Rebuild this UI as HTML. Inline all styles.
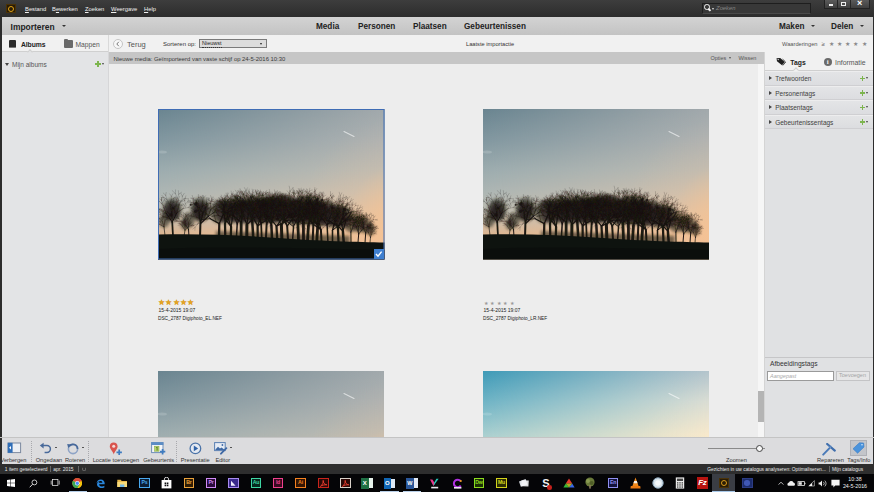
<!DOCTYPE html>
<html><head><meta charset="utf-8"><title>Organizer</title>
<style>
*{box-sizing:border-box;margin:0;padding:0}
html,body{width:874px;height:492px;overflow:hidden;background:#ededed;font-family:"Liberation Sans",sans-serif;}
.a{position:absolute;white-space:nowrap}
#title{left:0;top:0;width:874px;height:17px;background:linear-gradient(#3d3d3d,#2c2c2c)}
#title .m{top:5px;font-size:5.8px;color:#f0f0f0;line-height:8px}
#title .m u{text-decoration-thickness:0.5px;text-underline-offset:0.5px}
#nav{left:0;top:17px;width:874px;height:18px;background:linear-gradient(#d3d3d3,#c3c3c3);border-left:2px solid #2c2c2c;border-right:1px solid #2c2c2c}
.hb{font-family:"Liberation Sans",sans-serif;font-weight:bold;font-size:8.2px;color:#222;line-height:10px;top:21.8px}
#sub{left:0;top:35px;width:874px;height:17px;background:#f1f1f1;border-left:2px solid #2c2c2c;border-right:1px solid #2c2c2c}
.t6{font-size:6px;color:#333;line-height:8px}
.t7{font-size:7.5px;color:#444;line-height:9px}
#left{left:0;top:52px;width:109.4px;height:385px;background:#e3e4e6;border-left:2px solid #2c2c2c;border-right:1px solid #d6d6d8}
#main{left:109px;top:52px;width:656px;height:385px;background:#ededed}
#nm{left:109.4px;top:52px;width:654.6px;height:12px;background:#c6c6c6}
#right{left:764px;top:52px;width:110px;height:385px;background:#e0e1e3;border-right:1px solid #2c2c2c;border-left:1px solid #d4d4d4}
.row{left:765px;width:108px;height:14.5px;background:linear-gradient(#e3e4e6,#dcdde0);border-top:1px solid #ededee;border-bottom:1px solid #cfcfd2}
.row span{position:absolute;left:10.2px;top:3px;font-size:6.5px;color:#404040;line-height:8px}
.tri{position:absolute;left:4px;top:4px;width:0;height:0;border-left:3px solid #444;border-top:2px solid transparent;border-bottom:2px solid transparent}
.plus{position:absolute;width:6px;height:6px}
.plus:before{content:"";position:absolute;left:2.2px;top:0.2px;width:1.6px;height:5.6px;background:#7db54e}
.plus:after{content:"";position:absolute;left:0.2px;top:2.2px;width:5.6px;height:1.6px;background:#7db54e}
.dd{position:absolute;width:0;height:0;border-top:2px solid #444;border-left:1.5px solid transparent;border-right:1.5px solid transparent}
#tool{left:0;top:437px;width:874px;height:27px;background:#dcdcde;border-top:1px solid #c4c4c4}
#tool .l{font-size:5.7px;color:#333;line-height:7px;top:18.5px}
.sep{top:3px;width:0;height:21px;border-left:1px dotted #a9a9ad}
#status{left:0;top:464px;width:874px;height:10px;background:#2e2e2e}
#status .s{font-size:5.1px;color:#e8e8e8;top:2px;line-height:7px}
#task{left:0;top:474px;width:874px;height:18px;background:#050507}
.ti{position:absolute;top:3px;width:11px;height:11px;font-size:5px;line-height:9px;text-align:center;font-weight:bold;font-family:"Liberation Sans",sans-serif}
</style></head><body>

<!-- main area -->
<div class="a" id="main"></div>
<div class="a" id="nm">
  <div class="a t6" style="left:4px;top:2.6px;color:#3a3a3a;font-size:5.9px">Nieuwe media: Geïmporteerd van vaste schijf op 24-5-2016 10:30</div>
  <div class="a t6" style="left:601px;top:2px;color:#555;font-size:5.5px">Opties</div>
  <div class="dd" style="left:620px;top:5px;border-top-color:#555"></div>
  <div class="a t6" style="left:629px;top:2px;color:#555;font-size:5.5px">Wissen</div>
</div>
<!-- scrollbar -->
<div class="a" style="left:758px;top:64px;width:6px;height:373px;background:#f6f6f6"></div>
<div class="a" style="left:758px;top:391px;width:5.5px;height:31px;background:#b4b4b4"></div>

<!-- PHOTOS placeholder -->
<svg class="a" style="left:158px;top:109px" width="226.5" height="150.5" viewBox="0 0 226.5 150.5"><defs><linearGradient id="p1L" x1="0" y1="0" x2="0" y2="1"><stop offset="0" stop-color="#6a8591"/><stop offset="0.2" stop-color="#8197a0"/><stop offset="0.4" stop-color="#9cacaf"/><stop offset="0.55" stop-color="#adb6b4"/><stop offset="0.68" stop-color="#bcbbb1"/><stop offset="0.76" stop-color="#cdbba6"/><stop offset="0.84" stop-color="#dfb690"/></linearGradient><linearGradient id="p1R" x1="0" y1="0" x2="0" y2="1"><stop offset="0" stop-color="#a2a9ac"/><stop offset="0.2" stop-color="#aeb2b2"/><stop offset="0.4" stop-color="#bdbbb3"/><stop offset="0.55" stop-color="#cfc0ae"/><stop offset="0.68" stop-color="#dfc2a6"/><stop offset="0.84" stop-color="#efc19a"/></linearGradient><linearGradient id="p1M" x1="0" y1="0" x2="1" y2="0"><stop offset="0" stop-color="#000"/><stop offset="1" stop-color="#fff"/></linearGradient><mask id="p1K" maskContentUnits="objectBoundingBox"><rect width="1" height="1" fill="url(#p1M)"/></mask><filter id="p1B" x="-5%" y="-5%" width="110%" height="110%"><feGaussianBlur stdDeviation="0.4"/></filter><filter id="p1C" x="-5%" y="-5%" width="110%" height="110%"><feGaussianBlur stdDeviation="1.6"/></filter><radialGradient id="p1G" gradientUnits="userSpaceOnUse" cx="246" cy="112" r="105"><stop offset="0" stop-color="#f8c391" stop-opacity="0.9"/><stop offset="0.28" stop-color="#f8c391" stop-opacity="0.5"/><stop offset="0.55" stop-color="#f8c391" stop-opacity="0.12"/><stop offset="1" stop-color="#f8c391" stop-opacity="0"/></radialGradient></defs><rect width="226.5" height="150.5" fill="url(#p1L)"/><rect width="226.5" height="150.5" fill="url(#p1R)" mask="url(#p1K)"/><rect width="226.5" height="150.5" fill="url(#p1G)"/><path d="M186 22.5 L196 27.5" stroke="#fff" stroke-opacity="0.6" stroke-width="1.1" stroke-linecap="round"/><ellipse cx="4" cy="43" rx="5" ry="1.6" fill="#fff" fill-opacity="0.16"/><g filter="url(#p1C)" fill="#1e1a14" fill-opacity="0.58"><ellipse cx="14.2" cy="101.2" rx="9.5" ry="11.8"/><ellipse cx="14.2" cy="102.2" rx="7.6" ry="9.1"/><ellipse cx="14.2" cy="103.2" rx="5.3" ry="7.6"/><ellipse cx="6.0" cy="111.8" rx="5.5" ry="6.8"/><ellipse cx="42.4" cy="100.8" rx="10.0" ry="12.4"/><ellipse cx="42.4" cy="101.8" rx="8.0" ry="9.6"/><ellipse cx="42.4" cy="102.8" rx="5.6" ry="8.0"/><ellipse cx="30.5" cy="111.3" rx="6.0" ry="7.4"/><ellipse cx="27.0" cy="115.2" rx="4.5" ry="5.6"/><ellipse cx="61.3" cy="102.7" rx="9.5" ry="11.8"/><ellipse cx="67.0" cy="102.2" rx="9.8" ry="12.1"/><ellipse cx="73.1" cy="102.9" rx="9.6" ry="11.9"/><ellipse cx="79.2" cy="100.5" rx="10.6" ry="13.1"/><ellipse cx="83.2" cy="102.7" rx="9.8" ry="12.2"/><ellipse cx="88.9" cy="102.6" rx="9.9" ry="12.3"/><ellipse cx="94.3" cy="100.3" rx="10.9" ry="13.5"/><ellipse cx="99.6" cy="102.4" rx="10.2" ry="12.6"/><ellipse cx="103.1" cy="101.7" rx="10.5" ry="13.0"/><ellipse cx="108.6" cy="100.8" rx="10.9" ry="13.5"/><ellipse cx="113.4" cy="100.6" rx="11.0" ry="13.6"/><ellipse cx="118.5" cy="100.3" rx="11.2" ry="13.9"/><ellipse cx="123.4" cy="99.3" rx="11.6" ry="14.4"/><ellipse cx="129.2" cy="100.5" rx="11.2" ry="13.9"/><ellipse cx="135.5" cy="102.2" rx="10.7" ry="13.2"/><ellipse cx="139.9" cy="102.3" rx="10.7" ry="13.3"/><ellipse cx="145.4" cy="100.8" rx="11.4" ry="14.1"/><ellipse cx="150.5" cy="103.7" rx="10.3" ry="12.8"/><ellipse cx="155.3" cy="101.6" rx="11.2" ry="13.9"/><ellipse cx="159.8" cy="103.2" rx="10.6" ry="13.2"/><ellipse cx="162.9" cy="105.6" rx="9.8" ry="12.2"/><ellipse cx="169.1" cy="104.1" rx="10.5" ry="13.0"/><ellipse cx="174.5" cy="106.9" rx="9.5" ry="11.8"/><ellipse cx="179.9" cy="107.4" rx="9.4" ry="11.6"/><ellipse cx="184.9" cy="108.1" rx="9.2" ry="11.4"/><ellipse cx="192.9" cy="115.0" rx="6.8" ry="8.4"/><ellipse cx="200.7" cy="115.2" rx="6.8" ry="8.4"/><ellipse cx="207.7" cy="116.8" rx="6.2" ry="7.8"/><ellipse cx="212.5" cy="120.4" rx="5.0" ry="6.2"/><rect x="58" y="122" width="134" height="9" transform="rotate(2 58 122)"/></g><g filter="url(#p1B)" stroke="#17130e" fill="none" stroke-linecap="round"><path d="M21.1 95.8L19.6 89.3M19.6 89.3L17.3 84.6M17.3 84.6L14.2 81.6M17.3 84.6L17.6 80.8M19.6 89.3L20.8 85.1M20.8 85.1L20.3 81.6M20.8 85.1L23.5 83.3M20.0 91.1L21.8 87.1M21.1 95.8L24.0 91.4M24.0 91.4L24.4 87.2M24.4 87.2L22.9 84.4M24.4 87.2L26.2 84.4M24.0 91.4L27.0 89.5M27.0 89.5L27.9 86.8M27.0 89.5L29.6 89.7M23.1 92.8L26.3 91.8M25.1 99.6L27.3 95.0M27.3 95.0L26.7 91.7M26.7 91.7L25.6 89.5M26.7 91.7L27.1 89.1M27.3 95.0L30.0 92.4M30.0 92.4L30.5 89.6M30.0 92.4L32.7 91.5M26.4 97.0L24.7 94.1M25.1 99.6L30.1 98.5M30.1 98.5L32.8 95.9M32.8 95.9L33.8 93.2M32.8 95.9L35.5 95.7M30.1 98.5L33.3 99.1M33.3 99.1L35.5 97.5M33.3 99.1L35.5 100.4M27.0 99.2L28.2 96.1M16.3 99.8L12.9 95.7M12.9 95.7L9.0 93.9M12.9 95.7L12.7 92.1M16.3 99.8L18.7 95.7M18.7 95.7L19.7 92.2M18.7 95.7L21.6 94.8M17.1 103.6L19.7 100.2M12.0 95.5L8.9 90.5M8.9 90.5L5.7 88.4M5.7 88.4L3.3 88.5M5.7 88.4L3.9 86.4M8.9 90.5L7.7 86.3M7.7 86.3L5.2 84.0M7.7 86.3L8.2 83.5M10.4 93.0L6.7 91.8M12.0 95.5L13.2 91.0M13.2 91.0L13.4 87.3M13.4 87.3L11.7 84.9M13.4 87.3L14.8 84.8M13.2 91.0L15.8 89.2M15.8 89.2L17.3 87.6M15.8 89.2L18.0 88.9M12.6 93.3L15.4 92.0M12.5 97.5L15.1 93.5M15.1 93.5L15.8 90.1M15.1 93.5L18.8 92.2M17.0 97.5L18.6 93.9M18.6 93.9L18.4 90.8M18.4 90.8L17.3 88.4M18.4 90.8L18.8 88.4M18.6 93.9L20.0 91.9M20.0 91.9L20.3 90.2M20.0 91.9L21.5 91.4M17.0 97.5L20.8 96.0M20.8 96.0L22.0 93.1M22.0 93.1L22.8 91.1M22.0 93.1L23.6 91.6M20.8 96.0L23.4 96.1M23.4 96.1L25.3 95.5M23.4 96.1L24.8 96.8M18.5 96.9L20.8 98.1M9.3 102.8L5.1 101.5M5.1 101.5L1.6 102.3M5.1 101.5L2.5 99.5M9.3 102.8L7.4 97.8M7.4 97.8L4.7 95.9M7.4 97.8L8.6 93.8M1.6 100.6L-3.7 101.5M-3.7 101.5L-6.6 104.5M-6.6 104.5L-6.9 107.9M-6.6 104.5L-9.4 106.6M-3.7 101.5L-7.8 101.4M-7.8 101.4L-10.7 101.6M-7.8 101.4L-10.1 100.0M-2.3 101.3L-4.2 104.2M1.6 100.6L-1.4 95.5M-1.4 95.5L-5.1 92.5M-5.1 92.5L-9.0 92.8M-5.1 92.5L-6.4 89.7M-1.4 95.5L-1.8 91.4M-1.8 91.4L-3.6 88.7M-1.8 91.4L-1.5 88.3M-0.8 96.5L-0.2 92.7M5.1 102.6L0.0 103.1M0.0 103.1L-2.6 104.7M0.0 103.1L-3.3 102.1M5.9 98.7L3.7 94.5M3.7 94.5L1.2 92.4M1.2 92.4L-0.9 92.2M1.2 92.4L-0.1 90.2M3.7 94.5L3.7 91.0M3.7 91.0L3.4 88.6M3.7 91.0L4.2 88.2M5.9 98.7L4.7 94.1M4.7 94.1L3.5 91.3M3.5 91.3L1.8 90.1M3.5 91.3L3.5 89.1M4.7 94.1L6.1 91.0M6.1 91.0L6.0 88.6M6.1 91.0L7.8 89.5M5.2 96.1L2.8 94.2M7.2 101.8L3.3 100.5M3.3 100.5L0.2 101.5M3.3 100.5L0.9 99.1M5.8 107.7L1.6 109.7M1.6 109.7L-0.7 112.2M1.6 109.7L-1.4 109.8M5.8 107.7L2.4 104.0M2.4 104.0L-0.2 101.6M2.4 104.0L1.3 100.9M6.9 111.9L5.3 108.0M5.3 108.0L2.6 105.8M2.6 105.8L0.0 105.0M2.6 105.8L1.6 103.2M5.3 108.0L5.9 105.0M5.9 105.0L4.8 103.4M5.9 105.0L7.7 103.8M5.8 109.2L7.3 106.9M6.9 111.9L9.0 108.5M9.0 108.5L8.8 105.6M8.8 105.6L7.5 103.9M8.8 105.6L9.3 103.4M9.0 108.5L11.7 106.8M11.7 106.8L13.2 105.6M11.7 106.8L14.2 106.6M7.6 110.8L10.1 109.9M4.2 112.2L1.0 108.9M1.0 108.9L-2.1 107.4M-2.1 107.4L-4.2 107.8M-2.1 107.4L-3.9 105.2M1.0 108.9L0.1 106.2M0.1 106.2L-1.4 104.2M0.1 106.2L0.9 104.3M4.2 112.2L4.7 107.8M4.7 107.8L4.2 104.7M4.2 104.7L3.5 102.8M4.2 104.7L4.8 102.8M4.7 107.8L5.8 105.0M5.8 105.0L5.6 102.8M5.8 105.0L7.4 103.4M4.4 110.5L3.1 108.1M0.8 114.9L-3.9 114.4M-3.9 114.4L-7.3 115.4M-7.3 115.4L-8.5 117.4M-7.3 115.4L-9.5 114.8M-3.9 114.4L-7.3 113.2M-7.3 113.2L-9.4 113.6M-7.3 113.2L-8.9 111.5M0.8 114.9L-0.8 110.9M-0.8 110.9L-3.6 109.5M-3.6 109.5L-5.8 109.5M-3.6 109.5L-4.8 107.7M-0.8 110.9L-0.4 107.9M-0.4 107.9L-1.3 105.8M-0.4 107.9L0.8 105.9M3.9 116.6L2.4 113.0M2.4 113.0L-0.2 111.6M2.4 113.0L3.3 110.3M52.5 94.3L50.8 90.9M50.8 90.9L49.3 88.5M50.8 90.9L50.8 88.4M52.5 94.3L53.6 89.9M53.6 89.9L52.6 86.6M53.6 89.9L55.7 88.0M57.1 97.3L58.8 94.1M58.8 94.1L59.2 91.8M58.8 94.1L61.0 93.2M57.1 97.3L60.8 96.0M60.8 96.0L63.0 94.7M60.8 96.0L63.4 96.1M54.8 98.9L55.7 95.8M58.3 100.1L59.0 96.7M59.0 96.7L58.5 94.4M59.0 96.7L60.7 94.7M58.3 100.1L61.3 98.0M61.3 98.0L62.5 95.9M61.3 98.0L63.7 98.0M57.3 101.5L60.2 101.1M60.2 103.0L62.6 100.9M62.6 100.9L63.6 99.1M62.6 100.9L64.7 100.5M60.2 103.0L63.8 103.8M63.8 103.8L66.0 103.3M63.8 103.8L65.5 105.2M58.2 103.3L60.4 105.3M54.3 104.7L56.0 100.8M56.0 100.8L56.6 97.5M56.0 100.8L58.7 99.3M47.4 105.4L47.7 100.6M47.7 100.6L46.8 97.9M47.7 100.6L49.2 97.5M47.4 105.4L49.6 100.1M49.6 100.1L50.0 96.5M49.6 100.1L52.3 97.6M46.0 109.7L50.0 107.5M37.7 96.3L34.4 95.6M34.4 95.6L32.0 96.8M34.4 95.6L32.5 94.1M37.7 96.3L35.3 94.1M35.3 94.1L32.9 93.2M35.3 94.1L35.3 91.9M40.2 97.9L37.3 98.1M40.3 94.7L38.1 92.3M38.1 92.3L35.9 91.2M38.1 92.3L38.0 89.9M40.3 94.7L40.4 92.2M40.4 92.2L39.6 90.6M40.4 92.2L40.9 90.6M40.8 96.4L38.6 95.0M43.8 102.5L39.7 101.6M39.7 101.6L36.8 101.9M39.7 101.6L37.1 99.6M48.5 93.8L48.8 91.1M48.8 91.1L48.5 88.8M48.8 91.1L50.2 89.6M48.5 93.8L51.0 91.6M51.0 91.6L51.5 89.3M51.0 91.6L53.5 91.1M48.2 96.0L46.1 94.0M51.3 94.4L53.6 91.1M53.6 91.1L54.1 88.0M53.6 91.1L56.2 89.9M51.3 94.4L53.7 92.4M53.7 92.4L55.1 90.5M53.7 92.4L55.8 92.4M35.8 94.4L32.4 93.1M32.4 93.1L29.6 93.9M32.4 93.1L31.0 91.5M35.8 94.4L35.2 90.9M35.2 90.9L33.5 88.9M35.2 90.9L36.0 88.4M38.3 96.5L37.5 93.6M38.4 91.8L35.1 89.5M35.1 89.5L32.6 89.2M35.1 89.5L34.2 86.4M38.4 91.8L40.5 88.6M40.5 88.6L40.4 85.5M40.5 88.6L43.0 88.0M40.2 100.8L43.2 97.4M43.2 97.4L43.7 94.5M43.2 97.4L46.0 96.5M44.7 92.2L44.0 88.9M44.0 88.9L42.1 87.2M44.0 88.9L44.5 86.3M44.7 92.2L45.8 88.6M45.8 88.6L45.3 86.4M45.8 88.6L47.6 86.7M49.4 94.8L52.8 92.4M52.8 92.4L55.0 90.5M52.8 92.4L56.3 92.1M49.4 94.8L52.8 94.4M52.8 94.4L54.4 92.5M52.8 94.4L54.8 95.3M42.5 101.3L46.9 98.8M46.9 98.8L48.7 95.4M46.9 98.8L50.5 98.8M46.7 101.9L49.0 97.7M49.0 97.7L49.1 94.1M49.0 97.7L51.6 95.7M46.7 101.9L50.4 99.8M50.4 99.8L52.9 97.9M50.4 99.8L52.9 98.7M30.5 114.0L29.3 109.0M29.3 109.0L27.5 105.5M27.5 105.5L25.2 103.4M27.5 105.5L28.3 103.1M29.3 109.0L30.2 105.5M30.2 105.5L29.9 102.8M30.2 105.5L32.3 103.5M29.7 110.5L31.1 107.5M30.5 114.0L32.5 109.8M32.5 109.8L33.3 106.2M33.3 106.2L32.7 103.5M33.3 106.2L34.9 103.7M32.5 109.8L35.0 107.6M35.0 107.6L35.5 104.9M35.0 107.6L37.0 106.6M31.6 111.7L30.2 109.1M30.5 116.1L27.2 113.5M27.2 113.5L24.4 112.9M27.2 113.5L26.1 111.0M27.4 114.8L23.1 112.3M23.1 112.3L20.1 112.2M20.1 112.2L18.1 112.4M20.1 112.2L17.9 111.8M23.1 112.3L20.9 109.5M20.9 109.5L18.4 108.8M20.9 109.5L19.9 107.2M26.0 114.0L25.5 110.8M27.4 114.8L27.3 110.1M27.3 110.1L25.6 107.0M25.6 107.0L23.2 105.3M25.6 107.0L25.8 104.2M27.3 110.1L28.0 107.3M28.0 107.3L27.7 105.2M28.0 107.3L29.5 106.1M27.3 112.2L29.6 110.2M26.6 115.3L22.3 112.7M22.3 112.7L18.9 112.0M18.9 112.0L16.7 112.6M18.9 112.0L17.1 110.3M22.3 112.7L20.3 109.4M20.3 109.4L18.1 108.7M20.3 109.4L19.4 106.7M25.3 114.5L22.0 114.9M26.6 115.3L26.5 110.6M26.5 110.6L23.9 108.0M23.9 108.0L21.7 107.3M23.9 108.0L23.7 105.6M26.5 110.6L28.0 107.2M28.0 107.2L28.5 104.8M28.0 107.2L29.7 105.6M27.4 116.4L23.2 115.8M23.2 115.8L20.0 116.3M23.2 115.8L20.6 114.1M30.5 117.8L31.8 114.9M31.8 114.9L32.3 112.5M31.8 114.9L33.6 113.2M30.5 117.8L33.6 116.4M33.6 116.4L35.4 114.7M33.6 116.4L36.0 116.9M28.2 119.9L27.7 116.8M27.0 116.2L25.2 113.5M25.2 113.5L23.7 112.4M25.2 113.5L25.0 111.6M27.0 116.2L27.2 112.7M27.2 112.7L26.5 110.6M27.2 112.7L28.5 110.8M27.0 117.4L25.1 114.9M24.3 117.0L22.0 114.8M22.0 114.8L19.6 114.2M22.0 114.8L20.9 112.8M24.3 117.0L24.2 113.5M24.2 113.5L23.3 111.2M24.2 113.5L25.7 111.9M63.9 94.2L61.1 92.3M61.1 92.3L58.9 91.7M61.1 92.3L59.3 90.4M63.9 94.2L64.5 90.8M64.5 90.8L64.5 88.4M64.5 90.8L66.4 89.4M69.5 93.9L70.6 90.7M70.6 90.7L70.7 88.3M70.6 90.7L72.6 88.8M69.5 93.9L72.2 92.2M72.2 92.2L73.6 90.4M72.2 92.2L74.4 92.2M65.7 102.4L63.2 98.5M63.2 98.5L60.4 96.0M63.2 98.5L63.0 95.5M73.2 94.4L73.3 90.1M73.3 90.1L72.5 86.7M73.3 90.1L74.6 87.1M73.2 94.4L76.0 91.7M76.0 91.7L76.4 89.3M76.0 91.7L78.4 90.6M75.4 98.0L78.6 95.8M78.6 95.8L79.7 93.4M78.6 95.8L80.9 94.6M75.4 98.0L78.5 98.6M78.5 98.6L81.0 98.9M78.5 98.6L80.6 99.4M73.2 99.0L76.3 99.7M67.3 103.3L66.9 98.3M66.9 98.3L64.4 95.7M66.9 98.3L68.8 95.8M69.7 103.4L72.0 99.2M72.0 99.2L72.1 95.7M72.0 99.2L74.3 97.4M69.7 103.4L73.9 102.4M73.9 102.4L76.5 101.4M73.9 102.4L76.8 102.9M66.0 106.2L66.7 101.9M63.7 95.1L61.7 92.9M61.7 92.9L59.6 92.0M61.7 92.9L61.4 91.1M63.7 95.1L62.8 92.5M62.8 92.5L61.4 91.5M62.8 92.5L63.1 90.6M67.7 95.1L67.2 92.3M67.2 92.3L66.5 90.4M67.2 92.3L68.0 90.3M67.7 95.1L69.6 93.1M69.6 93.1L70.0 91.1M69.6 93.1L71.7 92.4M65.7 100.4L63.7 96.9M63.7 96.9L61.1 95.6M63.7 96.9L62.9 94.0M75.9 98.5L77.1 95.6M77.1 95.6L77.7 93.2M77.1 95.6L79.1 94.2M75.9 98.5L78.8 96.3M78.8 96.3L80.5 93.9M78.8 96.3L81.1 95.7M78.0 101.0L80.3 98.2M80.3 98.2L81.1 95.6M80.3 98.2L82.1 96.1M78.0 101.0L82.7 100.6M82.7 100.6L86.0 98.7M82.7 100.6L85.4 101.7M76.6 101.2L79.0 98.2M39.7 114.9L37.1 118.3M37.1 118.3L36.9 121.3M37.1 118.3L34.8 120.1M39.7 114.9L35.7 116.3M35.7 116.3L33.4 117.9M35.7 116.3L32.5 116.2M38.4 108.1L33.6 107.1M33.6 107.1L30.4 107.1M33.6 107.1L30.8 106.0M38.4 108.1L36.2 103.4M36.2 103.4L33.2 101.5M36.2 103.4L36.3 99.9M49.1 110.1L44.4 107.9M44.4 107.9L40.4 107.9M44.4 107.9L42.5 105.4M43.7 102.4L40.2 101.6M40.2 101.6L37.8 102.1M40.2 101.6L38.0 99.9M43.7 102.4L41.5 100.3M41.5 100.3L39.7 98.8M41.5 100.3L40.6 98.6M47.6 99.1L45.4 95.5M45.4 95.5L43.5 93.2M45.4 95.5L44.5 93.1M47.6 99.1L48.8 95.5M48.8 95.5L48.5 92.6M48.8 95.5L50.6 93.5M47.7 101.3L49.9 98.8M49.8 106.7L51.2 102.4M51.2 102.4L51.2 98.8M51.2 102.4L53.2 100.0M56.3 106.5L54.3 102.0M54.3 102.0L51.7 100.3M54.3 102.0L54.8 98.5M56.3 106.5L56.6 102.0M56.6 102.0L54.9 99.5M56.6 102.0L58.9 99.4M71.2 93.4L69.1 90.6M69.1 90.6L66.7 89.9M69.1 90.6L67.9 88.0M71.2 93.4L71.1 90.2M71.1 90.2L70.4 88.2M71.1 90.2L72.4 88.1M78.4 93.6L79.3 88.5M79.3 88.5L78.5 85.4M79.3 88.5L81.4 85.4M78.4 93.6L82.2 91.6M82.2 91.6L83.9 89.4M82.2 91.6L85.2 91.6M76.4 95.4L77.0 91.3M72.9 102.2L76.9 99.0M76.9 99.0L79.2 96.4M76.9 99.0L80.3 98.1M79.2 97.6L79.8 94.7M79.8 94.7L79.7 92.4M79.8 94.7L80.8 92.9M79.2 97.6L81.6 95.3M81.6 95.3L82.6 93.4M81.6 95.3L83.6 94.6M82.7 99.5L84.9 97.0M84.9 97.0L85.8 94.5M84.9 97.0L86.8 95.6M82.7 99.5L87.0 98.8M87.0 98.8L89.1 96.8M87.0 98.8L90.5 98.5M80.0 100.6L81.0 97.3M75.5 103.2L79.8 104.3M79.8 104.3L82.5 104.0M79.8 104.3L81.8 106.0M62.8 93.6L59.6 92.1M59.6 92.1L57.1 92.3M59.6 92.1L57.7 90.8M62.8 93.6L62.1 90.3M62.1 90.3L60.6 88.3M62.1 90.3L62.1 88.0M67.2 93.3L67.2 90.5M67.2 90.5L66.2 88.7M67.2 90.5L68.5 88.9M67.2 93.3L69.9 91.0M69.9 91.0L71.5 89.0M69.9 91.0L72.7 90.4M66.1 96.1L64.7 93.6M65.9 91.4L64.0 88.6M64.0 88.6L62.2 87.1M64.0 88.6L63.3 86.0M65.9 91.4L67.3 88.2M67.3 88.2L67.0 85.7M67.3 88.2L69.4 86.3M66.4 93.1L68.0 90.3M69.9 90.9L69.3 86.7M69.3 86.7L67.9 84.2M69.3 86.7L70.6 84.0M69.9 90.9L73.7 87.9M73.7 87.9L74.6 84.6M73.7 87.9L77.0 87.7M67.1 98.6L64.8 94.0M64.8 94.0L61.4 92.1M64.8 94.0L64.8 90.0M72.0 102.5L73.6 98.6M73.6 98.6L72.8 95.6M73.6 98.6L75.4 95.7M72.0 102.5L76.1 101.4M76.1 101.4L77.9 99.4M76.1 101.4L78.5 102.3M67.0 93.2L64.9 90.8M64.9 90.8L62.5 90.5M64.9 90.8L63.6 88.7M67.0 93.2L67.1 89.2M67.1 89.2L65.5 86.9M67.1 89.2L68.6 87.3M68.1 96.1L64.8 95.3M68.6 93.2L67.0 90.1M67.0 90.1L64.9 89.1M67.0 90.1L67.2 87.9M68.6 93.2L69.2 89.3M69.2 89.3L68.4 86.4M69.2 89.3L70.8 86.8M68.7 95.8L70.7 93.3M69.1 99.5L66.3 96.3M66.3 96.3L63.2 95.3M66.3 96.3L65.2 93.5M77.1 94.0L78.2 90.0M78.2 90.0L77.3 87.6M78.2 90.0L80.4 87.7M77.1 94.0L80.5 92.0M80.5 92.0L82.8 89.8M80.5 92.0L83.6 91.9M76.3 95.7L79.7 94.9M79.5 96.6L81.9 94.1M81.9 94.1L82.8 91.8M81.9 94.1L84.4 93.4M79.5 96.6L83.4 95.3M83.4 95.3L85.4 93.9M83.4 95.3L86.6 95.0M77.1 97.8L79.0 95.0M74.7 105.1L76.9 100.1M76.9 100.1L76.5 96.1M76.9 100.1L79.8 96.9M74.7 105.1L79.3 105.5M79.3 105.5L82.3 103.3M79.3 105.5L82.3 107.0M72.1 106.6L76.6 106.5M61.7 98.8L58.0 97.2M58.0 97.2L55.6 97.1M58.0 97.2L56.2 95.5M61.7 98.8L59.8 95.3M59.8 95.3L57.8 93.6M59.8 95.3L60.4 92.5M64.1 100.2L62.7 97.0M66.1 95.8L63.9 92.7M63.9 92.7L61.9 91.4M63.9 92.7L64.1 89.6M66.1 95.8L66.0 92.1M66.0 92.1L65.3 89.5M66.0 92.1L66.6 89.9M66.3 99.5L63.1 97.4M69.4 95.3L66.8 92.8M66.8 92.8L64.0 92.4M66.8 92.8L64.7 90.8M69.4 95.3L69.6 91.6M69.6 91.6L68.3 88.8M69.6 91.6L71.8 89.5M75.2 97.0L77.0 94.0M77.0 94.0L76.5 91.5M77.0 94.0L79.4 92.8M75.2 97.0L79.5 96.6M79.5 96.6L82.4 95.7M79.5 96.6L82.2 97.9M72.6 98.9L72.7 95.3M72.7 104.9L73.1 99.7M73.1 99.7L71.5 95.8M73.1 99.7L74.9 96.8M72.7 104.9L76.4 100.7M76.4 100.7L78.3 96.7M76.4 100.7L80.2 99.3M71.9 107.7L69.8 103.8M54.3 107.3L50.7 109.4M50.7 109.4L48.7 111.9M50.7 109.4L48.1 109.7M54.3 107.3L49.8 105.5M49.8 105.5L46.5 105.2M49.8 105.5L47.9 102.9M57.8 102.5L55.7 99.8M55.7 99.8L53.9 98.7M55.7 99.8L55.4 97.4M57.8 102.5L57.6 99.5M57.6 99.5L56.7 97.7M57.6 99.5L58.9 97.8M61.8 96.9L58.1 95.2M58.1 95.2L55.2 95.4M58.1 95.2L55.9 93.0M61.8 96.9L61.7 92.2M61.7 92.2L60.9 89.1M61.7 92.2L63.8 89.8M62.9 99.0L64.3 95.5M64.8 96.6L63.6 93.5M63.6 93.5L61.9 92.0M63.6 93.5L64.0 91.5M64.8 96.6L66.9 93.1M66.9 93.1L67.0 90.4M66.9 93.1L69.8 91.8M64.7 99.2L67.6 97.2M65.1 103.6L60.5 101.3M60.5 101.3L56.6 101.7M60.5 101.3L57.8 98.3M70.8 96.8L67.4 95.8M67.4 95.8L65.2 96.1M67.4 95.8L65.9 94.1M70.8 96.8L70.4 93.0M70.4 93.0L69.9 90.4M70.4 93.0L71.1 90.3M71.9 98.1L71.4 94.9M75.8 96.4L75.9 92.7M75.9 92.7L75.7 89.8M75.9 92.7L76.8 90.4M75.8 96.4L78.4 93.6M78.4 93.6L79.3 90.7M78.4 93.6L81.1 92.3M75.0 98.5L77.9 97.8M74.3 104.0L77.3 100.7M77.3 100.7L78.8 98.2M77.3 100.7L80.6 100.1M76.7 95.2L75.0 92.0M75.0 92.0L72.6 90.3M75.0 92.0L74.9 89.6M76.7 95.2L78.1 91.9M78.1 91.9L78.2 89.0M78.1 91.9L79.6 89.7M76.9 96.4L74.4 94.3M81.5 96.6L83.3 93.8M83.3 93.8L83.4 91.6M83.3 93.8L85.2 92.8M81.5 96.6L85.6 95.4M85.6 95.4L87.8 92.8M85.6 95.4L88.4 95.6M80.5 97.4L84.0 97.4M76.6 102.3L74.6 97.6M74.6 97.6L72.9 95.0M74.6 97.6L74.9 94.4M70.8 104.8L66.5 102.8M66.5 102.8L63.6 102.3M66.5 102.8L64.5 100.2M70.8 104.8L70.4 100.0M70.4 100.0L68.0 97.7M70.4 100.0L71.3 96.7M72.0 106.9L72.6 102.6M82.6 96.9L79.1 93.0M79.1 93.0L75.1 91.6M75.1 91.6L72.3 92.3M75.1 91.6L72.8 89.8M79.1 93.0L77.8 89.2M77.8 89.2L76.1 87.3M77.8 89.2L78.0 86.1M80.7 94.8L77.4 93.8M82.6 96.9L84.2 91.8M84.2 91.8L82.2 88.0M82.2 88.0L79.8 86.9M82.2 88.0L83.1 84.9M84.2 91.8L86.3 89.0M86.3 89.0L86.8 86.9M86.3 89.0L88.0 87.4M89.0 98.3L89.6 91.9M89.6 91.9L88.4 87.3M88.4 87.3L85.7 84.9M88.4 87.3L89.1 84.5M89.6 91.9L92.3 88.6M92.3 88.6L93.4 85.8M92.3 88.6L94.8 87.2M89.3 95.4L93.0 93.5M89.0 98.3L94.2 95.2M94.2 95.2L96.9 92.3M96.9 92.3L98.7 90.0M96.9 92.3L99.3 91.2M94.2 95.2L98.6 95.1M98.6 95.1L101.0 93.6M98.6 95.1L101.5 96.1M79.7 101.3L77.7 97.2M77.7 97.2L75.6 95.1M77.7 97.2L78.2 94.3M79.7 101.3L79.4 95.9M79.4 95.9L77.8 93.0M79.4 95.9L79.7 91.6M80.3 103.1L82.6 98.9M76.2 96.9L72.2 93.4M72.2 93.4L68.0 92.2M68.0 92.2L64.8 92.5M68.0 92.2L64.7 91.1M72.2 93.4L72.0 89.4M72.0 89.4L70.0 87.5M72.0 89.4L72.2 87.0M76.2 96.9L77.8 92.7M77.8 92.7L77.9 89.0M77.9 89.0L76.4 87.1M77.9 89.0L78.8 86.9M77.8 92.7L79.4 90.3M79.4 90.3L79.4 88.6M79.4 90.3L80.9 89.3M77.5 93.6L80.4 93.0M77.2 99.3L79.5 95.3M79.5 95.3L79.9 91.8M79.5 95.3L82.9 93.7M80.2 94.6L79.6 88.7M79.6 88.7L76.7 86.6M76.7 86.6L74.2 85.2M76.7 86.6L75.5 84.5M79.6 88.7L81.1 85.1M81.1 85.1L81.2 82.3M81.1 85.1L83.0 83.3M79.8 91.3L76.5 89.4M80.2 94.6L82.1 88.8M82.1 88.8L83.0 84.9M83.0 84.9L82.0 82.1M83.0 84.9L84.3 82.1M82.1 88.8L85.6 85.4M85.6 85.4L86.7 82.3M85.6 85.4L88.9 84.1M81.0 92.0L79.4 88.4M79.6 98.9L84.1 95.2M84.1 95.2L85.3 91.1M84.1 95.2L87.8 93.6M68.6 101.0L64.4 99.8M64.4 99.8L61.2 100.9M61.2 100.9L59.5 102.7M61.2 100.9L59.1 101.3M64.4 99.8L62.4 98.0M62.4 98.0L60.9 97.3M62.4 98.0L61.3 96.4M68.6 101.0L65.5 97.0M65.5 97.0L62.4 94.8M62.4 94.8L59.7 94.4M62.4 94.8L61.7 92.6M65.5 97.0L64.5 93.4M64.5 93.4L62.8 91.3M64.5 93.4L65.0 91.2M66.3 98.0L67.0 94.8M72.7 103.2L71.9 98.7M71.9 98.7L70.6 95.9M71.9 98.7L72.7 95.2M74.2 96.6L72.6 90.4M72.6 90.4L69.6 87.3M69.6 87.3L66.8 86.6M69.6 87.3L69.2 83.7M72.6 90.4L73.6 85.7M73.6 85.7L73.1 82.0M73.6 85.7L75.3 82.8M74.2 96.6L76.0 91.9M76.0 91.9L76.3 88.5M76.3 88.5L75.6 86.6M76.3 88.5L77.8 86.9M76.0 91.9L77.6 89.2M77.6 89.2L78.2 87.0M77.6 89.2L80.0 88.6M74.8 94.9L77.9 93.7M69.7 103.9L63.8 103.2M63.8 103.2L59.3 105.1M63.8 103.2L59.9 101.3M69.7 103.9L66.6 100.7M66.6 100.7L63.3 99.3M66.6 100.7L65.3 98.3M79.1 88.9L75.2 86.8M75.2 86.8L71.7 87.1M75.2 86.8L73.5 84.6M79.1 88.9L79.2 84.1M79.2 84.1L77.2 81.1M79.2 84.1L81.1 80.9M80.9 92.4L82.5 88.5M82.3 88.8L81.7 84.1M81.7 84.1L79.1 81.3M81.7 84.1L83.2 81.4M82.3 88.8L84.2 85.5M84.2 85.5L84.7 82.4M84.2 85.5L86.0 83.9M82.2 91.5L79.4 89.0M83.1 99.4L86.5 95.2M86.5 95.2L88.1 91.7M86.5 95.2L90.0 93.8M87.3 92.4L86.5 89.2M86.5 89.2L85.1 87.3M86.5 89.2L87.1 86.9M87.3 92.4L89.5 90.6M89.5 90.6L90.5 88.6M89.5 90.6L91.8 89.8M89.7 94.4L91.0 92.3M91.0 92.3L91.6 90.9M91.0 92.3L92.4 90.9M89.7 94.4L92.5 93.7M92.5 93.7L94.0 92.7M92.5 93.7L94.6 93.9M88.7 95.3L89.2 92.8M85.6 99.4L84.1 95.5M84.1 95.5L81.6 93.7M84.1 95.5L84.4 93.0M78.4 103.1L73.3 101.7M73.3 101.7L69.9 102.5M73.3 101.7L70.8 99.8M78.4 103.1L75.9 98.2M75.9 98.2L71.9 96.4M75.9 98.2L75.7 94.1M80.8 105.2L76.3 104.7M80.2 91.1L77.2 88.9M77.2 88.9L75.0 87.6M77.2 88.9L76.7 86.0M80.2 91.1L79.2 87.0M79.2 87.0L76.4 85.2M79.2 87.0L79.2 83.6M81.0 92.4L81.9 88.8M84.7 90.8L84.9 87.3M84.9 87.3L84.4 85.1M84.9 87.3L85.5 85.0M84.7 90.8L86.2 87.1M86.2 87.1L86.0 84.5M86.2 87.1L88.3 85.1M83.8 93.7L87.1 92.5M87.8 90.6L85.7 86.7M85.7 86.7L83.4 84.9M85.7 86.7L86.0 83.3M87.8 90.6L88.8 86.4M88.8 86.4L87.9 83.2M88.8 86.4L90.4 84.1M92.9 92.6L93.9 88.4M93.9 88.4L94.3 85.0M93.9 88.4L96.0 86.4M92.9 92.6L96.5 92.5M96.5 92.5L98.0 91.0M96.5 92.5L99.3 92.7M91.5 93.7L95.3 93.7M82.1 100.0L79.1 96.9M79.1 96.9L76.8 95.0M79.1 96.9L77.2 93.8M82.1 100.0L81.9 95.5M81.9 95.5L79.9 93.0M81.9 95.5L83.1 92.7M83.4 103.0L79.2 101.3M63.4 102.6L59.2 102.1M59.2 102.1L56.0 102.9M59.2 102.1L56.5 100.1M63.4 102.6L59.6 100.9M59.6 100.9L57.1 100.8M59.6 100.9L57.6 98.8M64.9 100.3L61.6 98.3M61.6 98.3L58.8 98.2M61.6 98.3L60.0 96.5M64.9 100.3L63.5 97.2M63.5 97.2L61.7 95.8M63.5 97.2L63.6 95.1M69.6 97.4L67.0 96.8M67.0 96.8L65.0 97.0M67.0 96.8L65.1 95.6M69.6 97.4L67.7 94.6M67.7 94.6L65.3 94.1M67.7 94.6L67.1 92.7M73.4 95.4L72.8 92.5M72.8 92.5L71.7 90.5M72.8 92.5L73.2 90.2M73.4 95.4L74.1 92.3M74.1 92.3L73.0 90.3M74.1 92.3L75.7 90.6M73.2 98.4L75.7 96.9M102.8 97.5L102.8 93.7M102.8 93.7L101.4 91.0M102.8 93.7L103.8 91.3M102.8 97.5L105.2 94.4M105.2 94.4L105.3 91.6M105.2 94.4L107.3 92.7M101.8 100.8L104.7 99.1M106.2 99.5L108.2 96.3M108.2 96.3L108.2 93.7M108.2 96.3L110.6 94.6M106.2 99.5L110.4 98.4M110.4 98.4L113.1 97.4M110.4 98.4L113.6 99.9M104.3 100.6L107.7 101.8M98.1 106.3L97.1 101.4M97.1 101.4L95.7 98.3M97.1 101.4L97.6 98.5M108.5 101.9L108.8 97.0M108.8 97.0L107.5 94.2M108.8 97.0L110.1 94.1M108.5 101.9L111.2 99.3M111.2 99.3L111.9 96.8M111.2 99.3L114.2 99.0M107.2 103.4L107.1 99.4M110.4 107.5L114.0 107.1M114.0 107.1L115.8 105.5M114.0 107.1L115.8 108.2M110.4 107.5L113.5 109.5M113.5 109.5L116.0 109.6M113.5 109.5L114.8 111.3M107.3 106.9L109.4 110.2M102.5 106.9L107.5 108.7M107.5 108.7L111.0 108.1M107.5 108.7L111.3 110.5M86.3 91.7L83.0 89.7M83.0 89.7L80.5 89.4M83.0 89.7L81.8 87.6M86.3 91.7L86.7 88.2M86.7 88.2L85.8 85.8M86.7 88.2L88.7 86.5M86.7 92.8L87.7 89.3M89.8 91.8L90.0 87.8M90.0 87.8L88.8 85.7M90.0 87.8L90.4 85.3M89.8 91.8L91.9 88.7M91.9 88.7L92.8 86.6M91.9 88.7L94.2 87.4M89.5 101.9L91.2 96.6M91.2 96.6L90.4 92.2M91.2 96.6L93.8 94.3M98.7 94.3L98.4 90.8M98.4 90.8L97.3 88.3M98.4 90.8L99.5 89.0M98.7 94.3L101.2 91.7M101.2 91.7L102.0 89.6M101.2 91.7L103.5 91.2M102.7 98.5L106.5 97.5M106.5 97.5L108.7 95.2M106.5 97.5L108.7 98.7M102.7 98.5L106.9 100.0M106.9 100.0L109.9 99.7M106.9 100.0L108.7 102.0M101.0 98.7L103.9 101.5M84.4 105.6L79.9 103.8M79.9 103.8L76.7 103.7M79.9 103.8L77.4 101.5M84.4 105.6L82.0 101.6M82.0 101.6L78.6 99.9M82.0 101.6L80.6 98.8M86.1 107.1L81.6 107.3M77.1 94.9L73.2 94.4M73.2 94.4L70.8 95.5M73.2 94.4L70.9 92.8M77.1 94.9L75.0 90.9M75.0 90.9L72.5 89.5M75.0 90.9L74.5 87.5M79.9 97.1L76.0 96.8M83.1 93.6L82.2 89.6M82.2 89.6L80.7 87.2M82.2 89.6L82.4 86.4M83.1 93.6L85.3 90.9M85.3 90.9L86.0 88.4M85.3 90.9L87.9 90.0M82.8 94.8L86.0 93.5M83.8 102.9L85.2 98.0M85.2 98.0L84.4 94.3M85.2 98.0L87.8 95.3M78.4 95.2L74.3 94.6M74.3 94.6L71.2 95.1M74.3 94.6L72.2 92.6M78.4 95.2L76.2 92.6M76.2 92.6L74.3 91.3M76.2 92.6L75.2 90.8M83.7 93.3L83.1 89.9M83.1 89.9L81.5 87.8M83.1 89.9L83.8 87.3M83.7 93.3L85.9 89.9M85.9 89.9L85.6 87.2M85.9 89.9L88.1 88.1M83.2 96.6L86.2 95.1M83.6 100.8L85.1 96.0M85.1 96.0L84.6 92.7M85.1 96.0L87.8 93.1M81.7 108.1L76.7 108.7M76.7 108.7L73.8 110.7M76.7 108.7L73.7 106.8M81.7 108.1L78.2 105.0M78.2 105.0L75.0 104.1M78.2 105.0L76.9 101.6M79.8 91.0L75.4 90.4M75.4 90.4L72.7 91.4M75.4 90.4L72.7 88.8M79.8 91.0L77.3 87.5M77.3 87.5L74.2 85.9M77.3 87.5L77.9 84.5M84.3 88.9L80.3 87.0M80.3 87.0L76.7 87.4M80.3 87.0L78.5 85.0M84.3 88.9L84.1 84.5M84.1 84.5L82.1 81.7M84.1 84.5L85.3 81.9M85.5 92.7L82.1 91.1M89.4 98.7L90.7 92.9M90.7 92.9L90.6 88.2M90.7 92.9L92.7 88.7M88.1 86.5L83.8 83.2M83.8 83.2L80.2 83.0M83.8 83.2L82.0 79.6M88.1 86.5L87.9 81.5M87.9 81.5L86.4 78.6M87.9 81.5L89.5 78.8M89.3 88.6L89.7 83.9M95.0 87.3L94.9 83.3M94.9 83.3L94.1 80.1M94.9 83.3L95.3 80.7M95.0 87.3L99.2 85.0M99.2 85.0L102.2 83.1M99.2 85.0L102.3 84.4M93.3 90.1L93.3 85.9M86.9 101.6L81.1 100.9M81.1 100.9L77.1 101.8M81.1 100.9L77.3 98.5M86.9 101.6L84.2 96.2M84.2 96.2L81.1 92.8M84.2 96.2L84.7 92.1M92.3 87.3L89.3 84.2M89.3 84.2L86.4 82.2M89.3 84.2L88.3 81.6M92.3 87.3L91.0 83.0M91.0 83.0L89.5 80.7M91.0 83.0L91.2 80.0M93.2 89.3L94.2 85.7M98.4 88.1L98.5 84.3M98.5 84.3L97.5 81.9M98.5 84.3L99.8 82.2M98.4 88.1L101.9 85.8M101.9 85.8L103.9 83.9M101.9 85.8L104.9 85.3M96.2 90.8L95.6 87.2M99.2 87.7L98.3 83.8M98.3 83.8L97.3 80.7M98.3 83.8L99.2 80.7M99.2 87.7L101.3 84.4M101.3 84.4L101.9 82.1M101.3 84.4L103.4 82.3M99.4 89.7L96.9 86.8M104.9 91.9L108.1 89.2M108.1 89.2L109.3 86.6M108.1 89.2L110.9 89.4M104.9 91.9L108.1 93.2M108.1 93.2L110.5 93.4M108.1 93.2L109.7 94.6M102.6 92.6L104.8 89.9M97.1 98.3L95.0 93.0M95.0 93.0L91.9 90.6M95.0 93.0L95.4 89.2M81.4 92.3L77.2 91.7M77.2 91.7L74.6 91.8M77.2 91.7L74.6 90.2M81.4 92.3L78.8 89.6M78.8 89.6L76.8 88.1M78.8 89.6L77.9 87.4M82.9 93.1L79.1 93.2M84.8 89.7L81.0 87.4M81.0 87.4L77.8 86.7M81.0 87.4L78.6 85.3M84.8 89.7L85.5 85.5M85.5 85.5L83.9 82.5M85.5 85.5L87.3 82.6M85.9 92.7L86.8 89.2M93.5 88.6L92.2 84.8M92.2 84.8L90.1 83.0M92.2 84.8L91.3 82.1M93.5 88.6L94.6 85.2M94.6 85.2L94.2 82.7M94.6 85.2L95.8 83.3M94.1 92.1L96.3 89.3M99.1 91.1L101.0 87.5M101.0 87.5L101.5 84.4M101.0 87.5L103.7 86.4M99.1 91.1L103.2 89.2M103.2 89.2L105.4 86.7M103.2 89.2L106.1 88.5M98.1 91.7L101.7 91.6M94.3 99.5L92.3 95.3M92.3 95.3L89.5 92.7M92.3 95.3L92.3 91.7M94.3 99.5L95.9 95.0M95.9 95.0L95.2 91.5M95.9 95.0L98.2 92.6M93.9 101.3L92.1 96.6M112.0 98.6L110.0 95.2M110.0 95.2L107.2 94.4M110.0 95.2L110.3 92.8M112.0 98.6L114.1 94.9M114.1 94.9L113.2 91.8M114.1 94.9L116.6 93.8M112.2 100.1L109.1 98.5M117.8 101.3L119.8 98.1M119.8 98.1L120.3 95.4M119.8 98.1L122.3 96.4M117.8 101.3L121.7 100.7M121.7 100.7L124.3 99.7M121.7 100.7L124.7 101.5M116.7 101.8L120.5 102.2M111.2 106.2L116.1 104.6M116.1 104.6L118.9 102.1M116.1 104.6L119.3 103.7M119.7 105.3L121.3 102.1M121.3 102.1L121.4 99.6M121.3 102.1L123.4 100.8M119.7 105.3L123.1 105.1M123.1 105.1L125.0 103.9M123.1 105.1L125.7 105.7M119.7 107.4L122.0 105.5M122.0 105.5L122.9 103.3M122.0 105.5L123.9 105.5M119.7 107.4L123.0 108.9M123.0 108.9L125.9 108.9M123.0 108.9L124.6 110.7M118.7 107.6L120.8 105.5M113.2 109.1L116.9 111.7M116.9 111.7L120.0 111.8M116.9 111.7L118.6 114.8M104.5 106.3L102.2 101.1M102.2 101.1L99.8 98.4M102.2 101.1L101.7 97.3M104.5 106.3L105.8 101.6M105.8 101.6L105.1 98.3M105.8 101.6L108.5 98.6M104.5 109.6L100.8 106.9M86.3 98.2L83.1 97.4M83.1 97.4L80.8 98.2M83.1 97.4L81.1 95.7M86.3 98.2L85.3 94.4M85.3 94.4L83.7 91.7M85.3 94.4L86.1 92.1M87.5 99.1L86.4 96.1M89.8 96.7L88.2 93.4M88.2 93.4L86.5 91.3M88.2 93.4L88.7 91.0M89.8 96.7L90.8 94.0M90.8 94.0L91.3 91.9M90.8 94.0L92.1 92.8M90.7 95.2L88.3 92.3M88.3 92.3L85.4 92.1M88.3 92.3L88.0 89.6M90.7 95.2L91.1 91.7M91.1 91.7L90.5 89.6M91.1 91.7L92.3 89.5M91.3 96.1L88.2 95.7M93.2 94.1L91.1 90.5M91.1 90.5L88.6 88.7M91.1 90.5L91.2 87.7M93.2 94.1L93.7 90.4M93.7 90.4L92.4 87.6M93.7 90.4L95.0 88.1M91.1 109.5L85.8 109.7M85.8 109.7L82.2 112.1M85.8 109.7L82.6 107.8M91.1 109.5L86.7 106.0M86.7 106.0L83.0 106.0M86.7 106.0L84.6 102.1M93.4 110.7L90.8 106.8M102.5 93.8L100.1 91.1M100.1 91.1L97.8 90.3M100.1 91.1L99.4 88.4M102.5 93.8L102.2 89.5M102.2 89.5L100.9 86.8M102.2 89.5L103.3 86.5M103.3 95.9L100.5 93.7M108.4 94.5L109.2 90.5M109.2 90.5L108.2 87.6M109.2 90.5L111.0 88.7M108.4 94.5L112.3 92.6M112.3 92.6L114.7 90.8M112.3 92.6L115.7 93.0M107.5 95.4L107.4 91.6M107.1 94.1L105.7 91.2M105.7 91.2L103.8 89.9M105.7 91.2L105.2 89.2M107.1 94.1L107.6 90.7M107.6 90.7L106.5 88.6M107.6 90.7L108.2 88.4M106.9 96.4L104.9 93.6M109.3 95.2L110.0 91.4M110.0 91.4L110.2 89.0M110.0 91.4L111.8 88.8M109.3 95.2L112.0 93.9M112.0 93.9L113.4 92.1M112.0 93.9L114.0 94.0M108.2 97.0L111.3 96.3M105.5 102.3L104.7 97.1M104.7 97.1L104.0 94.0M104.7 97.1L104.9 93.5M98.8 105.9L95.8 101.6M95.8 101.6L92.4 99.5M95.8 101.6L95.3 98.1M98.8 105.9L97.7 101.6M97.7 101.6L96.2 99.4M97.7 101.6L98.8 98.5M99.5 108.0L95.5 105.7M87.6 95.4L82.7 96.2M82.7 96.2L79.9 98.0M82.7 96.2L79.9 94.4M87.6 95.4L84.2 91.4M84.2 91.4L80.6 90.2M84.2 91.4L82.8 87.6M89.0 95.9L85.2 97.8M91.0 91.7L87.4 88.9M87.4 88.9L84.1 87.7M87.4 88.9L85.9 85.6M91.0 91.7L90.1 87.7M90.1 87.7L87.9 86.3M90.1 87.7L90.5 85.2M91.6 93.1L93.0 89.1M104.9 90.6L104.6 86.3M104.6 86.3L102.5 83.9M104.6 86.3L106.1 83.3M104.9 90.6L108.5 88.3M108.5 88.3L109.6 85.9M108.5 88.3L111.6 89.0M104.5 91.7L102.9 88.6M105.7 90.7L105.3 86.5M105.3 86.5L104.2 83.7M105.3 86.5L105.1 83.1M105.7 90.7L109.5 88.2M109.5 88.2L110.9 85.3M109.5 88.2L112.2 88.6M104.9 92.0L105.0 88.4M101.2 99.4L106.0 97.4M106.0 97.4L108.4 94.8M106.0 97.4L109.9 97.5M102.5 98.5L102.6 93.2M102.6 93.2L101.0 89.8M102.6 93.2L104.6 89.7M102.5 98.5L105.5 93.9M105.5 93.9L106.7 90.8M105.5 93.9L107.8 91.5M86.1 100.5L83.1 102.0M83.1 102.0L81.8 104.2M83.1 102.0L81.1 102.0M86.1 100.5L83.1 98.0M83.1 98.0L80.3 97.9M83.1 98.0L82.3 95.3M89.9 96.0L87.2 94.2M87.2 94.2L85.0 93.7M87.2 94.2L85.6 92.3M89.9 96.0L90.6 92.6M90.6 92.6L90.2 90.2M90.6 92.6L92.3 91.2M90.2 97.0L92.0 94.7M90.4 94.3L87.2 93.4M87.2 93.4L85.1 93.7M87.2 93.4L85.4 92.6M90.4 94.3L87.9 91.6M87.9 91.6L85.3 91.1M87.9 91.6L87.1 89.0M91.7 95.6L91.8 92.6M93.9 92.5L92.7 89.7M92.7 89.7L90.7 88.4M92.7 89.7L92.6 87.3M93.9 92.5L95.6 89.4M95.6 89.4L95.8 87.0M95.6 89.4L97.4 87.1M93.8 95.8L91.4 93.7M95.3 100.6L90.7 99.1M90.7 99.1L87.6 99.5M90.7 99.1L87.3 97.2M97.2 91.5L93.9 91.0M93.9 91.0L91.9 92.1M93.9 91.0L91.6 89.7M97.2 91.5L96.0 88.9M96.0 88.9L94.7 87.5M96.0 88.9L96.4 86.9M101.6 89.7L100.8 85.7M100.8 85.7L98.2 83.8M100.8 85.7L100.9 83.1M101.6 89.7L104.1 86.9M104.1 86.9L105.4 84.6M104.1 86.9L106.6 85.8M100.9 92.4L98.7 89.5M100.8 97.3L103.5 93.0M103.5 93.0L102.8 89.7M103.5 93.0L107.0 91.9M106.2 89.6L104.2 86.9M104.2 86.9L102.4 85.8M104.2 86.9L104.2 84.7M106.2 89.6L108.6 86.2M108.6 86.2L108.1 83.5M108.6 86.2L110.8 84.5M106.1 91.9L109.0 89.9M110.7 91.8L113.8 88.5M113.8 88.5L114.4 85.7M113.8 88.5L116.5 87.1M110.7 91.8L115.3 91.9M115.3 91.9L118.3 90.8M115.3 91.9L118.5 92.8M107.4 94.0L108.0 90.3M98.3 99.7L94.4 97.5M94.4 97.5L91.3 97.6M94.4 97.5L92.1 94.9M98.3 99.7L97.5 94.4M97.5 94.4L95.1 91.1M97.5 94.4L97.7 91.0M99.4 101.3L100.3 96.6M114.1 91.9L112.2 88.2M112.2 88.2L110.3 86.1M112.2 88.2L111.9 85.2M114.1 91.9L115.1 87.7M115.1 87.7L115.2 84.8M115.1 87.7L117.2 84.9M114.4 95.0L111.7 92.5M117.3 93.8L117.4 90.3M117.4 90.3L116.0 88.5M117.4 90.3L118.6 88.0M117.3 93.8L120.1 91.7M120.1 91.7L120.9 89.6M120.1 91.7L122.7 91.5M113.6 102.6L117.7 100.0M117.7 100.0L119.8 97.2M117.7 100.0L121.2 98.7M121.2 93.9L123.0 89.8M123.0 89.8L122.4 86.6M123.0 89.8L125.8 87.7M121.2 93.9L123.8 89.9M123.8 89.9L123.9 86.1M123.8 89.9L126.9 88.3M122.7 96.6L124.6 93.5M124.6 93.5L124.9 91.0M124.6 93.5L127.0 91.9M122.7 96.6L126.5 97.2M126.5 97.2L129.1 96.3M126.5 97.2L128.3 99.1M116.0 101.5L121.1 101.5M121.1 101.5L124.8 99.9M121.1 101.5L124.4 102.5M108.1 103.9L105.7 99.3M105.7 99.3L103.0 97.7M105.7 99.3L105.9 95.7M108.1 103.9L109.6 98.3M109.6 98.3L109.3 94.2M109.6 98.3L111.9 94.4M99.2 90.1L94.6 87.0M94.6 87.0L90.4 86.3M94.6 87.0L93.0 84.0M99.2 90.1L98.9 84.6M98.9 84.6L97.3 81.0M98.9 84.6L100.1 81.4M100.4 91.5L95.7 90.4M103.9 88.7L102.1 84.2M102.1 84.2L100.0 81.1M102.1 84.2L102.5 81.0M103.9 88.7L107.5 84.4M107.5 84.4L108.8 81.3M107.5 84.4L111.7 82.8M103.9 92.3L106.7 88.7M105.9 99.4L100.4 96.8M100.4 96.8L96.3 96.1M100.4 96.8L97.3 93.5M115.9 91.6L115.9 87.5M115.9 87.5L114.9 85.0M115.9 87.5L117.6 85.0M115.9 91.6L118.7 89.3M118.7 89.3L120.5 87.5M118.7 89.3L121.3 89.6M115.1 93.8L114.0 90.2M118.3 93.2L120.4 89.0M120.4 89.0L120.0 85.8M120.4 89.0L123.0 86.7M118.3 93.2L122.5 93.4M122.5 93.4L125.7 92.5M122.5 93.4L124.9 94.9M116.2 95.0L119.9 96.0M112.1 99.2L117.9 98.5M117.9 98.5L121.2 96.2M117.9 98.5L121.8 98.8M98.4 91.7L94.7 88.1M94.7 88.1L90.9 88.2M94.7 88.1L92.8 84.9M98.4 91.7L96.7 86.7M96.7 86.7L93.6 84.6M96.7 86.7L97.1 82.4M100.9 95.0L101.2 90.7M100.6 92.0L97.7 89.5M97.7 89.5L94.7 88.7M97.7 89.5L96.9 87.1M100.6 92.0L100.6 87.9M100.6 87.9L100.0 85.1M100.6 87.9L101.7 85.7M101.2 93.6L98.3 91.8M104.0 99.5L105.8 94.3M105.8 94.3L106.3 90.5M105.8 94.3L108.4 91.9M105.1 90.0L102.1 86.7M102.1 86.7L98.6 86.0M102.1 86.7L101.1 84.0M105.1 90.0L107.1 85.8M107.1 85.8L107.7 82.3M107.1 85.8L109.5 83.6M106.6 93.8L108.4 90.2M110.0 90.6L110.2 86.6M110.2 86.6L108.3 84.4M110.2 86.6L111.4 84.0M110.0 90.6L113.2 88.2M113.2 88.2L115.2 86.5M113.2 88.2L116.0 87.6M108.5 93.4L106.8 90.1M107.2 98.0L104.2 93.4M104.2 93.4L101.2 90.5M104.2 93.4L103.8 89.9M113.4 89.6L111.4 86.3M111.4 86.3L109.0 84.3M111.4 86.3L111.6 83.7M113.4 89.6L114.9 86.0M114.9 86.0L114.0 83.0M114.9 86.0L117.7 84.4M118.5 89.7L119.4 85.4M119.4 85.4L117.8 82.2M119.4 85.4L120.8 83.1M118.5 89.7L121.8 86.4M121.8 86.4L122.3 82.7M121.8 86.4L124.7 84.3M120.6 91.5L119.6 87.6M119.6 87.6L117.1 85.7M119.6 87.6L120.3 84.5M120.6 91.5L123.4 88.0M123.4 88.0L124.4 85.1M123.4 88.0L126.4 86.8M123.0 93.7L124.0 89.7M124.0 89.7L122.9 86.8M124.0 89.7L125.7 87.6M123.0 93.7L126.6 91.6M126.6 91.6L128.1 89.1M126.6 91.6L129.0 90.8M117.0 101.7L122.2 100.7M122.2 100.7L124.9 97.7M122.2 100.7L124.9 102.4M121.5 108.6L126.3 105.7M126.3 105.7L128.9 102.2M126.3 105.7L129.6 104.2M121.5 108.6L127.4 107.2M127.4 107.2L130.4 104.2M127.4 107.2L132.2 108.3M97.6 96.6L93.5 95.9M93.5 95.9L90.5 96.7M93.5 95.9L90.5 94.6M97.6 96.6L95.2 93.3M95.2 93.3L92.2 92.8M95.2 93.3L94.2 90.3M100.2 98.2L98.4 94.9M99.9 93.1L96.1 89.4M96.1 89.4L92.4 87.3M96.1 89.4L94.4 85.9M99.9 93.1L101.0 87.9M101.0 87.9L101.1 84.0M101.0 87.9L104.2 85.3M101.1 96.1L97.1 93.9M104.4 101.4L98.9 102.3M98.9 102.3L95.8 104.3M98.9 102.3L95.1 102.0M107.9 89.9L105.0 86.7M105.0 86.7L101.8 86.2M105.0 86.7L104.0 83.6M107.9 89.9L108.1 85.6M108.1 85.6L106.2 83.1M108.1 85.6L109.8 83.1M109.0 93.9L110.7 89.8M112.0 91.4L112.0 86.9M112.0 86.9L110.4 84.2M112.0 86.9L113.8 83.8M112.0 91.4L114.1 87.8M114.1 87.8L114.0 84.6M114.1 87.8L117.0 86.2M111.0 93.6L114.3 92.2M104.3 92.9L100.9 90.2M100.9 90.2L97.8 89.5M100.9 90.2L100.2 87.4M104.3 92.9L103.1 88.7M103.1 88.7L102.2 85.7M103.1 88.7L104.1 86.2M105.5 94.0L101.9 93.8M105.5 90.7L101.7 88.7M101.7 88.7L98.9 88.8M101.7 88.7L99.9 85.8M105.5 90.7L104.7 85.8M104.7 85.8L102.7 82.4M104.7 85.8L105.4 82.5M107.0 93.9L107.5 89.6M110.1 100.1L110.2 94.3M110.2 94.3L109.8 90.0M110.2 94.3L111.6 89.9M115.0 88.3L112.2 84.1M112.2 84.1L109.1 83.4M112.2 84.1L111.3 80.3M115.0 88.3L116.8 84.3M116.8 84.3L116.4 80.8M116.8 84.3L118.5 82.0M117.6 90.1L119.2 85.4M119.2 85.4L119.5 81.7M119.2 85.4L121.2 82.6M117.6 90.1L121.7 87.4M121.7 87.4L123.2 84.1M121.7 87.4L125.2 86.7M113.9 99.0L112.0 93.4M112.0 93.4L108.3 90.6M112.0 93.4L112.4 89.0M139.6 102.7L141.1 98.1M141.1 98.1L141.2 94.9M141.1 98.1L143.6 95.3M139.6 102.7L143.0 100.8M143.0 100.8L144.8 98.8M143.0 100.8L145.5 100.7M138.7 103.7L142.4 102.4M141.4 106.1L143.8 102.8M143.8 102.8L145.2 100.4M143.8 102.8L146.2 101.8M141.4 106.1L145.8 107.7M145.8 107.7L148.8 107.0M145.8 107.7L148.0 110.6M145.1 108.0L148.7 104.2M148.7 104.2L149.1 100.2M148.7 104.2L152.4 103.7M145.1 108.0L150.3 109.5M150.3 109.5L154.1 109.0M150.3 109.5L152.1 112.4M144.7 115.2L149.6 114.6M149.6 114.6L152.5 111.8M149.6 114.6L153.6 115.7M144.7 115.2L147.3 119.2M147.3 119.2L150.0 120.8M147.3 119.2L148.2 122.6M142.8 113.9L143.7 118.4M127.0 106.2L126.6 100.8M126.6 100.8L125.6 97.6M126.6 100.8L129.0 97.6M127.0 106.2L130.4 101.8M130.4 101.8L132.2 98.4M130.4 101.8L133.6 100.2M125.8 110.3L130.3 107.8M126.2 92.2L124.0 88.1M124.0 88.1L121.1 85.9M124.0 88.1L124.4 84.6M126.2 92.2L126.5 87.6M126.5 87.6L125.9 84.9M126.5 87.6L127.8 84.8M127.4 95.5L128.8 91.6M133.9 92.7L136.1 86.9M136.1 86.9L135.5 82.9M136.1 86.9L139.2 82.9M133.9 92.7L139.2 92.3M139.2 92.3L142.9 90.7M139.2 92.3L142.5 92.9M127.8 100.1L132.4 95.8M132.4 95.8L133.2 91.9M132.4 95.8L136.9 96.1M137.9 102.2L140.2 98.6M140.2 98.6L141.3 96.1M140.2 98.6L142.6 96.9M137.9 102.2L141.7 102.3M141.7 102.3L144.2 101.3M141.7 102.3L144.5 102.9M138.6 104.4L141.6 101.8M141.6 101.8L142.6 99.3M141.6 101.8L144.1 100.8M138.6 104.4L142.4 106.3M142.4 106.3L145.4 106.0M142.4 106.3L144.3 108.3M99.1 103.1L96.2 104.6M96.2 104.6L94.1 106.0M96.2 104.6L93.9 104.6M99.1 103.1L96.3 101.0M96.3 101.0L93.5 101.0M96.3 101.0L94.7 99.0M100.1 103.2L98.1 100.4M101.6 98.3L97.9 95.2M97.9 95.2L94.6 95.5M97.9 95.2L95.7 93.1M101.6 98.3L100.3 93.6M100.3 93.6L97.7 91.1M100.3 93.6L101.2 90.5M102.8 100.6L103.8 96.8M107.9 105.8L103.0 106.3M103.0 106.3L99.7 107.7M103.0 106.3L100.2 105.3M104.9 96.1L101.0 95.8M101.0 95.8L98.4 95.9M101.0 95.8L99.0 94.3M104.9 96.1L102.9 92.2M102.9 92.2L100.7 90.4M102.9 92.2L102.2 89.5M106.0 97.1L102.1 96.7M110.9 95.3L110.7 92.2M110.7 92.2L109.7 90.3M110.7 92.2L111.6 90.3M110.9 95.3L113.3 93.1M113.3 93.1L114.6 91.3M113.3 93.1L115.6 92.4M110.1 103.7L112.4 99.2M112.4 99.2L112.2 95.1M112.4 99.2L115.5 97.6M105.8 110.9L101.2 112.7M101.2 112.7L99.1 115.4M101.2 112.7L97.3 112.0M105.8 110.9L101.2 108.6M101.2 108.6L97.2 109.4M101.2 108.6L98.9 105.5M107.8 110.9L104.8 115.1M121.8 93.3L118.5 91.1M118.5 91.1L115.4 91.7M118.5 91.1L116.6 88.7M121.8 93.3L120.6 90.5M120.6 90.5L119.1 89.1M120.6 90.5L120.8 88.2M123.7 95.2L120.5 94.8M125.4 91.7L124.1 88.7M124.1 88.7L122.4 87.1M124.1 88.7L124.0 86.2M125.4 91.7L127.5 89.0M127.5 89.0L128.7 86.8M127.5 89.0L129.7 87.8M125.4 94.9L128.2 93.0M126.6 101.8L129.2 97.3M129.2 97.3L129.3 93.7M129.2 97.3L132.1 95.4M139.4 93.6L140.4 89.2M140.4 89.2L140.4 86.5M140.4 89.2L142.1 86.9M139.4 93.6L143.5 90.7M143.5 90.7L145.2 87.9M143.5 90.7L147.2 90.4M142.9 101.2L148.6 99.2M148.6 99.2L152.2 96.2M148.6 99.2L152.4 99.4M142.9 101.2L146.7 104.1M146.7 104.1L150.0 105.0M146.7 104.1L148.3 106.8M132.2 106.5L135.8 101.2M135.8 101.2L136.1 97.3M135.8 101.2L139.1 99.0M132.2 106.5L137.9 104.1M137.9 104.1L140.3 100.1M137.9 104.1L142.5 104.5M123.4 92.5L118.4 92.2M118.4 92.2L115.4 93.4M118.4 92.2L115.0 90.7M123.4 92.5L120.8 89.2M120.8 89.2L118.3 87.4M120.8 89.2L119.7 86.7M131.0 88.6L132.3 82.3M132.3 82.3L131.2 77.1M132.3 82.3L135.2 78.3M131.0 88.6L134.5 83.9M134.5 83.9L135.1 79.1M134.5 83.9L138.0 82.8M130.0 91.3L135.0 89.6M129.5 101.6L123.5 98.6M123.5 98.6L119.2 98.1M123.5 98.6L121.1 93.9M143.3 93.7L142.3 87.4M142.3 87.4L139.9 83.6M142.3 87.4L142.2 82.9M143.3 93.7L149.4 91.2M149.4 91.2L152.3 87.4M149.4 91.2L154.1 91.2M147.4 100.1L153.3 98.3M153.3 98.3L157.4 95.5M153.3 98.3L156.9 99.7M147.4 100.1L152.4 101.2M152.4 101.2L156.3 101.3M152.4 101.2L155.3 103.0M143.5 100.4L146.8 96.2M135.5 103.1L137.4 96.7M137.4 96.7L137.4 92.3M137.4 96.7L140.0 92.2M136.7 107.7L143.1 106.0M143.1 106.0L147.6 104.6M143.1 106.0L147.4 108.5M136.7 107.7L142.6 108.2M142.6 108.2L146.2 107.5M142.6 108.2L146.0 111.0M133.8 108.2L137.3 104.1M108.7 95.6L104.3 95.9M104.3 95.9L101.7 97.1M104.3 95.9L100.8 95.1M108.7 95.6L107.1 92.2M107.1 92.2L104.8 90.5M107.1 92.2L107.4 89.4M113.0 93.6L111.2 90.5M111.2 90.5L109.2 88.8M111.2 90.5L110.7 87.7M113.0 93.6L114.2 89.8M114.2 89.8L114.6 86.5M114.2 89.8L116.4 88.3M113.2 96.7L114.9 93.4M116.1 102.7L117.5 98.0M117.5 98.0L116.0 94.9M117.5 98.0L120.3 95.4M115.9 91.3L113.1 88.5M113.1 88.5L110.0 88.2M113.1 88.5L112.5 85.4M115.9 91.3L117.0 87.3M117.0 87.3L117.4 84.0M117.0 87.3L117.8 84.8M118.7 90.5L117.8 86.5M117.8 86.5L116.9 84.1M117.8 86.5L118.0 83.6M118.7 90.5L121.2 86.8M121.2 86.8L121.9 83.5M121.2 86.8L123.9 85.0M118.1 93.2L115.4 90.1M117.8 101.9L114.2 97.5M114.2 97.5L110.4 95.6M114.2 97.5L113.9 94.0M113.1 107.7L106.5 107.9M106.5 107.9L101.8 109.4M106.5 107.9L102.7 105.2M113.1 107.7L108.7 105.3M108.7 105.3L105.3 105.1M108.7 105.3L106.9 101.6M111.2 96.4L105.4 97.5M105.4 97.5L102.5 99.8M105.4 97.5L101.5 95.8M111.2 96.4L108.6 92.4M108.6 92.4L105.9 91.1M108.6 92.4L108.6 88.8M116.0 98.4L113.1 94.6M114.8 93.0L110.3 89.4M110.3 89.4L106.5 88.5M110.3 89.4L107.0 86.3M114.8 93.0L114.9 88.4M114.9 88.4L112.9 85.9M114.9 88.4L115.8 85.0M119.7 100.8L113.6 99.5M113.6 99.5L109.6 99.2M113.6 99.5L110.0 97.0M123.2 94.1L121.2 91.9M121.2 91.9L119.6 90.7M121.2 91.9L120.6 89.8M123.2 94.1L122.6 90.4M122.6 90.4L121.1 88.0M122.6 90.4L123.5 88.1M123.7 95.0L125.0 92.2M127.4 93.6L127.0 89.6M127.0 89.6L125.9 87.5M127.0 89.6L127.5 86.4M127.4 93.6L129.9 90.6M129.9 90.6L130.8 87.8M129.9 90.6L132.8 89.6M127.0 94.7L125.2 92.0M125.5 100.2L122.5 96.5M122.5 96.5L118.9 95.7M122.5 96.5L122.8 93.1M120.5 104.9L115.7 104.0M115.7 104.0L112.4 104.8M115.7 104.0L113.3 102.4M120.5 104.9L118.7 99.3M118.7 99.3L115.5 96.7M118.7 99.3L120.9 95.2M122.9 106.7L121.8 101.7M135.5 90.5L131.4 86.8M131.4 86.8L127.8 86.2M131.4 86.8L131.1 83.4M135.5 90.5L135.7 84.8M135.7 84.8L135.7 81.1M135.7 84.8L136.7 81.2M136.5 94.6L132.0 92.6M140.7 92.5L141.7 87.6M141.7 87.6L140.2 84.8M141.7 87.6L143.4 84.7M140.7 92.5L144.3 89.8M144.3 89.8L145.3 87.1M144.3 89.8L147.5 88.6M139.6 94.3L143.3 92.4M151.5 102.3L154.1 99.2M154.1 99.2L155.4 97.0M154.1 99.2L156.3 97.4M151.5 102.3L155.5 102.8M155.5 102.8L158.2 101.7M155.5 102.8L157.7 104.4M149.8 102.9L154.0 103.7M151.8 104.5L155.9 102.4M155.9 102.4L158.1 99.5M155.9 102.4L159.5 102.8M151.8 104.5L156.3 106.3M156.3 106.3L159.1 107.1M156.3 106.3L158.1 108.8M148.7 104.6L151.8 107.4M139.5 109.8L142.0 105.7M142.0 105.7L142.1 102.5M142.0 105.7L144.9 104.0M139.5 109.8L145.5 110.7M145.5 110.7L150.1 109.4M145.5 110.7L148.9 112.4M135.2 111.6L140.0 113.3M112.4 97.8L108.2 97.1M108.2 97.1L105.3 98.3M108.2 97.1L106.4 95.1M112.4 97.8L110.1 95.0M110.1 95.0L107.6 93.8M110.1 95.0L109.2 92.2M115.7 99.4L112.0 100.6M116.0 94.5L113.4 90.9M113.4 90.9L110.5 89.3M113.4 90.9L112.3 87.7M116.0 94.5L117.0 90.6M117.0 90.6L116.2 87.7M117.0 90.6L119.0 88.2M116.6 96.7L112.9 95.0M117.0 91.9L113.0 89.8M113.0 89.8L109.9 90.3M113.0 89.8L111.2 87.2M117.0 91.9L115.6 87.6M115.6 87.6L113.4 85.1M115.6 87.6L116.5 85.0M124.3 91.3L124.3 87.2M124.3 87.2L122.8 84.5M124.3 87.2L125.5 84.6M124.3 91.3L127.3 87.3M127.3 87.3L127.9 84.3M127.3 87.3L130.4 85.9M123.4 93.6L127.2 92.1M129.4 100.4L124.7 97.3M124.7 97.3L121.1 96.0M121.1 96.0L118.3 95.8M121.1 96.0L119.8 93.5M124.7 97.3L122.1 93.8M122.1 93.8L119.4 92.3M122.1 93.8L121.1 90.7M127.5 99.1L125.8 95.8M129.4 100.4L126.9 95.3M126.9 95.3L123.2 92.9M123.2 92.9L120.2 92.5M123.2 92.9L120.7 90.8M126.9 95.3L128.1 91.1M128.1 91.1L127.5 87.8M128.1 91.1L129.7 88.4M127.6 96.6L124.0 95.6M130.7 102.0L126.0 100.9M126.0 100.9L123.0 102.1M126.0 100.9L123.7 98.8M136.7 98.4L134.7 93.7M134.7 93.7L132.1 91.3M132.1 91.3L129.5 90.9M132.1 91.3L130.9 89.4M134.7 93.7L135.2 89.7M135.2 89.7L134.2 87.3M135.2 89.7L136.7 87.8M135.8 96.3L137.6 93.4M136.7 98.4L141.1 94.3M141.1 94.3L142.9 90.5M142.9 90.5L142.3 87.9M142.9 90.5L145.1 89.0M141.1 94.3L145.0 91.6M145.0 91.6L147.4 89.1M145.0 91.6L147.4 90.2M139.1 96.2L140.1 92.4M141.1 99.4L139.8 94.7M139.8 94.7L137.7 92.1M137.7 92.1L135.8 91.1M137.7 92.1L137.8 90.1M139.8 94.7L139.9 91.2M139.9 91.2L138.6 89.2M139.9 91.2L141.3 89.3M140.5 97.2L137.9 95.3M141.1 99.4L143.7 94.4M143.7 94.4L143.6 90.7M143.6 90.7L142.9 88.2M143.6 90.7L144.5 88.4M143.7 94.4L147.5 92.5M147.5 92.5L148.7 89.7M147.5 92.5L150.3 92.4M142.5 96.7L142.4 93.0M140.6 104.1L144.9 101.3M144.9 101.3L146.9 98.9M144.9 101.3L148.4 101.0M145.6 100.4L147.5 93.9M147.5 93.9L145.6 90.3M145.6 90.3L143.3 88.0M145.6 90.3L145.5 87.1M147.5 93.9L150.2 90.3M150.2 90.3L150.5 87.7M150.2 90.3L152.8 88.5M146.4 97.5L149.9 94.8M145.6 100.4L150.4 97.9M150.4 97.9L152.6 94.6M152.6 94.6L152.7 91.5M152.6 94.6L154.7 93.3M150.4 97.9L154.8 98.1M154.8 98.1L157.9 97.5M154.8 98.1L158.0 99.2M142.4 104.5L148.0 104.5M148.0 104.5L152.2 103.4M148.0 104.5L151.4 105.7M118.8 109.7L114.5 112.4M114.5 112.4L112.3 115.8M112.3 115.8L112.1 119.2M112.3 115.8L110.8 117.9M114.5 112.4L111.5 113.4M111.5 113.4L109.5 115.0M111.5 113.4L109.0 113.2M116.3 111.3L115.7 114.6M118.8 109.7L114.4 108.2M114.4 108.2L111.5 108.3M111.5 108.3L109.1 108.9M111.5 108.3L109.6 108.1M114.4 108.2L111.9 105.3M111.9 105.3L109.0 104.6M111.9 105.3L110.7 102.6M115.4 108.5L113.4 106.2M123.3 103.9L119.7 100.1M119.7 100.1L116.3 98.3M116.3 98.3L113.4 98.9M116.3 98.3L114.4 96.4M119.7 100.1L118.8 96.9M118.8 96.9L117.4 95.0M118.8 96.9L118.9 94.8M121.6 102.1L121.1 98.7M123.3 103.9L122.9 99.1M122.9 99.1L120.9 96.1M120.9 96.1L118.9 94.5M120.9 96.1L121.1 93.2M122.9 99.1L124.9 96.4M124.9 96.4L126.0 94.6M124.9 96.4L126.6 94.8M150.3 91.4L148.2 88.0M148.2 88.0L146.3 86.5M148.2 88.0L148.7 85.2M150.3 91.4L152.4 87.0M152.4 87.0L153.3 84.0M152.4 87.0L154.5 84.7M155.1 93.1L155.2 88.3M155.2 88.3L154.0 85.3M155.2 88.3L157.7 85.5M155.1 93.1L158.8 90.7M158.8 90.7L160.4 87.6M158.8 90.7L161.7 90.0M152.6 96.3L156.1 94.8M158.3 98.8L159.7 95.2M159.7 95.2L160.2 92.5M159.7 95.2L162.6 93.8M158.3 98.8L161.6 97.4M161.6 97.4L163.7 95.9M161.6 97.4L164.3 97.1M159.9 103.9L163.7 103.0M163.7 103.0L165.7 101.6M163.7 103.0L166.4 103.7M159.9 103.9L163.1 105.7M163.1 105.7L165.5 105.4M163.1 105.7L163.9 108.1M157.8 103.5L159.8 106.2M141.5 87.4L140.5 83.8M140.5 83.8L138.9 81.3M140.5 83.8L141.5 81.2M141.5 87.4L143.8 84.0M143.8 84.0L144.7 80.9M143.8 84.0L146.4 82.8M145.2 88.1L144.7 83.5M144.7 83.5L143.6 81.0M144.7 83.5L145.7 80.0M145.2 88.1L148.5 86.4M148.5 86.4L150.2 83.8M148.5 86.4L151.5 85.6M143.7 90.7L143.4 86.9M141.8 99.0L146.7 95.2M146.7 95.2L149.2 91.4M146.7 95.2L150.7 94.7M143.2 88.4L141.2 84.4M141.2 84.4L138.7 81.8M141.2 84.4L140.0 81.4M143.2 88.4L143.3 84.0M143.3 84.0L141.8 81.6M143.3 84.0L143.9 81.0M149.0 90.5L150.8 87.2M150.8 87.2L150.4 84.6M150.8 87.2L153.2 85.8M149.0 90.5L153.2 88.0M153.2 88.0L154.9 85.6M153.2 88.0L156.5 87.9M115.5 100.6L110.7 100.5M110.7 100.5L107.2 100.7M110.7 100.5L107.3 99.1M115.5 100.6L111.1 96.9M111.1 96.9L107.4 96.7M111.1 96.9L108.5 94.1M120.6 102.0L118.4 97.5M118.6 97.2L113.7 96.1M113.7 96.1L110.0 96.2M113.7 96.1L111.1 93.3M118.6 97.2L117.3 91.9M117.3 91.9L115.4 89.2M117.3 91.9L118.2 88.0M120.0 99.1L121.3 94.8M126.0 104.0L124.3 98.2M124.3 98.2L121.3 94.3M124.3 98.2L126.0 93.9M124.6 94.0L121.6 92.4M121.6 92.4L119.4 92.9M121.6 92.4L120.4 90.8M124.6 94.0L123.4 90.3M123.4 90.3L121.8 87.8M123.4 90.3L123.6 87.4M126.2 95.6L122.7 94.9M127.4 92.3L125.9 88.2M125.9 88.2L123.8 85.7M125.9 88.2L125.9 84.8M127.4 92.3L127.4 88.5M127.4 88.5L126.3 86.2M127.4 88.5L128.7 86.5M128.0 95.4L130.5 92.7M133.0 100.7L129.5 95.8M129.5 95.8L126.1 93.9M129.5 95.8L128.5 91.5M133.0 100.7L136.2 96.7M136.2 96.7L136.0 92.8M136.2 96.7L139.6 94.9M143.8 87.7L140.1 84.4M140.1 84.4L136.6 84.5M140.1 84.4L138.8 81.5M143.8 87.7L142.5 82.6M142.5 82.6L140.3 79.6M142.5 82.6L143.2 79.1M144.8 88.9L144.9 84.6M149.4 86.6L148.3 82.6M148.3 82.6L145.9 80.3M148.3 82.6L148.5 79.9M149.4 86.6L151.4 82.2M151.4 82.2L151.8 79.2M151.4 82.2L154.1 80.9M148.9 88.8L152.2 86.3M148.1 97.1L151.8 93.2M151.8 93.2L152.6 89.5M151.8 93.2L155.1 91.3M150.5 88.6L149.4 84.7M149.4 84.7L147.7 82.0M149.4 84.7L149.6 82.1M150.5 88.6L152.3 85.1M152.3 85.1L151.6 82.5M152.3 85.1L155.2 84.1M150.6 90.5L147.9 88.1M153.2 89.6L152.8 86.3M152.8 86.3L151.5 84.0M152.8 86.3L153.2 83.8M153.2 89.6L156.2 87.4M156.2 87.4L157.4 84.8M156.2 87.4L159.1 87.2M152.4 91.1L151.3 87.9M150.0 95.9L148.2 91.4M148.2 91.4L145.7 89.0M148.2 91.4L148.9 87.7M143.9 98.4L140.1 94.0M140.1 94.0L136.9 91.5M140.1 94.0L138.9 89.5M143.9 98.4L142.2 93.9M142.2 93.9L139.2 91.7M142.2 93.9L142.6 90.4M126.7 96.0L123.3 95.7M123.3 95.7L120.9 96.9M123.3 95.7L121.3 94.5M126.7 96.0L123.0 94.3M123.0 94.3L120.0 94.3M123.0 94.3L121.9 91.8M128.1 96.5L127.3 93.2M131.1 92.0L130.2 87.8M130.2 87.8L129.0 85.2M130.2 87.8L131.1 84.4M131.1 92.0L132.6 88.5M132.6 88.5L133.1 86.0M132.6 88.5L134.3 86.6M131.4 95.6L128.1 93.6M135.1 101.0L130.0 102.5M130.0 102.5L127.5 104.9M130.0 102.5L126.3 100.8M126.6 93.9L122.1 95.3M122.1 95.3L120.3 97.5M122.1 95.3L118.7 95.8M126.6 93.9L122.5 91.5M122.5 91.5L119.5 90.7M122.5 91.5L120.1 88.9M128.5 94.6L124.8 96.9M132.7 89.5L131.4 84.7M131.4 84.7L129.1 81.8M131.4 84.7L131.6 81.5M132.7 89.5L135.4 85.8M135.4 85.8L135.2 83.0M135.4 85.8L138.1 83.7M132.8 91.9L130.1 88.5M131.6 104.7L126.3 106.5M126.3 106.5L123.4 109.8M126.3 106.5L122.0 105.8M131.6 104.7L126.7 100.8M126.7 100.8L122.0 99.7M126.7 100.8L124.8 97.1M133.5 104.9L129.5 108.1M132.5 93.4L129.1 94.3M129.1 94.3L127.2 95.9M129.1 94.3L127.0 93.8M132.5 93.4L130.5 91.0M130.5 91.0L128.8 89.2M130.5 91.0L129.4 89.1M136.2 90.7L134.1 88.2M134.1 88.2L132.2 87.3M134.1 88.2L133.7 85.8M136.2 90.7L136.4 87.3M136.4 87.3L135.6 84.7M136.4 87.3L137.3 85.3M137.6 96.7L133.2 94.6M133.2 94.6L129.7 93.9M133.2 94.6L131.6 91.3M139.5 87.7L136.6 84.2M136.6 84.2L133.2 83.4M136.6 84.2L135.7 80.9M139.5 87.7L141.1 83.3M141.1 83.3L141.2 79.6M141.1 83.3L143.5 81.3M144.4 88.2L144.6 84.5M144.6 84.5L142.9 82.5M144.6 84.5L145.0 82.0M144.4 88.2L146.8 84.7M146.8 84.7L147.2 81.9M146.8 84.7L149.1 82.7M141.7 97.4L145.4 93.7M145.4 93.7L147.2 90.8M145.4 93.7L148.7 92.5M135.8 100.0L130.7 98.6M130.7 98.6L127.1 98.3M130.7 98.6L128.0 96.8M135.8 100.0L133.5 95.5M133.5 95.5L131.6 92.5M133.5 95.5L134.3 92.1M152.6 91.5L149.2 89.0M149.2 89.0L146.4 87.7M149.2 89.0L148.0 86.4M152.6 91.5L151.8 88.4M151.8 88.4L150.0 86.7M151.8 88.4L152.7 86.5M153.9 94.5L150.8 92.8M158.2 90.3L156.9 84.8M156.9 84.8L154.8 82.0M156.9 84.8L156.7 80.3M158.2 90.3L161.0 86.5M161.0 86.5L161.4 83.5M161.0 86.5L163.8 84.1M156.4 93.6L160.8 92.2M159.4 93.1L158.9 89.7M158.9 89.7L157.0 88.0M158.9 89.7L159.2 87.6M159.4 93.1L160.5 89.8M160.5 89.8L159.6 87.3M160.5 89.8L162.4 87.9M164.3 96.3L167.5 93.4M167.5 93.4L168.6 90.9M167.5 93.4L170.9 92.7M164.3 96.3L168.7 94.9M168.7 94.9L170.4 92.0M168.7 94.9L171.7 94.8M157.7 99.9L163.6 100.2M163.6 100.2L167.7 97.8M163.6 100.2L167.1 101.4M152.6 92.8L149.1 90.5M149.1 90.5L146.0 89.5M149.1 90.5L147.3 88.3M152.6 92.8L151.5 88.9M151.5 88.9L150.2 86.7M151.5 88.9L151.8 85.6M158.9 94.0L158.8 90.6M158.8 90.6L157.3 88.5M158.8 90.6L159.8 88.2M158.9 94.0L162.0 93.1M162.0 93.1L164.2 91.9M162.0 93.1L164.3 94.1M156.3 96.6L156.3 93.1M159.6 96.0L158.8 93.0M158.8 93.0L157.7 91.0M158.8 93.0L158.7 90.9M159.6 96.0L161.0 92.4M161.0 92.4L160.7 89.4M161.0 92.4L163.2 91.5M159.5 98.5L157.9 95.9M163.9 97.5L165.8 94.6M165.8 94.6L166.2 91.8M165.8 94.6L167.2 92.8M163.9 97.5L167.4 95.7M167.4 95.7L170.1 93.9M167.4 95.7L170.5 94.9M148.4 91.9L145.0 88.6M145.0 88.6L141.4 88.2M145.0 88.6L143.7 85.7M148.4 91.9L148.8 87.9M148.8 87.9L148.0 85.1M148.8 87.9L150.6 86.0M151.8 92.0L150.3 89.0M150.3 89.0L149.1 87.4M150.3 89.0L150.2 86.7M151.8 92.0L153.8 89.3M153.8 89.3L154.3 86.8M153.8 89.3L155.6 88.1M151.3 95.1L148.8 92.6M151.6 102.2L148.0 98.7M148.0 98.7L145.0 97.9M148.0 98.7L146.4 95.4M158.0 93.1L157.0 88.9M157.0 88.9L155.6 86.3M157.0 88.9L156.9 86.1M158.0 93.1L160.3 89.9M160.3 89.9L161.3 86.9M160.3 89.9L163.2 88.6M157.4 95.0L156.3 91.4M161.2 94.8L162.4 90.6M162.4 90.6L161.9 87.5M162.4 90.6L164.5 88.5M161.2 94.8L165.1 93.2M165.1 93.2L166.8 90.9M165.1 93.2L168.4 93.1M148.9 101.2L144.3 98.0M144.3 98.0L141.0 96.3M144.3 98.0L142.2 95.3M148.9 101.2L148.9 96.6M148.9 96.6L147.1 93.9M148.9 96.6L149.7 93.7M152.1 90.9L149.3 88.8M149.3 88.8L146.9 88.5M149.3 88.8L147.6 87.3M152.1 90.9L152.0 86.4M152.0 86.4L150.4 83.7M152.0 86.4L153.5 83.6M153.1 93.6L154.9 90.5M156.6 91.5L157.5 88.5M157.5 88.5L157.2 86.4M157.5 88.5L159.1 86.6M156.6 91.5L159.7 89.5M159.7 89.5L161.2 87.8M159.7 89.5L162.6 88.9M155.1 88.3L150.4 84.5M150.4 84.5L146.7 82.4M150.4 84.5L149.5 80.3M155.1 88.3L156.7 82.6M156.7 82.6L156.8 78.6M156.7 82.6L158.8 79.6M163.7 90.7L164.3 86.4M164.3 86.4L163.2 83.1M164.3 86.4L165.3 83.2M163.7 90.7L168.4 90.3M168.4 90.3L171.7 88.5M168.4 90.3L171.2 92.1M151.0 94.4L146.3 93.4M146.3 93.4L143.1 94.2M146.3 93.4L143.2 91.9M151.0 94.4L148.3 91.9M148.3 91.9L145.4 91.5M148.3 91.9L147.1 89.7M157.9 92.3L157.3 88.1M157.3 88.1L156.2 85.5M157.3 88.1L158.7 85.3M157.9 92.3L160.0 89.4M160.0 89.4L160.5 86.5M160.0 89.4L162.2 88.8M156.8 95.4L154.7 92.3M157.1 101.1L152.6 99.7M152.6 99.7L149.7 100.5M152.6 99.7L150.2 98.1M163.4 91.7L161.8 87.3M161.8 87.3L159.8 85.3M161.8 87.3L162.0 83.8M163.4 91.7L165.3 87.4M165.3 87.4L166.1 84.2M165.3 87.4L167.9 86.2M167.3 96.0L169.8 93.7M169.8 93.7L170.8 91.3M169.8 93.7L171.9 93.0M167.3 96.0L171.3 95.8M171.3 95.8L173.7 93.7M171.3 95.8L173.8 96.1M137.0 98.0L133.5 99.7M133.5 99.7L132.6 102.2M133.5 99.7L130.8 99.6M137.0 98.0L132.5 97.1M132.5 97.1L129.7 97.4M132.5 97.1L130.2 95.0M139.4 92.4L136.2 87.7M136.2 87.7L133.1 85.5M136.2 87.7L136.0 83.5M139.4 92.4L139.9 86.5M139.9 86.5L138.8 82.8M139.9 86.5L141.8 82.2M141.7 96.5L137.6 94.1M148.9 92.0L146.9 88.3M146.9 88.3L144.6 87.2M146.9 88.3L146.3 85.4M148.9 92.0L149.9 88.4M149.9 88.4L149.0 85.6M149.9 88.4L151.8 86.8M152.4 91.6L152.1 87.4M152.1 87.4L151.2 84.2M152.1 87.4L154.0 84.7M152.4 91.6L155.8 88.7M155.8 88.7L157.6 86.1M155.8 88.7L159.1 88.1M151.9 92.8L150.3 89.2M154.5 100.5L153.7 95.2M153.7 95.2L151.3 91.7M153.7 95.2L155.9 91.4M154.5 100.5L159.1 96.6M159.1 96.6L161.6 92.6M159.1 96.6L162.9 95.0M153.8 102.3L158.4 100.1M164.6 90.4L161.6 86.7M161.6 86.7L158.5 85.7M161.6 86.7L160.0 84.0M164.6 90.4L164.1 85.7M164.1 85.7L162.2 82.8M164.1 85.7L165.0 83.0M166.0 94.4L161.9 93.3M170.3 91.2L172.5 86.6M172.5 86.6L172.5 82.6M172.5 86.6L174.7 84.1M170.3 91.2L173.7 88.6M173.7 88.6L174.8 85.8M173.7 88.6L176.6 87.4M169.4 92.4L168.7 88.3M166.2 100.7L171.3 97.7M171.3 97.7L174.5 95.2M171.3 97.7L174.8 96.5M174.1 94.5L174.3 89.7M174.3 89.7L173.1 86.7M174.3 89.7L175.7 86.2M174.1 94.5L177.6 93.0M177.6 93.0L179.4 91.3M177.6 93.0L180.0 92.3M172.8 97.0L176.7 96.1M176.3 99.1L179.2 96.9M179.2 96.9L180.7 94.8M179.2 96.9L181.4 96.6M176.3 99.1L179.5 99.5M179.5 99.5L181.8 99.3M179.5 99.5L181.3 100.4M169.5 108.5L171.8 104.3M171.8 104.3L171.9 101.3M171.8 104.3L174.9 102.4M169.5 108.5L174.3 109.2M174.3 109.2L177.8 108.3M174.3 109.2L177.4 111.1M166.5 109.5L170.4 112.4M153.4 90.4L149.2 88.4M149.2 88.4L146.5 89.0M149.2 88.4L146.9 85.6M153.4 90.4L153.3 86.3M153.3 86.3L152.7 83.7M153.3 86.3L154.7 83.5M155.4 92.9L151.3 91.7M159.4 89.8L158.0 85.2M158.0 85.2L156.5 82.5M158.0 85.2L157.5 81.4M159.4 89.8L162.4 87.4M162.4 87.4L163.8 85.5M162.4 87.4L165.0 86.5M159.4 92.1L157.2 89.1M157.2 89.1L155.3 87.1M157.2 89.1L156.1 86.7M159.4 92.1L159.6 88.0M159.6 88.0L159.1 85.2M159.6 88.0L161.4 85.4M160.2 94.9L161.9 92.1M163.3 92.7L164.5 89.4M164.5 89.4L163.9 86.5M164.5 89.4L165.9 87.6M163.3 92.7L166.5 91.0M166.5 91.0L168.1 89.5M166.5 91.0L169.3 90.7M162.5 94.1L165.3 92.7M139.5 97.3L134.2 98.9M134.2 98.9L131.2 100.7M134.2 98.9L130.4 97.8M139.5 97.3L134.6 94.7M134.6 94.7L130.2 93.9M134.6 94.7L132.1 91.8M143.1 94.2L139.2 92.1M139.2 92.1L136.2 91.9M139.2 92.1L136.7 90.0M143.1 94.2L140.5 89.8M140.5 89.8L136.9 88.0M140.5 89.8L140.6 86.7M146.7 95.0L143.3 94.5M143.3 94.5L141.5 95.4M143.3 94.5L141.5 92.5M146.7 95.0L144.9 92.1M144.9 92.1L143.0 91.0M144.9 92.1L145.2 89.3M152.1 92.8L151.4 89.0M151.4 89.0L149.3 87.2M151.4 89.0L151.6 85.9M152.1 92.8L153.6 88.8M153.6 88.8L153.2 86.2M153.6 88.8L156.0 86.7M151.8 94.1L155.1 92.4M151.5 100.7L147.4 97.6M147.4 97.6L144.3 96.8M147.4 97.6L145.5 94.4M157.5 103.3L156.3 97.4M156.3 97.4L152.7 94.3M156.3 97.4L158.6 94.0M157.5 103.3L161.1 99.9M161.1 99.9L161.4 96.7M161.1 99.9L164.3 98.7M153.4 102.5L149.9 103.0M149.9 103.0L147.8 103.8M149.9 103.0L147.2 103.0M153.4 102.5L151.0 100.1M151.0 100.1L148.9 98.9M151.0 100.1L150.8 97.6M155.6 100.4L153.3 98.4M153.3 98.4L151.5 97.8M153.3 98.4L152.1 96.6M155.6 100.4L156.4 97.3M156.4 97.3L155.8 95.0M156.4 97.3L157.5 95.1M159.2 108.4L160.8 104.4M160.8 104.4L161.0 100.9M160.8 104.4L163.5 102.2M161.2 99.3L160.2 96.2M160.2 96.2L158.2 94.8M160.2 96.2L160.3 93.9M161.2 99.3L162.4 96.8M162.4 96.8L162.1 94.8M162.4 96.8L163.4 95.4M164.6 100.4L165.4 97.1M165.4 97.1L165.4 94.8M165.4 97.1L166.8 95.4M164.6 100.4L167.1 99.0M167.1 99.0L168.5 97.7M167.1 99.0L168.9 98.9M163.2 106.7L162.7 101.5M162.7 101.5L161.2 98.1M162.7 101.5L164.0 97.9M163.2 106.7L166.8 104.1M166.8 104.1L168.6 101.7M166.8 104.1L170.3 103.0M145.9 105.7L142.1 104.7M142.1 104.7L139.4 105.1M142.1 104.7L139.9 102.4M145.9 105.7L143.0 102.8M143.0 102.8L140.0 101.8M143.0 102.8L142.6 99.7M148.3 103.3L146.4 100.1M146.4 100.1L144.4 98.2M146.4 100.1L145.8 97.7M148.3 103.3L148.5 100.0M148.5 100.0L147.8 97.6M148.5 100.0L149.5 98.1M149.1 105.0L150.0 101.7M153.6 110.2L148.8 110.4M148.8 110.4L145.8 112.0M148.8 110.4L146.3 108.4M150.4 102.7L147.1 101.3M147.1 101.3L144.6 100.7M147.1 101.3L145.6 99.1M150.4 102.7L148.4 100.3M148.4 100.3L146.4 99.9M148.4 100.3L147.3 98.0M152.8 104.1L149.7 104.4M154.7 100.1L153.6 97.1M153.6 97.1L152.3 95.2M153.6 97.1L153.7 95.1M154.7 100.1L156.0 97.0M156.0 97.0L155.9 94.6M156.0 97.0L158.3 95.6M155.7 109.4L158.4 105.5M158.4 105.5L160.0 102.0M158.4 105.5L161.2 104.3M152.0 112.8L148.0 114.3M148.0 114.3L146.0 116.1M148.0 114.3L145.2 113.4M152.0 112.8L148.0 109.0M148.0 109.0L143.9 107.9M148.0 109.0L146.7 105.5M154.3 113.6L151.6 110.0M140.5 115.4L138.6 118.6M138.6 118.6L138.9 121.5M138.6 118.6L136.2 119.2M140.5 115.4L136.0 113.9M136.0 113.9L132.8 114.5M136.0 113.9L134.5 111.1M143.7 114.6L140.1 112.8M141.4 112.2L137.2 112.1M137.2 112.1L134.4 113.0M137.2 112.1L134.6 111.2M141.4 112.2L138.2 109.5M138.2 109.5L135.0 108.6M138.2 109.5L136.2 107.1M144.6 113.3L143.8 109.8M146.6 106.9L143.0 106.7M143.0 106.7L140.4 107.8M143.0 106.7L140.3 106.0M146.6 106.9L145.3 104.1M145.3 104.1L143.6 102.4M145.3 104.1L144.8 101.7M148.9 104.5L147.3 101.0M147.3 101.0L145.4 99.6M147.3 101.0L147.7 98.3M148.9 104.5L150.7 101.4M150.7 101.4L151.1 98.5M150.7 101.4L152.9 100.0M149.8 107.2L151.5 104.5M151.8 111.2L151.6 106.9M151.6 106.9L150.5 104.1M151.6 106.9L153.1 103.8M181.8 102.2L180.7 96.9M180.7 96.9L178.3 94.4M178.3 94.4L176.5 93.3M178.3 94.4L177.2 92.3M180.7 96.9L181.5 93.5M181.5 93.5L181.2 91.2M181.5 93.5L182.8 91.2M180.9 98.1L178.7 95.5M181.8 102.2L185.1 98.2M185.1 98.2L185.7 94.3M185.7 94.3L185.3 91.5M185.7 94.3L187.2 92.3M185.1 98.2L188.6 96.1M188.6 96.1L189.8 93.4M188.6 96.1L191.9 95.5M179.5 105.8L184.2 105.1M184.2 105.1L187.1 103.0M184.2 105.1L187.6 106.4M185.2 107.7L189.2 104.4M189.2 104.4L191.2 101.7M191.2 101.7L191.6 99.1M191.2 101.7L192.9 100.4M189.2 104.4L193.2 103.4M193.2 103.4L195.0 101.2M193.2 103.4L196.2 105.0M187.8 105.5L191.1 105.0M185.2 107.7L189.5 110.1M189.5 110.1L192.5 111.1M192.5 111.1L194.6 111.1M192.5 111.1L194.8 112.2M189.5 110.1L191.6 112.9M191.6 112.9L193.9 113.7M191.6 112.9L192.0 115.1M187.8 109.2L191.0 109.0M181.5 108.1L185.5 110.8M185.5 110.8L189.1 111.3M185.5 110.8L187.6 113.2M174.7 97.2L172.9 92.3M172.9 92.3L170.7 90.0M170.7 90.0L168.6 89.4M170.7 90.0L169.9 87.7M172.9 92.3L173.6 88.8M173.6 88.8L172.6 86.2M173.6 88.8L175.4 86.7M173.6 94.3L170.7 92.6M174.7 97.2L179.3 93.7M179.3 93.7L180.8 90.0M180.8 90.0L180.6 86.9M180.8 90.0L182.5 88.3M179.3 93.7L183.3 92.4M183.3 92.4L185.6 91.0M183.3 92.4L185.9 92.7M176.6 95.8L180.3 96.2M179.8 98.7L181.9 92.4M181.9 92.4L182.2 87.1M182.2 87.1L181.2 83.2M182.2 87.1L183.7 83.9M181.9 92.4L184.9 89.1M184.9 89.1L185.6 85.7M184.9 89.1L188.0 87.9M180.9 95.4L180.1 91.2M179.8 98.7L184.6 94.8M184.6 94.8L187.2 90.6M187.2 90.6L188.2 87.6M187.2 90.6L189.8 88.3M184.6 94.8L189.2 94.3M189.2 94.3L192.3 93.1M189.2 94.3L191.9 95.3M182.2 96.7L182.8 92.7M175.5 102.9L177.0 97.0M177.0 97.0L175.9 93.5M177.0 97.0L179.7 93.6M178.6 106.5L182.3 103.3M182.3 103.3L183.2 100.4M182.3 103.3L185.2 102.0M178.6 106.5L183.9 105.8M183.9 105.8L187.3 104.2M183.9 105.8L188.1 106.5M155.8 103.3L150.6 103.3M150.6 103.3L146.8 104.7M146.8 104.7L144.7 107.2M146.8 104.7L144.1 104.4M150.6 103.3L147.4 102.5M147.4 102.5L144.9 103.0M147.4 102.5L145.3 101.3M154.1 103.3L151.5 101.2M155.8 103.3L153.5 98.0M153.5 98.0L150.4 95.3M150.4 95.3L147.5 95.6M150.4 95.3L149.0 92.9M153.5 98.0L154.0 94.3M154.0 94.3L154.1 91.8M154.0 94.3L155.6 92.5M154.9 101.2L151.4 99.7M159.8 105.7L157.7 101.5M157.7 101.5L155.2 99.5M157.7 101.5L157.4 97.7M158.9 99.6L155.2 94.8M155.2 94.8L150.8 93.7M150.8 93.7L147.9 94.9M150.8 93.7L147.9 91.7M155.2 94.8L154.2 90.6M154.2 90.6L152.0 88.1M154.2 90.6L154.6 88.0M157.2 97.4L153.3 97.0M158.9 99.6L158.8 94.0M158.8 94.0L158.3 90.4M158.3 90.4L156.2 88.4M158.3 90.4L159.4 88.4M158.8 94.0L159.9 90.3M159.9 90.3L158.6 87.4M159.9 90.3L161.7 87.9M159.6 101.3L161.5 96.5M161.5 96.5L161.2 93.3M161.5 96.5L163.7 94.1M165.4 101.7L163.5 96.3M163.5 96.3L160.7 92.9M163.5 96.3L164.0 92.6M165.4 101.7L169.1 97.8M169.1 97.8L169.8 94.5M169.1 97.8L172.1 95.9M164.4 105.4L168.2 102.6M187.2 109.4L189.5 105.3M189.5 105.3L190.9 101.9M190.9 101.9L191.4 98.9M190.9 101.9L193.0 99.8M189.5 105.3L192.5 103.2M192.5 103.2L193.1 100.5M192.5 103.2L195.3 102.6M187.2 109.4L192.9 108.1M192.9 108.1L195.9 105.9M195.9 105.9L197.1 103.2M195.9 105.9L198.8 105.2M192.9 108.1L197.1 108.6M197.1 108.6L200.0 108.2M197.1 108.6L199.5 109.5M190.6 108.6L192.1 105.1M185.6 111.3L186.1 106.6M186.1 106.6L185.7 103.6M186.1 106.6L187.6 103.4M191.0 115.1L196.6 113.5M196.6 113.5L200.2 112.2M200.2 112.2L202.0 110.3M200.2 112.2L202.8 112.9M196.6 113.5L201.4 114.2M201.4 114.2L204.6 113.3M201.4 114.2L204.0 116.2M194.4 114.1L196.1 110.7M191.0 115.1L196.0 117.3M196.0 117.3L200.3 117.3M200.3 117.3L203.3 115.9M200.3 117.3L203.1 118.1M196.0 117.3L198.8 119.5M198.8 119.5L201.4 120.6M198.8 119.5L199.1 122.0M187.2 115.0L191.1 111.2M191.1 111.2L193.5 107.8M191.1 111.2L195.5 110.6M180.0 111.7L180.3 106.7M180.3 106.7L178.5 103.2M180.3 106.7L181.1 102.8M180.0 111.7L183.5 108.9M183.5 108.9L185.7 106.3M183.5 108.9L186.1 107.7M174.0 105.4L170.6 101.8M170.6 101.8L167.3 100.2M167.3 100.2L165.1 100.7M167.3 100.2L165.4 98.4M170.6 101.8L168.8 98.1M168.8 98.1L167.3 95.8M168.8 98.1L169.2 95.5M172.3 103.6L169.1 103.6M174.0 105.4L173.6 101.2M173.6 101.2L173.3 98.5M173.3 98.5L172.0 96.9M173.3 98.5L174.0 96.9M173.6 101.2L173.8 98.0M173.8 98.0L173.2 96.0M173.8 98.0L175.2 96.0M175.4 108.6L176.5 104.6M176.5 104.6L176.4 102.0M176.5 104.6L179.1 102.4M180.7 104.4L181.1 99.4M181.1 99.4L180.9 96.1M180.9 96.1L179.2 94.2M180.9 96.1L182.0 94.1M181.1 99.4L183.7 96.3M183.7 96.3L184.1 93.8M183.7 96.3L185.8 94.9M180.7 104.4L185.9 101.9M185.9 101.9L187.8 97.5M187.8 97.5L187.6 94.3M187.8 97.5L190.5 95.3M185.9 101.9L190.2 102.5M190.2 102.5L193.7 102.0M190.2 102.5L192.6 103.7M179.0 107.1L178.3 102.0M178.3 102.0L176.3 99.2M178.3 102.0L179.9 98.9M179.9 103.7L179.7 97.1M179.7 97.1L178.0 92.4M178.0 92.4L175.5 90.4M178.0 92.4L179.2 89.0M179.7 97.1L181.2 92.5M181.2 92.5L180.7 89.5M181.2 92.5L182.7 89.6M179.9 103.7L182.7 98.8M182.7 98.8L183.5 95.6M183.5 95.6L182.7 93.3M183.5 95.6L184.4 93.2M182.7 98.8L186.8 97.5M186.8 97.5L189.5 95.4M186.8 97.5L189.9 98.5M181.2 101.5L180.7 97.9M178.8 108.2L175.8 103.8M175.8 103.8L172.3 102.0M175.8 103.8L175.3 99.8M182.4 107.2L184.6 102.7M184.6 102.7L185.6 99.7M185.6 99.7L184.9 97.4M185.6 99.7L186.8 97.8M184.6 102.7L187.5 100.2M187.5 100.2L188.5 98.1M187.5 100.2L190.3 99.5M183.9 104.1L186.9 102.9M182.4 107.2L186.4 104.6M186.4 104.6L187.2 101.2M187.2 101.2L186.9 98.9M187.2 101.2L188.1 99.3M186.4 104.6L190.3 104.2M190.3 104.2L192.7 103.1M190.3 104.2L193.1 105.2M185.0 105.5L187.9 106.3M179.3 110.2L183.4 109.5M183.4 109.5L186.2 108.6M183.4 109.5L186.2 110.8M194.6 99.8L194.0 95.8M194.0 95.8L192.7 93.0M194.0 95.8L194.8 92.8M194.6 99.8L197.5 96.6M197.5 96.6L197.9 93.9M197.5 96.6L200.7 96.3M198.2 102.3L201.8 98.9M201.8 98.9L202.9 96.1M201.8 98.9L204.8 97.9M198.2 102.3L202.2 101.5M202.2 101.5L204.6 99.6M202.2 101.5L205.2 101.4M194.9 103.7L198.8 104.3M189.8 108.2L195.1 108.2M195.1 108.2L198.6 106.2M195.1 108.2L198.1 109.5M197.9 105.6L199.0 102.2M199.0 102.2L198.9 99.9M199.0 102.2L201.0 100.3M197.9 105.6L201.5 103.9M201.5 103.9L203.0 101.7M201.5 103.9L204.1 103.7M195.5 108.1L199.0 108.4M198.3 110.6L201.1 109.5M201.1 109.5L202.2 107.8M201.1 109.5L203.5 109.4M198.3 110.6L200.2 112.9M200.2 112.9L202.4 113.4M200.2 112.9L200.6 115.3M197.4 110.4L199.3 112.4M191.9 110.0L194.0 106.0M194.0 106.0L193.4 103.4M194.0 106.0L196.4 104.4M184.3 109.3L184.6 104.3M184.6 104.3L183.1 100.7M184.6 104.3L186.1 100.5M184.3 109.3L187.8 106.2M187.8 106.2L188.6 103.2M187.8 106.2L191.2 105.5M184.1 95.6L182.7 92.2M182.7 92.2L180.7 90.7M182.7 92.2L182.5 89.9M184.1 95.6L184.7 91.4M184.7 91.4L184.0 88.6M184.7 91.4L186.5 88.6M184.6 97.1L181.3 96.0M189.0 95.2L189.5 90.4M189.5 90.4L188.1 87.0M189.5 90.4L191.8 87.5M189.0 95.2L192.5 92.3M192.5 92.3L193.5 89.6M192.5 92.3L195.4 90.5M185.3 105.5L183.3 100.6M183.3 100.6L181.9 97.5M183.3 100.6L182.5 96.7M191.7 99.4L191.2 96.5M191.2 96.5L189.5 94.9M191.2 96.5L191.7 94.6M191.7 99.4L194.1 96.5M194.1 96.5L195.1 93.9M194.1 96.5L196.7 95.1M196.0 102.3L199.1 99.8M199.1 99.8L199.8 97.3M199.1 99.8L201.4 99.4M196.0 102.3L200.6 102.9M200.6 102.9L203.8 102.2M200.6 102.9L204.0 104.6M194.1 102.9L196.3 99.8M189.5 111.8L193.5 110.4M193.5 110.4L195.8 108.9M193.5 110.4L196.1 111.0M189.5 111.8L194.3 113.8M194.3 113.8L198.1 114.4M194.3 113.8L196.9 115.5M160.9 110.0L157.7 110.2M157.7 110.2L155.9 111.3M157.7 110.2L155.4 109.7M160.9 110.0L158.6 108.5M158.6 108.5L156.6 108.8M158.6 108.5L157.6 107.2M161.0 107.7L157.9 107.7M157.9 107.7L156.3 108.7M157.9 107.7L155.8 106.4M161.0 107.7L159.7 104.7M159.7 104.7L158.4 102.8M159.7 104.7L160.3 102.1M161.9 108.3L158.8 108.7M168.9 111.4L167.4 107.3M167.4 107.3L164.7 105.4M167.4 107.3L168.4 104.8M162.4 104.7L159.3 104.0M159.3 104.0L157.1 104.6M159.3 104.0L157.2 102.7M162.4 104.7L159.9 102.1M159.9 102.1L157.8 101.5M159.9 102.1L159.2 99.5M167.0 101.0L165.9 97.5M165.9 97.5L163.5 96.0M165.9 97.5L165.9 95.2M167.0 101.0L167.4 97.8M167.4 97.8L167.1 95.3M167.4 97.8L168.8 95.7M167.1 104.2L169.4 101.9M168.4 108.0L168.6 103.2M168.6 103.2L166.8 99.8M168.6 103.2L170.6 100.4M175.0 102.2L171.3 101.9M171.3 101.9L168.7 103.4M171.3 101.9L169.5 100.4M175.0 102.2L174.1 98.9M174.1 98.9L172.4 97.4M174.1 98.9L174.8 96.5M176.6 103.5L175.5 100.0M178.4 101.0L175.4 98.8M175.4 98.8L172.5 98.1M175.4 98.8L174.4 96.7M178.4 101.0L179.2 97.7M179.2 97.7L179.3 95.1M179.2 97.7L181.2 96.0M178.7 102.3L180.7 99.9M181.0 108.5L176.0 107.6M176.0 107.6L172.1 109.0M176.0 107.6L173.3 105.1M184.1 99.4L181.9 96.7M181.9 96.7L179.9 95.9M181.9 96.7L181.0 94.6M184.1 99.4L184.6 95.0M184.6 95.0L183.4 91.8M184.6 95.0L186.2 92.5M184.6 101.5L187.1 98.9M188.5 100.8L189.4 96.7M189.4 96.7L189.1 93.8M189.4 96.7L190.7 94.5M188.5 100.8L191.5 98.4M191.5 98.4L192.7 95.8M191.5 98.4L194.2 98.7M187.1 102.5L190.5 102.0M184.8 106.6L181.4 102.8M181.4 102.8L178.5 101.5M181.4 102.8L180.8 99.1M187.6 111.3L187.8 106.2M187.8 106.2L186.4 102.6M187.8 106.2L190.9 103.4M187.6 111.3L191.3 109.0M191.3 109.0L193.3 107.3M191.3 109.0L194.0 108.8M182.1 103.0L178.4 102.0M178.4 102.0L175.5 101.9M178.4 102.0L175.9 100.0M182.1 103.0L180.7 100.0M180.7 100.0L178.6 98.7M180.7 100.0L180.5 97.9M185.7 100.8L184.1 97.8M184.1 97.8L181.8 96.7M184.1 97.8L183.6 95.6M185.7 100.8L188.0 97.6M188.0 97.6L188.5 94.9M188.0 97.6L190.2 96.4M185.9 104.3L183.7 101.7M186.6 108.8L182.9 106.1M182.9 106.1L180.3 104.7M182.9 106.1L181.7 102.9M192.8 103.6L192.8 100.3M192.8 100.3L192.2 98.5M192.8 100.3L193.4 98.4M192.8 103.6L195.0 102.4M195.0 102.4L195.9 101.2M195.0 102.4L196.8 102.1M192.2 105.0L190.8 102.8M196.1 106.0L199.0 103.2M199.0 103.2L200.9 100.9M199.0 103.2L201.7 103.1M196.1 106.0L199.5 107.3M199.5 107.3L202.0 107.9M199.5 107.3L201.5 108.9M194.6 106.4L196.3 103.6M182.1 113.3L178.4 111.8M178.4 111.8L175.6 112.0M178.4 111.8L177.2 108.7M182.1 113.3L181.1 108.3M181.1 108.3L180.2 104.4M181.1 108.3L180.9 104.2M167.9 116.1L165.4 118.4M165.4 118.4L164.3 120.3M165.4 118.4L163.2 119.6M167.9 116.1L164.5 115.8M164.5 115.8L162.1 117.2M164.5 115.8L162.4 115.1M168.7 111.5L165.4 110.9M165.4 110.9L163.2 111.6M165.4 110.9L163.2 109.8M168.7 111.5L167.0 108.9M167.0 108.9L165.4 107.6M167.0 108.9L167.5 106.7M170.5 113.0L167.8 112.6M174.9 114.6L171.8 117.3M171.8 117.3L170.1 119.7M171.8 117.3L169.3 117.2M174.5 104.1L171.9 101.6M171.9 101.6L169.7 101.2M171.9 101.6L170.5 99.6M174.5 104.1L173.6 101.0M173.6 101.0L172.2 99.2M173.6 101.0L173.7 98.8M175.6 105.6L175.4 102.3M179.2 103.9L179.6 100.8M179.6 100.8L179.2 98.3M179.6 100.8L180.6 99.0M179.2 103.9L181.5 102.0M181.5 102.0L182.3 100.0M181.5 102.0L183.4 101.7M178.4 105.8L181.2 104.6M177.9 111.8L180.5 108.3M180.5 108.3L181.5 105.2M180.5 108.3L183.4 107.0M195.3 116.1L196.0 110.9M196.0 110.9L194.2 108.1M194.2 108.1L192.1 107.1M192.1 107.1L190.7 106.9M192.1 107.1L190.8 106.0M194.2 108.1L194.0 105.6M194.0 105.6L193.1 103.8M194.0 105.6L195.0 103.8M194.9 109.3L195.3 107.2M196.0 110.9L198.2 107.5M198.2 107.5L198.8 104.9M198.8 104.9L198.4 103.0M198.8 104.9L199.6 103.5M198.2 107.5L200.5 105.9M200.5 105.9L201.6 104.4M200.5 105.9L202.3 106.2M195.3 116.1L199.4 112.0M199.4 112.0L201.7 108.1M201.7 108.1L201.3 105.3M201.3 105.3L200.2 103.8M201.3 105.3L202.0 103.2M201.7 108.1L203.9 105.3M203.9 105.3L204.3 103.2M203.9 105.3L205.7 103.4M199.4 112.0L202.7 110.6M202.7 110.6L204.9 108.6M204.9 108.6L206.3 106.8M204.9 108.6L206.5 107.8M202.7 110.6L205.7 110.0M205.7 110.0L207.5 109.3M205.7 110.0L207.7 110.3M201.5 111.1L203.8 111.7M197.0 114.4L197.9 110.8M197.9 110.8L197.5 108.2M197.9 110.8L199.3 108.6M192.1 115.8L189.2 111.9M189.2 111.9L186.6 110.7M186.6 110.7L184.5 111.1M184.5 111.1L183.4 112.3M184.5 111.1L182.9 110.9M186.6 110.7L185.0 109.3M185.0 109.3L183.6 109.4M185.0 109.3L184.6 108.0M187.8 111.2L185.9 111.4M189.2 111.9L189.1 108.9M189.1 108.9L187.6 107.1M187.6 107.1L186.1 106.7M187.6 107.1L187.1 105.5M189.1 108.9L190.2 107.3M190.2 107.3L190.7 106.2M190.2 107.3L191.3 106.6M192.1 115.8L192.2 111.3M192.2 111.3L190.9 108.8M190.9 108.8L189.6 107.4M189.6 107.4L188.2 106.8M189.6 107.4L189.2 106.3M190.9 108.8L191.5 106.6M191.5 106.6L191.7 105.1M191.5 106.6L192.4 105.2M191.8 110.4L192.7 108.9M192.2 111.3L193.1 107.7M193.1 107.7L192.3 105.2M192.3 105.2L191.0 103.9M192.3 105.2L192.7 103.5M193.1 107.7L194.5 105.6M194.5 105.6L195.3 103.8M194.5 105.6L196.3 104.8M192.2 112.4L190.2 110.3M190.2 110.3L188.1 109.6M190.2 110.3L190.1 108.2M192.6 120.0L189.2 116.7M189.2 116.7L185.4 116.0M185.4 116.0L182.8 117.0M185.4 116.0L183.1 114.0M189.2 116.7L187.4 114.1M187.4 114.1L185.4 113.7M187.4 114.1L187.4 112.0M195.7 116.3L197.2 111.1M197.2 111.1L196.9 107.8M196.9 107.8L195.6 105.8M195.6 105.8L193.9 105.3M195.6 105.8L195.2 104.1M196.9 107.8L197.4 105.5M197.4 105.5L197.4 103.8M197.4 105.5L198.1 103.8M197.2 111.1L199.4 107.7M199.4 107.7L199.2 105.3M199.2 105.3L197.8 103.8M199.2 105.3L200.1 103.7M199.4 107.7L202.0 106.2M202.0 106.2L203.1 104.5M202.0 106.2L204.2 105.5M198.5 109.1L198.5 106.5M196.4 113.7L199.4 111.8M199.4 111.8L201.0 110.2M199.4 111.8L202.2 111.6M195.7 116.3L198.7 111.7M198.7 111.7L199.8 108.2M199.8 108.2L199.7 105.7M199.7 105.7L198.7 103.9M199.7 105.7L200.3 104.0M199.8 108.2L201.1 106.1M201.1 106.1L201.9 104.5M201.1 106.1L202.4 105.1M198.7 111.7L201.5 109.8M201.5 109.8L202.9 107.8M202.9 107.8L203.2 106.1M202.9 107.8L204.4 107.0M201.5 109.8L204.0 110.2M204.0 110.2L206.0 109.7M204.0 110.2L205.3 111.1M199.8 111.0L200.0 108.8M197.7 113.2L201.2 112.3M201.2 112.3L203.7 111.0M201.2 112.3L203.3 111.9M194.3 119.6L199.0 118.6M199.0 118.6L201.2 116.3M201.2 116.3L201.6 113.8M201.2 116.3L203.1 115.7M199.0 118.6L202.6 119.4M202.6 119.4L205.3 118.5M202.6 119.4L204.0 121.4M205.5 113.5L203.8 110.3M203.8 110.3L201.4 108.7M201.4 108.7L199.4 108.2M201.4 108.7L200.4 106.8M203.8 110.3L203.9 107.4M203.9 107.4L203.8 105.5M203.9 107.4L205.3 105.7M205.5 113.5L206.1 109.7M206.1 109.7L205.3 107.4M205.3 107.4L204.3 106.2M205.3 107.4L205.2 105.9M206.1 109.7L207.1 106.7M207.1 106.7L207.2 104.5M207.1 106.7L208.5 105.0M206.0 110.5L208.1 109.1M205.4 117.3L202.9 114.4M202.9 114.4L200.3 114.0M202.9 114.4L201.6 111.9M209.8 118.0L211.9 115.7M211.9 115.7L212.9 113.4M212.9 113.4L213.2 111.6M212.9 113.4L214.1 112.6M211.9 115.7L213.9 114.9M213.9 114.9L215.2 113.8M213.9 114.9L215.2 115.2M209.8 118.0L212.5 118.8M212.5 118.8L214.5 119.1M214.5 119.1L216.0 118.7M214.5 119.1L215.8 119.8M212.5 118.8L214.3 120.3M214.3 120.3L215.8 121.2M214.3 120.3L214.8 121.7M211.7 118.6L212.8 120.1M208.5 118.4L211.5 119.1M211.5 119.1L213.6 118.1M211.5 119.1L213.1 120.4M203.1 122.0L202.8 117.3M202.8 117.3L200.3 114.3M200.3 114.3L197.8 113.7M200.3 114.3L199.2 111.4M202.8 117.3L204.2 114.2M204.2 114.2L204.7 111.5M204.2 114.2L206.2 113.3M198.0 113.7L195.7 111.5M195.7 111.5L193.3 110.9M193.3 110.9L191.9 111.5M193.3 110.9L192.0 110.1M195.7 111.5L194.6 109.4M194.6 109.4L193.4 108.2M194.6 109.4L194.5 107.8M196.9 112.6L197.2 110.6M198.0 113.7L198.8 110.8M198.8 110.8L198.8 108.8M198.8 108.8L198.1 107.2M198.8 108.8L199.6 107.5M198.8 110.8L200.3 109.0M200.3 109.0L200.9 107.4M200.3 109.0L201.8 108.0M198.4 112.1L197.7 110.3M199.6 116.2L200.7 113.5M200.7 113.5L200.4 111.4M200.7 113.5L202.3 111.9M202.6 113.1L203.2 110.1M203.2 110.1L203.5 107.7M203.5 107.7L203.7 105.7M203.5 107.7L204.2 106.0M203.2 110.1L204.7 108.2M204.7 108.2L205.6 106.5M204.7 108.2L205.9 106.9M202.6 113.1L205.1 110.5M205.1 110.5L206.4 108.3M206.4 108.3L206.3 106.5M206.4 108.3L208.1 107.6M205.1 110.5L207.3 109.8M207.3 109.8L208.0 108.6M207.3 109.8L208.7 109.6M201.6 115.2L204.7 114.4M204.7 114.4L206.4 112.9M204.7 114.4L206.6 115.1M200.5 119.6L203.7 116.2M203.7 116.2L204.6 112.8M204.6 112.8L204.8 110.5M204.6 112.8L206.6 111.2M203.7 116.2L207.0 115.2M207.0 115.2L208.6 113.7M207.0 115.2L209.6 115.7M195.2 113.2L192.1 111.6M192.1 111.6L189.5 111.5M189.5 111.5L187.7 112.4M189.5 111.5L187.8 111.2M192.1 111.6L191.0 109.7M191.0 109.7L190.0 108.5M191.0 109.7L191.3 108.1M192.8 112.0L192.0 109.9M195.2 113.2L194.7 109.4M194.7 109.4L193.4 107.2M193.4 107.2L192.2 106.1M193.4 107.2L192.9 105.2M194.7 109.4L196.4 107.2M196.4 107.2L196.5 105.2M196.4 107.2L198.0 106.2M194.9 111.4L196.1 109.2M197.2 116.2L193.5 115.6M193.5 115.6L191.2 117.0M193.5 115.6L190.8 114.5M200.0 113.8L200.3 110.5M200.3 110.5L199.6 108.7M199.6 108.7L199.0 107.3M199.6 108.7L200.1 107.5M200.3 110.5L201.6 108.5M201.6 108.5L201.9 106.6M201.6 108.5L203.0 107.8M200.1 112.4L198.7 110.9M200.0 113.8L202.4 111.2M202.4 111.2L203.0 109.2M203.0 109.2L202.5 107.7M203.0 109.2L203.4 107.9M202.4 111.2L204.4 109.5M204.4 109.5L205.0 107.9M204.4 109.5L206.4 109.2M209.4 117.3L209.0 111.9M209.0 111.9L208.1 108.7M208.1 108.7L206.4 107.4M206.4 107.4L204.8 106.6M206.4 107.4L205.9 105.8M208.1 108.7L208.4 106.4M208.4 106.4L207.6 105.0M208.4 106.4L209.3 105.2M208.6 110.7L209.7 108.9M209.0 111.9L209.5 108.0M209.5 108.0L208.6 105.2M208.6 105.2L207.7 103.6M208.6 105.2L208.4 103.4M209.5 108.0L211.6 105.8M211.6 105.8L212.5 103.8M211.6 105.8L213.7 104.6M209.4 117.3L212.1 112.7M212.1 112.7L212.1 109.1M212.1 109.1L211.3 107.0M211.3 107.0L210.1 106.0M211.3 107.0L211.3 105.3M212.1 109.1L213.8 106.8M213.8 106.8L213.7 105.1M213.8 106.8L215.6 106.0M212.1 110.1L213.5 108.2M212.1 112.7L215.3 110.7M215.3 110.7L215.9 108.1M215.9 108.1L215.2 106.2M215.9 108.1L217.4 107.0M215.3 110.7L217.8 110.8M217.8 110.8L219.5 110.3M217.8 110.8L219.3 111.3M213.9 111.6L214.2 109.1M211.4 113.9L214.6 112.5M214.6 112.5L215.5 110.5M214.6 112.5L216.7 113.1M208.3 121.6L211.7 118.8M211.7 118.8L213.4 116.4M213.4 116.4L213.4 114.5M213.4 116.4L215.4 115.7M211.7 118.8L214.8 118.4M214.8 118.4L216.7 117.2M214.8 118.4L217.1 118.9M210.3 120.0L210.2 117.1M205.3 117.5L201.7 113.9M201.7 113.9L198.8 112.9M198.8 112.9L197.0 113.6M197.0 113.6L196.0 114.2M197.0 113.6L195.6 113.4M198.8 112.9L196.8 111.6M196.8 111.6L195.2 110.7M196.8 111.6L196.5 110.0M200.7 113.6L199.1 114.8M201.7 113.9L200.6 110.5M200.6 110.5L199.2 108.6M199.2 108.6L197.8 108.0M199.2 108.6L199.3 106.9M200.6 110.5L201.2 108.2M201.2 108.2L201.0 106.7M201.2 108.2L202.8 106.9M202.8 115.1L202.1 111.9M202.1 111.9L200.7 109.9M202.1 111.9L202.1 109.9M205.3 117.5L206.1 113.4M206.1 113.4L205.6 110.1M205.6 110.1L204.1 108.8M204.1 108.8L202.8 108.4M204.1 108.8L203.2 107.6M205.6 110.1L205.7 107.6M205.7 107.6L205.2 106.2M205.7 107.6L206.2 105.7M205.8 111.0L203.9 109.9M206.1 113.4L207.8 111.4M207.8 111.4L208.3 109.5M208.3 109.5L207.6 108.0M208.3 109.5L209.3 108.4M207.8 111.4L209.5 110.4M209.5 110.4L210.3 109.5M209.5 110.4L211.1 110.5M206.9 112.5L208.5 112.3M205.9 114.5L204.1 112.5M204.1 112.5L202.4 111.5M204.1 112.5L203.5 110.3M205.9 119.1L202.1 116.9M202.1 116.9L199.1 117.2M199.1 117.2L197.0 118.2M199.1 117.2L197.2 116.3M202.1 116.9L200.6 114.5M200.6 114.5L199.1 112.9M200.6 114.5L200.3 112.2M203.1 117.5L200.4 118.4M204.2 118.0L199.7 115.8M199.7 115.8L195.8 115.5M195.8 115.5L192.8 116.2M192.8 116.2L191.0 117.3M192.8 116.2L190.7 115.8M195.8 115.5L193.3 113.6M193.3 113.6L191.5 112.7M193.3 113.6L192.5 111.6M199.7 115.8L197.9 112.3M197.9 112.3L195.8 111.2M195.8 111.2L194.0 111.1M195.8 111.2L194.9 109.7M197.9 112.3L198.3 109.6M198.3 109.6L197.7 108.0M198.3 109.6L198.9 108.0M198.5 113.3L196.0 112.7M201.5 116.7L198.3 117.2M198.3 117.2L196.8 118.6M198.3 117.2L196.3 116.4M204.2 118.0L204.2 113.0M204.2 113.0L203.1 109.7M203.1 109.7L201.6 108.1M201.6 108.1L199.9 107.8M201.6 108.1L201.5 106.3M203.1 109.7L203.7 107.3M203.7 107.3L203.1 105.5M203.7 107.3L204.6 106.0M203.8 111.6L204.7 109.6M204.2 113.0L205.8 109.3M205.8 109.3L205.3 106.7M205.3 106.7L204.3 104.9M205.3 106.7L206.0 105.1M205.8 109.3L208.0 107.3M208.0 107.3L208.9 105.2M208.0 107.3L210.2 106.5M204.7 111.8L203.9 109.3M204.2 114.1L201.9 111.8M201.9 111.8L199.9 110.3M201.9 111.8L201.1 109.4M205.6 120.3L205.7 115.9M205.7 115.9L204.1 113.7M204.1 113.7L202.4 112.9M204.1 113.7L204.0 112.0M205.7 115.9L207.2 113.6M207.2 113.6L207.4 111.5M207.2 113.6L208.9 112.2M205.6 117.8L203.9 115.5M214.2 123.1L212.9 119.1M212.9 119.1L211.1 117.3M211.1 117.3L209.6 117.1M211.1 117.3L210.5 115.7M212.9 119.1L212.5 116.1M212.5 116.1L210.7 114.3M212.5 116.1L212.8 114.1M213.5 121.1L214.8 118.7M214.2 123.1L216.5 120.8M216.5 120.8L217.7 118.6M217.7 118.6L218.6 116.8M217.7 118.6L219.0 117.1M216.5 120.8L218.7 119.4M218.7 119.4L220.0 118.3M218.7 119.4L220.6 119.5M214.9 122.4L217.0 122.7M213.4 125.5L216.7 124.5M216.7 124.5L218.8 122.6M216.7 124.5L218.8 125.0M210.3 123.3L207.4 120.3M207.4 120.3L205.0 118.6M205.0 118.6L203.0 118.1M205.0 118.6L204.2 117.1M207.4 120.3L206.2 117.1M206.2 117.1L204.5 115.4M206.2 117.1L206.3 114.9M210.3 123.3L210.1 119.0M210.1 119.0L209.2 116.4M209.2 116.4L207.8 115.3M209.2 116.4L209.1 114.1M210.1 119.0L211.7 116.9M211.7 116.9L212.1 115.0M211.7 116.9L213.1 116.2M212.9 122.9L211.7 119.7M211.7 119.7L210.1 117.5M210.1 117.5L208.0 116.6M210.1 117.5L210.1 115.8M211.7 119.7L212.2 116.9M212.2 116.9L211.7 115.2M212.2 116.9L212.8 115.3M212.9 122.9L214.9 119.5M214.9 119.5L215.0 117.1M215.0 117.1L214.4 115.5M215.0 117.1L215.5 115.6M214.9 119.5L217.2 118.2M217.2 118.2L218.4 117.0M217.2 118.2L219.2 117.7" stroke-opacity="0.65" stroke-width="0.25"/><path d="M18.9 103.8L21.1 95.8M18.9 103.8L25.1 99.6M17.6 106.4L16.3 99.8M13.7 102.7L12.0 95.5M13.7 102.7L17.0 97.5M14.0 107.6L9.3 102.8M8.4 104.5L1.6 100.6M8.4 104.5L5.9 98.7M12.1 109.9L5.8 107.7M6.0 117.8L6.9 111.9M6.0 117.8L4.2 112.2M6.0 117.8L0.8 114.9M53.0 100.1L52.5 94.3M53.0 100.1L57.1 97.3M55.7 103.7L58.3 100.1M55.7 103.7L60.2 103.0M45.3 112.1L47.4 105.4M41.5 98.7L37.7 96.3M41.5 98.7L40.3 94.7M47.8 98.2L48.5 93.8M47.8 98.2L51.3 94.4M39.3 97.4L35.8 94.4M39.3 97.4L38.4 91.8M44.6 97.1L44.7 92.2M44.6 97.1L49.4 94.8M41.4 106.6L46.7 101.9M30.5 120.4L30.5 114.0M30.5 120.4L27.4 114.8M30.5 120.4L26.6 115.3M27.0 121.1L30.5 117.8M27.0 121.1L27.0 116.2M27.0 121.1L24.3 117.0M66.4 98.0L63.9 94.2M66.4 98.0L69.5 93.9M70.9 100.0L73.2 94.4M70.9 100.0L75.4 98.0M64.3 107.5L69.7 103.4M65.7 98.9L63.7 95.1M65.7 98.9L67.7 95.1M72.2 102.0L75.9 98.5M72.2 102.0L78.0 101.0M44.3 110.6L39.7 114.9M44.3 110.6L38.4 108.1M47.9 104.2L43.7 102.4M47.9 104.2L47.6 99.1M58.1 112.9L56.3 106.5M73.7 97.9L71.2 93.4M73.7 97.9L78.4 93.6M77.7 101.7L79.2 97.6M77.7 101.7L82.7 99.5M65.6 97.4L62.8 93.6M65.6 97.4L67.2 93.3M67.3 96.3L65.9 91.4M67.3 96.3L69.9 90.9M66.7 106.8L72.0 102.5M68.8 98.1L67.0 93.2M68.8 98.1L68.6 93.2M74.8 98.9L77.1 94.0M74.8 98.9L79.5 96.6M68.8 108.6L74.7 105.1M66.4 101.5L61.7 98.8M66.4 101.5L66.1 95.8M70.7 100.3L69.4 95.3M70.7 100.3L75.2 97.0M70.8 111.3L72.7 104.9M60.3 106.3L54.3 107.3M60.3 106.3L57.8 102.5M64.6 102.0L61.8 96.9M64.6 102.0L64.8 96.6M74.0 100.7L70.8 96.8M74.0 100.7L75.8 96.4M77.4 100.1L76.7 95.2M77.4 100.1L81.5 96.6M74.1 110.7L70.8 104.8M83.9 104.5L82.6 96.9M83.9 104.5L89.0 98.3M82.1 108.4L79.7 101.3M78.9 103.5L76.2 96.9M78.9 103.5L80.2 94.6M74.8 104.4L68.6 101.0M74.8 104.4L74.2 96.6M76.2 107.7L69.7 103.9M82.0 94.5L79.1 88.9M82.0 94.5L82.3 88.8M86.9 97.0L87.3 92.4M86.9 97.0L89.7 94.4M83.6 107.6L78.4 103.1M83.2 96.0L80.2 91.1M83.2 96.0L84.7 90.8M88.3 96.3L87.8 90.6M88.3 96.3L92.9 92.6M84.7 106.4L82.1 100.0M68.5 103.6L63.4 102.6M68.5 103.6L64.9 100.3M73.2 99.9L69.6 97.4M73.2 99.9L73.4 95.4M101.4 102.3L102.8 97.5M101.4 102.3L106.2 99.5M104.5 106.4L108.5 101.9M104.5 106.4L110.4 107.5M88.3 96.9L86.3 91.7M88.3 96.9L89.8 91.8M96.5 99.4L98.7 94.3M96.5 99.4L102.7 98.5M89.7 110.2L84.4 105.6M81.9 98.6L77.1 94.9M81.9 98.6L83.1 93.6M82.9 98.4L78.4 95.2M82.9 98.4L83.7 93.3M87.5 112.1L81.7 108.1M86.1 94.4L79.8 91.0M86.1 94.4L84.3 88.9M91.7 92.7L88.1 86.5M91.7 92.7L95.0 87.3M92.8 106.4L86.9 101.6M94.8 92.5L92.3 87.3M94.8 92.5L98.4 88.1M99.7 93.6L99.2 87.7M99.7 93.6L104.9 91.9M86.7 94.9L81.4 92.3M86.7 94.9L84.8 89.7M94.4 94.1L93.5 88.6M94.4 94.1L99.1 91.1M92.6 107.0L94.3 99.5M112.6 103.8L112.0 98.6M112.6 103.8L117.8 101.3M115.2 108.4L119.7 105.3M115.2 108.4L119.7 107.4M104.6 113.5L104.5 106.3M90.3 101.1L86.3 98.2M90.3 101.1L89.8 96.7M93.2 99.3L90.7 95.2M93.2 99.3L93.2 94.1M97.5 112.7L91.1 109.5M104.3 98.9L102.5 93.8M104.3 98.9L108.4 94.5M106.7 99.4L107.1 94.1M106.7 99.4L109.3 95.2M101.2 112.6L98.8 105.9M93.7 97.6L87.6 95.4M93.7 97.6L91.0 91.7M102.9 95.6L104.9 90.6M102.9 95.6L105.7 90.7M100.5 105.5L102.5 98.5M91.2 100.4L86.1 100.5M91.2 100.4L89.9 96.0M93.7 97.4L90.4 94.3M93.7 97.4L93.9 92.5M100.2 95.1L97.2 91.5M100.2 95.1L101.6 89.7M105.9 95.0L106.2 89.6M105.9 95.0L110.7 91.8M102.5 105.7L98.3 99.7M114.6 97.6L114.1 91.9M114.6 97.6L117.3 93.8M118.2 99.0L121.2 93.9M118.2 99.0L122.7 96.6M110.5 111.1L108.1 103.9M103.9 95.8L99.2 90.1M103.9 95.8L103.9 88.7M113.9 96.9L115.9 91.6M113.9 96.9L118.3 93.2M102.5 97.0L98.4 91.7M102.5 97.0L100.6 92.0M107.3 95.7L105.1 90.0M107.3 95.7L110.0 90.6M114.8 95.7L113.4 89.6M114.8 95.7L118.5 89.7M118.8 97.3L120.6 91.5M118.8 97.3L123.0 93.7M114.4 111.6L121.5 108.6M102.5 99.6L97.6 96.6M102.5 99.6L99.9 93.1M109.6 96.5L107.9 89.9M109.6 96.5L112.0 91.4M108.3 96.7L104.3 92.9M108.3 96.7L105.5 90.7M114.7 95.6L115.0 88.3M114.7 95.6L117.6 90.1M135.7 107.2L139.6 102.7M135.7 107.2L141.4 106.1M138.9 111.1L145.1 108.0M138.9 111.1L144.7 115.2M124.8 113.8L127.0 106.2M128.4 98.2L126.2 92.2M128.4 98.2L133.9 92.7M133.3 105.0L137.9 102.2M133.3 105.0L138.6 104.4M104.4 103.8L99.1 103.1M104.4 103.8L101.6 98.3M109.3 100.0L104.9 96.1M109.3 100.0L110.9 95.3M113.7 111.0L105.8 110.9M125.4 96.9L121.8 93.3M125.4 96.9L125.4 91.7M135.5 99.7L139.4 93.6M135.5 99.7L142.9 101.2M125.3 110.8L132.2 106.5M128.3 96.3L123.4 92.5M128.3 96.3L131.0 88.6M139.2 100.8L143.3 93.7M139.2 100.8L147.4 100.1M128.6 109.1L136.7 107.7M113.3 99.3L108.7 95.6M113.3 99.3L113.0 93.6M117.2 96.6L115.9 91.3M117.2 96.6L118.7 90.5M120.7 110.7L113.1 107.7M118.0 99.3L111.2 96.4M118.0 99.3L114.8 93.0M125.6 98.2L123.2 94.1M125.6 98.2L127.4 93.6M126.7 109.7L120.5 104.9M137.4 97.9L135.5 90.5M137.4 97.9L140.7 92.5M145.4 104.7L151.5 102.3M145.4 104.7L151.8 104.5M132.2 112.9L139.5 109.8M117.7 100.5L112.4 97.8M117.7 100.5L116.0 94.5M122.1 97.1L117.0 91.9M122.1 97.1L124.3 91.3M133.9 106.2L129.4 100.4M133.9 106.2L136.7 98.4M140.3 107.2L141.1 99.4M140.3 107.2L145.6 100.4M126.5 110.4L118.8 109.7M126.5 110.4L123.3 103.9M151.4 97.7L150.3 91.4M151.4 97.7L155.1 93.1M154.7 103.0L158.3 98.8M154.7 103.0L159.9 103.9M142.3 93.2L141.5 87.4M142.3 93.2L145.2 88.1M144.7 94.9L143.2 88.4M144.7 94.9L149.0 90.5M122.8 102.5L115.5 100.6M122.8 102.5L118.6 97.2M128.5 97.9L124.6 94.0M128.5 97.9L127.4 92.3M133.3 108.2L133.0 100.7M148.0 92.7L143.8 87.7M148.0 92.7L149.4 86.6M150.6 94.1L150.5 88.6M150.6 94.1L153.2 89.6M147.1 105.7L143.9 98.4M131.7 97.9L126.7 96.0M131.7 97.9L131.1 92.0M133.0 96.3L126.6 93.9M133.0 96.3L132.7 89.5M139.5 105.5L131.6 104.7M136.6 95.4L132.5 93.4M136.6 95.4L136.2 90.7M142.4 93.6L139.5 87.7M142.4 93.6L144.4 88.2M142.2 104.7L135.8 100.0M154.8 96.5L152.6 91.5M154.8 96.5L158.2 90.3M159.0 98.5L159.4 93.1M159.0 98.5L164.3 96.3M155.2 97.7L152.6 92.8M155.2 97.7L158.9 94.0M159.4 100.7L159.6 96.0M159.4 100.7L163.9 97.5M150.9 97.4L148.4 91.9M150.9 97.4L151.8 92.0M156.4 98.6L158.0 93.1M156.4 98.6L161.2 94.8M151.6 108.0L148.9 101.2M154.1 96.0L152.1 90.9M154.1 96.0L156.6 91.5M158.2 95.2L155.1 88.3M158.2 95.2L163.7 90.7M155.9 97.6L151.0 94.4M155.9 97.6L157.9 92.3M162.1 97.7L163.4 91.7M162.1 97.7L167.3 96.0M143.1 98.9L137.0 98.0M143.1 98.9L139.4 92.4M150.3 97.2L148.9 92.0M150.3 97.2L152.4 91.6M151.5 107.7L154.5 100.5M166.7 96.5L164.6 90.4M166.7 96.5L170.3 91.2M171.3 100.0L174.1 94.5M171.3 100.0L176.3 99.1M162.4 110.9L169.5 108.5M157.4 95.4L153.4 90.4M157.4 95.4L159.4 89.8M160.8 96.9L159.4 92.1M160.8 96.9L163.3 92.7M146.7 99.2L139.5 97.3M146.7 99.2L143.1 94.2M150.9 98.4L146.7 95.0M150.9 98.4L152.1 92.8M156.3 110.6L157.5 103.3M157.2 104.7L153.4 102.5M157.2 104.7L155.6 100.4M161.5 103.7L161.2 99.3M161.5 103.7L164.6 100.4M161.1 113.3L163.2 106.7M150.6 108.0L145.9 105.7M150.6 108.0L148.3 103.3M154.5 105.2L150.4 102.7M154.5 105.2L154.7 100.1M158.5 115.0L152.0 112.8M146.6 113.9L140.5 115.4M146.6 113.9L141.4 112.2M150.4 109.3L146.6 106.9M150.4 109.3L148.9 104.5M177.8 108.4L181.8 102.2M177.8 108.4L185.2 107.7M173.2 105.1L174.7 97.2M173.2 105.1L179.8 98.7M171.7 109.1L178.6 106.5M162.0 107.0L155.8 103.3M162.0 107.0L158.9 99.6M163.5 108.8L165.4 101.7M182.6 115.0L187.2 109.4M182.6 115.0L191.0 115.1M178.5 118.2L180.0 111.7M176.6 111.3L174.0 105.4M176.6 111.3L180.7 104.4M177.9 111.6L179.9 103.7M177.9 111.6L182.4 107.2M192.6 104.7L194.6 99.8M192.6 104.7L198.2 102.3M194.2 109.5L197.9 105.6M194.2 109.5L198.3 110.6M182.3 115.6L184.3 109.3M185.8 100.8L184.1 95.6M185.8 100.8L189.0 95.2M190.4 103.8L191.7 99.4M190.4 103.8L196.0 102.3M183.0 112.3L189.5 111.8M164.9 110.3L160.9 110.0M164.9 110.3L161.0 107.7M167.1 106.2L162.4 104.7M167.1 106.2L167.0 101.0M179.4 105.7L175.0 102.2M179.4 105.7L178.4 101.0M185.2 104.9L184.1 99.4M185.2 104.9L188.5 100.8M184.0 116.6L187.6 111.3M185.9 106.0L182.1 103.0M185.9 106.0L185.7 100.8M191.2 107.3L192.8 103.6M191.2 107.3L196.1 106.0M186.0 118.5L182.1 113.3M172.0 114.3L167.9 116.1M172.0 114.3L168.7 111.5M177.5 108.2L174.5 104.1M177.5 108.2L179.2 103.9M192.9 123.0L195.3 116.1M192.9 123.0L192.1 115.8M192.9 123.0L195.7 116.3M205.3 119.3L205.5 113.5M205.3 119.3L209.8 118.0M200.4 117.6L198.0 113.7M200.4 117.6L202.6 113.1M198.5 117.9L195.2 113.2M198.5 117.9L200.0 113.8M207.7 123.8L209.4 117.3M207.7 123.8L205.3 117.5M207.7 123.8L204.2 118.0M212.5 128.3L214.2 123.1M212.5 128.3L210.3 123.3M212.5 128.3L212.9 122.9" stroke-opacity="0.88" stroke-width="0.50"/><path d="M7.0 126.7L6.0 117.8M50.3 107.4L53.0 100.1M50.3 107.4L55.7 103.7M44.9 104.2L41.5 98.7M44.9 104.2L47.8 98.2M41.1 104.0L39.3 97.4M41.1 104.0L44.6 97.1M26.0 127.4L27.0 121.1M65.3 105.1L66.4 98.0M65.3 105.1L70.9 100.0M65.4 105.2L65.7 98.9M65.4 105.2L72.2 102.0M52.2 109.7L44.3 110.6M52.2 109.7L47.9 104.2M72.3 105.6L73.7 97.9M72.3 105.6L77.7 101.7M66.6 104.2L65.6 97.4M66.6 104.2L67.3 96.3M70.0 104.6L68.8 98.1M70.0 104.6L74.8 98.9M69.7 108.0L66.4 101.5M69.7 108.0L70.7 100.3M67.0 109.4L60.3 106.3M67.0 109.4L64.6 102.0M74.6 107.6L74.0 100.7M74.6 107.6L77.4 100.1M83.9 102.7L82.0 94.5M83.9 102.7L86.9 97.0M85.5 102.9L83.2 96.0M85.5 102.9L88.3 96.3M75.0 106.5L68.5 103.6M75.0 106.5L73.2 99.9M96.5 108.2L101.4 102.3M96.5 108.2L104.5 106.4M90.3 105.2L88.3 96.9M90.3 105.2L96.5 99.4M85.1 105.8L81.9 98.6M85.1 105.8L82.9 98.4M91.7 101.6L86.1 94.4M91.7 101.6L91.7 92.7M95.5 101.3L94.8 92.5M95.5 101.3L99.7 93.6M91.1 101.7L86.7 94.9M91.1 101.7L94.4 94.1M108.6 110.7L112.6 103.8M108.6 110.7L115.2 108.4M94.6 107.1L90.3 101.1M94.6 107.1L93.2 99.3M103.5 106.7L104.3 98.9M103.5 106.7L106.7 99.4M99.7 102.9L93.7 97.6M99.7 102.9L102.9 95.6M97.1 104.1L91.2 100.4M97.1 104.1L93.7 97.4M102.3 102.5L100.2 95.1M102.3 102.5L105.9 95.0M113.1 104.9L114.6 97.6M113.1 104.9L118.2 99.0M108.4 104.0L103.9 95.8M108.4 104.0L113.9 96.9M106.9 104.1L102.5 97.0M106.9 104.1L107.3 95.7M115.8 104.7L114.8 95.7M115.8 104.7L118.8 97.3M108.5 105.6L102.5 99.6M108.5 105.6L109.6 96.5M112.5 104.5L108.3 96.7M112.5 104.5L114.7 95.6M129.2 111.6L135.7 107.2M129.2 111.6L138.9 111.1M125.7 107.4L128.4 98.2M125.7 107.4L133.3 105.0M111.0 107.6L104.4 103.8M111.0 107.6L109.3 100.0M127.3 104.7L125.4 96.9M127.3 104.7L135.5 99.7M130.6 106.3L128.3 96.3M130.6 106.3L139.2 100.8M118.2 105.2L113.3 99.3M118.2 105.2L117.2 96.6M125.4 105.6L118.0 99.3M125.4 105.6L125.6 98.2M136.3 107.3L137.4 97.9M136.3 107.3L145.4 104.7M123.1 106.6L117.7 100.5M123.1 106.6L122.1 97.1M147.2 105.1L151.4 97.7M147.2 105.1L154.7 103.0M141.5 102.6L142.3 93.2M141.5 102.6L144.7 94.9M131.3 106.4L122.8 102.5M131.3 106.4L128.5 97.9M148.2 101.1L148.0 92.7M148.2 101.1L150.6 94.1M137.8 103.3L131.7 97.9M137.8 103.3L133.0 96.3M141.0 101.5L136.6 95.4M141.0 101.5L142.4 93.6M153.1 105.3L154.8 96.5M153.1 105.3L159.0 98.5M155.1 106.0L155.2 97.7M155.1 106.0L159.4 100.7M152.0 105.1L150.9 97.4M152.0 105.1L156.4 98.6M155.7 104.2L154.1 96.0M155.7 104.2L158.2 95.2M158.2 104.5L155.9 97.6M158.2 104.5L162.1 97.7M150.4 105.2L143.1 98.9M150.4 105.2L150.3 97.2M165.7 105.5L166.7 96.5M165.7 105.5L171.3 100.0M159.3 103.8L157.4 95.4M159.3 103.8L160.8 96.9M153.0 106.1L146.7 99.2M153.0 106.1L150.9 98.4M160.4 110.5L157.2 104.7M160.4 110.5L161.5 103.7M156.5 112.4L150.6 108.0M156.5 112.4L154.5 105.2M154.3 114.6L146.6 113.9M154.3 114.6L150.4 109.3M187.5 111.0L192.6 104.7M187.5 111.0L194.2 109.5M185.0 108.9L185.8 100.8M185.0 108.9L190.4 103.8M171.4 112.1L164.9 110.3M171.4 112.1L167.1 106.2M183.3 112.5L179.4 105.7M183.3 112.5L185.2 104.9M187.6 112.7L185.9 106.0M187.6 112.7L191.2 107.3M178.3 114.9L172.0 114.3M178.3 114.9L177.5 108.2M200.7 124.9L205.3 119.3M200.7 124.9L200.4 117.6M200.7 124.9L198.5 117.9M212.0 134.0L212.5 128.3" stroke-opacity="0.88" stroke-width="0.75"/><path d="M14.2 113.0L18.9 103.8M14.2 113.0L13.7 102.7M14.2 113.0L8.4 104.5M31.0 127.6L30.5 120.4M79.2 114.9L83.9 104.5M79.2 114.9L78.9 103.5M79.2 114.9L74.8 104.4M103.1 113.7L99.7 102.9M103.1 113.7L97.1 104.1M103.1 113.7L102.3 102.5M135.5 117.7L133.9 106.2M135.5 117.7L140.3 107.2M135.5 117.7L126.5 110.4M169.1 115.7L177.8 108.4M169.1 115.7L173.2 105.1M169.1 115.7L162.0 107.0M174.5 121.3L182.6 115.0M174.5 121.3L176.6 111.3M174.5 121.3L177.9 111.6M193.0 133.3L192.9 123.0M200.0 133.6L200.7 124.9M207.0 133.8L207.7 123.8" stroke-opacity="0.97" stroke-width="1.00"/><path d="M42.4 114.7L50.3 107.4M42.4 114.7L44.9 104.2M42.4 114.7L41.1 104.0M61.3 114.6L65.3 105.1M61.3 114.6L65.4 105.2M61.3 114.6L52.2 109.7M67.0 114.7L72.3 105.6M67.0 114.7L66.6 104.2M67.0 114.7L70.0 104.6M73.1 117.8L69.7 108.0M73.1 117.8L67.0 109.4M73.1 117.8L74.6 107.6M83.2 113.3L83.9 102.7M83.2 113.3L85.5 102.9M83.2 113.3L75.0 106.5M88.9 115.8L96.5 108.2M88.9 115.8L90.3 105.2M88.9 115.8L85.1 105.8M94.3 113.0L91.7 101.6M94.3 113.0L95.5 101.3M94.3 113.0L91.1 101.7M99.6 116.9L108.6 110.7M99.6 116.9L94.6 107.1M99.6 116.9L103.5 106.7M108.6 115.7L113.1 104.9M108.6 115.7L108.4 104.0M108.6 115.7L106.9 104.1M113.4 116.4L115.8 104.7M113.4 116.4L108.5 105.6M113.4 116.4L112.5 104.5M118.5 117.1L129.2 111.6M118.5 117.1L125.7 107.4M118.5 117.1L111.0 107.6M123.4 116.6L127.3 104.7M123.4 116.6L130.6 106.3M123.4 116.6L118.2 105.2M129.2 117.1L125.4 105.6M129.2 117.1L136.3 107.3M129.2 117.1L123.1 106.6M139.9 114.1L147.2 105.1M139.9 114.1L141.5 102.6M139.9 114.1L131.3 106.4M145.4 113.0L148.2 101.1M145.4 113.0L137.8 103.3M145.4 113.0L141.0 101.5M150.5 116.1L153.1 105.3M150.5 116.1L155.1 106.0M150.5 116.1L152.0 105.1M155.3 116.3L155.7 104.2M155.3 116.3L158.2 104.5M155.3 116.3L150.4 105.2M159.8 115.3L165.7 105.5M159.8 115.3L159.3 103.8M159.8 115.3L153.0 106.1M162.9 120.8L160.4 110.5M162.9 120.8L156.5 112.4M162.9 120.8L154.3 114.6M179.9 117.6L187.5 111.0M179.9 117.6L185.0 108.9M179.9 117.6L171.4 112.1M184.9 122.3L183.3 112.5M184.9 122.3L187.6 112.7M184.9 122.3L178.3 114.9" stroke-opacity="0.97" stroke-width="1.25"/><path d="M78.4 129.3L79.2 114.9M134.6 131.3L135.5 117.7M169.9 132.5L169.1 115.7M174.5 132.7L174.5 121.3" stroke-opacity="0.97" stroke-width="1.50"/><path d="M15.0 127.0L14.2 113.0M103.8 130.2L103.1 113.7" stroke-opacity="0.97" stroke-width="1.75"/><path d="M42.0 128.0L42.4 114.7M107.9 130.3L108.6 115.7M130.0 131.1L129.2 117.1M154.7 132.0L155.3 116.3M163.5 132.3L162.9 120.8" stroke-opacity="0.97" stroke-width="2.00"/><path d="M61.0 128.7L61.3 114.6M67.3 128.9L67.0 114.7M72.8 129.1L73.1 117.8M99.7 130.0L99.6 116.9M119.2 130.7L118.5 117.1M180.5 132.9L179.9 117.6" stroke-opacity="0.97" stroke-width="2.25"/><path d="M95.3 129.9L94.3 113.0M114.0 130.5L113.4 116.4M185.7 133.1L184.9 122.3" stroke-opacity="0.97" stroke-width="2.50"/><path d="M83.1 129.4L83.2 113.3M140.5 131.5L139.9 114.1M145.5 131.6L145.4 113.0M149.5 131.8L150.5 116.1M158.8 132.1L159.8 115.3" stroke-opacity="0.97" stroke-width="2.75"/><path d="M88.8 129.6L88.9 115.8M123.9 130.9L123.4 116.6" stroke-opacity="0.97" stroke-width="3.00"/><g fill="#17130e" fill-opacity="0.8" stroke="none"><circle cx="32.7" cy="95.7" r="1.0"/><circle cx="37.6" cy="102.3" r="1.6"/><circle cx="14.9" cy="99.3" r="1.2"/><circle cx="37.8" cy="94.9" r="1.7"/><circle cx="38.6" cy="94.2" r="1.1"/><circle cx="13.1" cy="105.8" r="1.9"/><circle cx="114.6" cy="99.3" r="1.1"/><circle cx="131.6" cy="103.7" r="1.2"/><circle cx="164.2" cy="91.1" r="1.2"/><circle cx="174.3" cy="98.8" r="1.4"/><circle cx="155.7" cy="100.5" r="1.4"/><circle cx="107.6" cy="106.0" r="2.0"/><circle cx="188.0" cy="104.6" r="1.4"/><circle cx="135.9" cy="105.2" r="1.7"/><circle cx="114.7" cy="95.2" r="1.4"/><circle cx="148.5" cy="107.8" r="1.5"/><circle cx="107.4" cy="108.1" r="1.4"/><circle cx="149.1" cy="94.9" r="1.4"/><circle cx="138.0" cy="107.0" r="1.1"/><circle cx="151.7" cy="93.9" r="1.7"/><circle cx="108.1" cy="96.1" r="1.3"/><circle cx="159.1" cy="91.1" r="1.5"/><circle cx="122.7" cy="96.2" r="1.5"/><circle cx="186.5" cy="100.6" r="2.0"/><circle cx="119.2" cy="110.3" r="1.4"/><circle cx="121.1" cy="106.5" r="1.9"/><circle cx="105.6" cy="95.9" r="1.8"/><circle cx="134.1" cy="95.3" r="1.0"/><circle cx="108.4" cy="103.6" r="2.0"/><circle cx="189.9" cy="101.1" r="1.0"/><circle cx="132.4" cy="107.3" r="1.8"/><circle cx="159.3" cy="95.0" r="1.5"/><circle cx="145.6" cy="103.8" r="1.3"/><circle cx="185.5" cy="109.7" r="1.2"/></g></g><path d="M0 125.5 C40 124.5 80 126 120 129 C160 132 200 133 226.5 133.5 L226.5 150.5 L0 150.5 Z" fill="#0e130f"/><path d="M0 140 C60 137 140 139 226.5 141 L226.5 150.5 L0 150.5 Z" fill="#0a0d0c" fill-opacity="0.7"/><rect x="0.5" y="0.5" width="225.5" height="149.5" fill="none" stroke="#3f6cb4" stroke-width="1"/><rect x="216" y="140" width="10" height="10" fill="#3f7fd0"/><path d="M218 145 l2 2.2 l3.6 -4.6" stroke="#fff" stroke-width="1.4" fill="none"/></svg><svg class="a" style="left:483px;top:109px" width="226" height="150.5" viewBox="0 0 226 150.5"><defs><linearGradient id="p2L" x1="0" y1="0" x2="0" y2="1"><stop offset="0" stop-color="#6a8591"/><stop offset="0.2" stop-color="#8197a0"/><stop offset="0.4" stop-color="#9cacaf"/><stop offset="0.55" stop-color="#adb6b4"/><stop offset="0.68" stop-color="#bcbbb1"/><stop offset="0.76" stop-color="#cdbba6"/><stop offset="0.84" stop-color="#dfb690"/></linearGradient><linearGradient id="p2R" x1="0" y1="0" x2="0" y2="1"><stop offset="0" stop-color="#a2a9ac"/><stop offset="0.2" stop-color="#aeb2b2"/><stop offset="0.4" stop-color="#bdbbb3"/><stop offset="0.55" stop-color="#cfc0ae"/><stop offset="0.68" stop-color="#dfc2a6"/><stop offset="0.84" stop-color="#efc19a"/></linearGradient><linearGradient id="p2M" x1="0" y1="0" x2="1" y2="0"><stop offset="0" stop-color="#000"/><stop offset="1" stop-color="#fff"/></linearGradient><mask id="p2K" maskContentUnits="objectBoundingBox"><rect width="1" height="1" fill="url(#p2M)"/></mask><filter id="p2B" x="-5%" y="-5%" width="110%" height="110%"><feGaussianBlur stdDeviation="0.4"/></filter><filter id="p2C" x="-5%" y="-5%" width="110%" height="110%"><feGaussianBlur stdDeviation="1.6"/></filter><radialGradient id="p2G" gradientUnits="userSpaceOnUse" cx="246" cy="112" r="105"><stop offset="0" stop-color="#f8c391" stop-opacity="0.9"/><stop offset="0.28" stop-color="#f8c391" stop-opacity="0.5"/><stop offset="0.55" stop-color="#f8c391" stop-opacity="0.12"/><stop offset="1" stop-color="#f8c391" stop-opacity="0"/></radialGradient></defs><rect width="226" height="150.5" fill="url(#p2L)"/><rect width="226" height="150.5" fill="url(#p2R)" mask="url(#p2K)"/><rect width="226" height="150.5" fill="url(#p2G)"/><path d="M186 22.5 L196 27.5" stroke="#fff" stroke-opacity="0.6" stroke-width="1.1" stroke-linecap="round"/><ellipse cx="4" cy="43" rx="5" ry="1.6" fill="#fff" fill-opacity="0.16"/><g filter="url(#p2C)" fill="#1e1a14" fill-opacity="0.58"><ellipse cx="14.2" cy="101.2" rx="9.5" ry="11.8"/><ellipse cx="14.2" cy="102.2" rx="7.6" ry="9.1"/><ellipse cx="14.2" cy="103.2" rx="5.3" ry="7.6"/><ellipse cx="6.0" cy="111.8" rx="5.5" ry="6.8"/><ellipse cx="42.4" cy="100.8" rx="10.0" ry="12.4"/><ellipse cx="42.4" cy="101.8" rx="8.0" ry="9.6"/><ellipse cx="42.4" cy="102.8" rx="5.6" ry="8.0"/><ellipse cx="30.5" cy="111.3" rx="6.0" ry="7.4"/><ellipse cx="27.0" cy="115.2" rx="4.5" ry="5.6"/><ellipse cx="61.3" cy="102.7" rx="9.5" ry="11.8"/><ellipse cx="67.0" cy="102.2" rx="9.8" ry="12.1"/><ellipse cx="73.1" cy="102.9" rx="9.6" ry="11.9"/><ellipse cx="79.2" cy="100.5" rx="10.6" ry="13.1"/><ellipse cx="83.2" cy="102.7" rx="9.8" ry="12.2"/><ellipse cx="88.9" cy="102.6" rx="9.9" ry="12.3"/><ellipse cx="94.3" cy="100.3" rx="10.9" ry="13.5"/><ellipse cx="99.6" cy="102.4" rx="10.2" ry="12.6"/><ellipse cx="103.1" cy="101.7" rx="10.5" ry="13.0"/><ellipse cx="108.6" cy="100.8" rx="10.9" ry="13.5"/><ellipse cx="113.4" cy="100.6" rx="11.0" ry="13.6"/><ellipse cx="118.5" cy="100.3" rx="11.2" ry="13.9"/><ellipse cx="123.4" cy="99.3" rx="11.6" ry="14.4"/><ellipse cx="129.2" cy="100.5" rx="11.2" ry="13.9"/><ellipse cx="135.5" cy="102.2" rx="10.7" ry="13.2"/><ellipse cx="139.9" cy="102.3" rx="10.7" ry="13.3"/><ellipse cx="145.4" cy="100.8" rx="11.4" ry="14.1"/><ellipse cx="150.5" cy="103.7" rx="10.3" ry="12.8"/><ellipse cx="155.3" cy="101.6" rx="11.2" ry="13.9"/><ellipse cx="159.8" cy="103.2" rx="10.6" ry="13.2"/><ellipse cx="162.9" cy="105.6" rx="9.8" ry="12.2"/><ellipse cx="169.1" cy="104.1" rx="10.5" ry="13.0"/><ellipse cx="174.5" cy="106.9" rx="9.5" ry="11.8"/><ellipse cx="179.9" cy="107.4" rx="9.4" ry="11.6"/><ellipse cx="184.9" cy="108.1" rx="9.2" ry="11.4"/><ellipse cx="192.9" cy="115.0" rx="6.8" ry="8.4"/><ellipse cx="200.7" cy="115.2" rx="6.8" ry="8.4"/><ellipse cx="207.7" cy="116.8" rx="6.2" ry="7.8"/><ellipse cx="212.5" cy="120.4" rx="5.0" ry="6.2"/><rect x="58" y="122" width="134" height="9" transform="rotate(2 58 122)"/></g><g filter="url(#p2B)" stroke="#17130e" fill="none" stroke-linecap="round"><path d="M21.1 95.8L19.6 89.3M19.6 89.3L17.3 84.6M17.3 84.6L14.2 81.6M17.3 84.6L17.6 80.8M19.6 89.3L20.8 85.1M20.8 85.1L20.3 81.6M20.8 85.1L23.5 83.3M20.0 91.1L21.8 87.1M21.1 95.8L24.0 91.4M24.0 91.4L24.4 87.2M24.4 87.2L22.9 84.4M24.4 87.2L26.2 84.4M24.0 91.4L27.0 89.5M27.0 89.5L27.9 86.8M27.0 89.5L29.6 89.7M23.1 92.8L26.3 91.8M25.1 99.6L27.3 95.0M27.3 95.0L26.7 91.7M26.7 91.7L25.6 89.5M26.7 91.7L27.1 89.1M27.3 95.0L30.0 92.4M30.0 92.4L30.5 89.6M30.0 92.4L32.7 91.5M26.4 97.0L24.7 94.1M25.1 99.6L30.1 98.5M30.1 98.5L32.8 95.9M32.8 95.9L33.8 93.2M32.8 95.9L35.5 95.7M30.1 98.5L33.3 99.1M33.3 99.1L35.5 97.5M33.3 99.1L35.5 100.4M27.0 99.2L28.2 96.1M16.3 99.8L12.9 95.7M12.9 95.7L9.0 93.9M12.9 95.7L12.7 92.1M16.3 99.8L18.7 95.7M18.7 95.7L19.7 92.2M18.7 95.7L21.6 94.8M17.1 103.6L19.7 100.2M12.0 95.5L8.9 90.5M8.9 90.5L5.7 88.4M5.7 88.4L3.3 88.5M5.7 88.4L3.9 86.4M8.9 90.5L7.7 86.3M7.7 86.3L5.2 84.0M7.7 86.3L8.2 83.5M10.4 93.0L6.7 91.8M12.0 95.5L13.2 91.0M13.2 91.0L13.4 87.3M13.4 87.3L11.7 84.9M13.4 87.3L14.8 84.8M13.2 91.0L15.8 89.2M15.8 89.2L17.3 87.6M15.8 89.2L18.0 88.9M12.6 93.3L15.4 92.0M12.5 97.5L15.1 93.5M15.1 93.5L15.8 90.1M15.1 93.5L18.8 92.2M17.0 97.5L18.6 93.9M18.6 93.9L18.4 90.8M18.4 90.8L17.3 88.4M18.4 90.8L18.8 88.4M18.6 93.9L20.0 91.9M20.0 91.9L20.3 90.2M20.0 91.9L21.5 91.4M17.0 97.5L20.8 96.0M20.8 96.0L22.0 93.1M22.0 93.1L22.8 91.1M22.0 93.1L23.6 91.6M20.8 96.0L23.4 96.1M23.4 96.1L25.3 95.5M23.4 96.1L24.8 96.8M18.5 96.9L20.8 98.1M9.3 102.8L5.1 101.5M5.1 101.5L1.6 102.3M5.1 101.5L2.5 99.5M9.3 102.8L7.4 97.8M7.4 97.8L4.7 95.9M7.4 97.8L8.6 93.8M1.6 100.6L-3.7 101.5M-3.7 101.5L-6.6 104.5M-6.6 104.5L-6.9 107.9M-6.6 104.5L-9.4 106.6M-3.7 101.5L-7.8 101.4M-7.8 101.4L-10.7 101.6M-7.8 101.4L-10.1 100.0M-2.3 101.3L-4.2 104.2M1.6 100.6L-1.4 95.5M-1.4 95.5L-5.1 92.5M-5.1 92.5L-9.0 92.8M-5.1 92.5L-6.4 89.7M-1.4 95.5L-1.8 91.4M-1.8 91.4L-3.6 88.7M-1.8 91.4L-1.5 88.3M-0.8 96.5L-0.2 92.7M5.1 102.6L0.0 103.1M0.0 103.1L-2.6 104.7M0.0 103.1L-3.3 102.1M5.9 98.7L3.7 94.5M3.7 94.5L1.2 92.4M1.2 92.4L-0.9 92.2M1.2 92.4L-0.1 90.2M3.7 94.5L3.7 91.0M3.7 91.0L3.4 88.6M3.7 91.0L4.2 88.2M5.9 98.7L4.7 94.1M4.7 94.1L3.5 91.3M3.5 91.3L1.8 90.1M3.5 91.3L3.5 89.1M4.7 94.1L6.1 91.0M6.1 91.0L6.0 88.6M6.1 91.0L7.8 89.5M5.2 96.1L2.8 94.2M7.2 101.8L3.3 100.5M3.3 100.5L0.2 101.5M3.3 100.5L0.9 99.1M5.8 107.7L1.6 109.7M1.6 109.7L-0.7 112.2M1.6 109.7L-1.4 109.8M5.8 107.7L2.4 104.0M2.4 104.0L-0.2 101.6M2.4 104.0L1.3 100.9M6.9 111.9L5.3 108.0M5.3 108.0L2.6 105.8M2.6 105.8L0.0 105.0M2.6 105.8L1.6 103.2M5.3 108.0L5.9 105.0M5.9 105.0L4.8 103.4M5.9 105.0L7.7 103.8M5.8 109.2L7.3 106.9M6.9 111.9L9.0 108.5M9.0 108.5L8.8 105.6M8.8 105.6L7.5 103.9M8.8 105.6L9.3 103.4M9.0 108.5L11.7 106.8M11.7 106.8L13.2 105.6M11.7 106.8L14.2 106.6M7.6 110.8L10.1 109.9M4.2 112.2L1.0 108.9M1.0 108.9L-2.1 107.4M-2.1 107.4L-4.2 107.8M-2.1 107.4L-3.9 105.2M1.0 108.9L0.1 106.2M0.1 106.2L-1.4 104.2M0.1 106.2L0.9 104.3M4.2 112.2L4.7 107.8M4.7 107.8L4.2 104.7M4.2 104.7L3.5 102.8M4.2 104.7L4.8 102.8M4.7 107.8L5.8 105.0M5.8 105.0L5.6 102.8M5.8 105.0L7.4 103.4M4.4 110.5L3.1 108.1M0.8 114.9L-3.9 114.4M-3.9 114.4L-7.3 115.4M-7.3 115.4L-8.5 117.4M-7.3 115.4L-9.5 114.8M-3.9 114.4L-7.3 113.2M-7.3 113.2L-9.4 113.6M-7.3 113.2L-8.9 111.5M0.8 114.9L-0.8 110.9M-0.8 110.9L-3.6 109.5M-3.6 109.5L-5.8 109.5M-3.6 109.5L-4.8 107.7M-0.8 110.9L-0.4 107.9M-0.4 107.9L-1.3 105.8M-0.4 107.9L0.8 105.9M3.9 116.6L2.4 113.0M2.4 113.0L-0.2 111.6M2.4 113.0L3.3 110.3M52.5 94.3L50.8 90.9M50.8 90.9L49.3 88.5M50.8 90.9L50.8 88.4M52.5 94.3L53.6 89.9M53.6 89.9L52.6 86.6M53.6 89.9L55.7 88.0M57.1 97.3L58.8 94.1M58.8 94.1L59.2 91.8M58.8 94.1L61.0 93.2M57.1 97.3L60.8 96.0M60.8 96.0L63.0 94.7M60.8 96.0L63.4 96.1M54.8 98.9L55.7 95.8M58.3 100.1L59.0 96.7M59.0 96.7L58.5 94.4M59.0 96.7L60.7 94.7M58.3 100.1L61.3 98.0M61.3 98.0L62.5 95.9M61.3 98.0L63.7 98.0M57.3 101.5L60.2 101.1M60.2 103.0L62.6 100.9M62.6 100.9L63.6 99.1M62.6 100.9L64.7 100.5M60.2 103.0L63.8 103.8M63.8 103.8L66.0 103.3M63.8 103.8L65.5 105.2M58.2 103.3L60.4 105.3M54.3 104.7L56.0 100.8M56.0 100.8L56.6 97.5M56.0 100.8L58.7 99.3M47.4 105.4L47.7 100.6M47.7 100.6L46.8 97.9M47.7 100.6L49.2 97.5M47.4 105.4L49.6 100.1M49.6 100.1L50.0 96.5M49.6 100.1L52.3 97.6M46.0 109.7L50.0 107.5M37.7 96.3L34.4 95.6M34.4 95.6L32.0 96.8M34.4 95.6L32.5 94.1M37.7 96.3L35.3 94.1M35.3 94.1L32.9 93.2M35.3 94.1L35.3 91.9M40.2 97.9L37.3 98.1M40.3 94.7L38.1 92.3M38.1 92.3L35.9 91.2M38.1 92.3L38.0 89.9M40.3 94.7L40.4 92.2M40.4 92.2L39.6 90.6M40.4 92.2L40.9 90.6M40.8 96.4L38.6 95.0M43.8 102.5L39.7 101.6M39.7 101.6L36.8 101.9M39.7 101.6L37.1 99.6M48.5 93.8L48.8 91.1M48.8 91.1L48.5 88.8M48.8 91.1L50.2 89.6M48.5 93.8L51.0 91.6M51.0 91.6L51.5 89.3M51.0 91.6L53.5 91.1M48.2 96.0L46.1 94.0M51.3 94.4L53.6 91.1M53.6 91.1L54.1 88.0M53.6 91.1L56.2 89.9M51.3 94.4L53.7 92.4M53.7 92.4L55.1 90.5M53.7 92.4L55.8 92.4M35.8 94.4L32.4 93.1M32.4 93.1L29.6 93.9M32.4 93.1L31.0 91.5M35.8 94.4L35.2 90.9M35.2 90.9L33.5 88.9M35.2 90.9L36.0 88.4M38.3 96.5L37.5 93.6M38.4 91.8L35.1 89.5M35.1 89.5L32.6 89.2M35.1 89.5L34.2 86.4M38.4 91.8L40.5 88.6M40.5 88.6L40.4 85.5M40.5 88.6L43.0 88.0M40.2 100.8L43.2 97.4M43.2 97.4L43.7 94.5M43.2 97.4L46.0 96.5M44.7 92.2L44.0 88.9M44.0 88.9L42.1 87.2M44.0 88.9L44.5 86.3M44.7 92.2L45.8 88.6M45.8 88.6L45.3 86.4M45.8 88.6L47.6 86.7M49.4 94.8L52.8 92.4M52.8 92.4L55.0 90.5M52.8 92.4L56.3 92.1M49.4 94.8L52.8 94.4M52.8 94.4L54.4 92.5M52.8 94.4L54.8 95.3M42.5 101.3L46.9 98.8M46.9 98.8L48.7 95.4M46.9 98.8L50.5 98.8M46.7 101.9L49.0 97.7M49.0 97.7L49.1 94.1M49.0 97.7L51.6 95.7M46.7 101.9L50.4 99.8M50.4 99.8L52.9 97.9M50.4 99.8L52.9 98.7M30.5 114.0L29.3 109.0M29.3 109.0L27.5 105.5M27.5 105.5L25.2 103.4M27.5 105.5L28.3 103.1M29.3 109.0L30.2 105.5M30.2 105.5L29.9 102.8M30.2 105.5L32.3 103.5M29.7 110.5L31.1 107.5M30.5 114.0L32.5 109.8M32.5 109.8L33.3 106.2M33.3 106.2L32.7 103.5M33.3 106.2L34.9 103.7M32.5 109.8L35.0 107.6M35.0 107.6L35.5 104.9M35.0 107.6L37.0 106.6M31.6 111.7L30.2 109.1M30.5 116.1L27.2 113.5M27.2 113.5L24.4 112.9M27.2 113.5L26.1 111.0M27.4 114.8L23.1 112.3M23.1 112.3L20.1 112.2M20.1 112.2L18.1 112.4M20.1 112.2L17.9 111.8M23.1 112.3L20.9 109.5M20.9 109.5L18.4 108.8M20.9 109.5L19.9 107.2M26.0 114.0L25.5 110.8M27.4 114.8L27.3 110.1M27.3 110.1L25.6 107.0M25.6 107.0L23.2 105.3M25.6 107.0L25.8 104.2M27.3 110.1L28.0 107.3M28.0 107.3L27.7 105.2M28.0 107.3L29.5 106.1M27.3 112.2L29.6 110.2M26.6 115.3L22.3 112.7M22.3 112.7L18.9 112.0M18.9 112.0L16.7 112.6M18.9 112.0L17.1 110.3M22.3 112.7L20.3 109.4M20.3 109.4L18.1 108.7M20.3 109.4L19.4 106.7M25.3 114.5L22.0 114.9M26.6 115.3L26.5 110.6M26.5 110.6L23.9 108.0M23.9 108.0L21.7 107.3M23.9 108.0L23.7 105.6M26.5 110.6L28.0 107.2M28.0 107.2L28.5 104.8M28.0 107.2L29.7 105.6M27.4 116.4L23.2 115.8M23.2 115.8L20.0 116.3M23.2 115.8L20.6 114.1M30.5 117.8L31.8 114.9M31.8 114.9L32.3 112.5M31.8 114.9L33.6 113.2M30.5 117.8L33.6 116.4M33.6 116.4L35.4 114.7M33.6 116.4L36.0 116.9M28.2 119.9L27.7 116.8M27.0 116.2L25.2 113.5M25.2 113.5L23.7 112.4M25.2 113.5L25.0 111.6M27.0 116.2L27.2 112.7M27.2 112.7L26.5 110.6M27.2 112.7L28.5 110.8M27.0 117.4L25.1 114.9M24.3 117.0L22.0 114.8M22.0 114.8L19.6 114.2M22.0 114.8L20.9 112.8M24.3 117.0L24.2 113.5M24.2 113.5L23.3 111.2M24.2 113.5L25.7 111.9M63.9 94.2L61.1 92.3M61.1 92.3L58.9 91.7M61.1 92.3L59.3 90.4M63.9 94.2L64.5 90.8M64.5 90.8L64.5 88.4M64.5 90.8L66.4 89.4M69.5 93.9L70.6 90.7M70.6 90.7L70.7 88.3M70.6 90.7L72.6 88.8M69.5 93.9L72.2 92.2M72.2 92.2L73.6 90.4M72.2 92.2L74.4 92.2M65.7 102.4L63.2 98.5M63.2 98.5L60.4 96.0M63.2 98.5L63.0 95.5M73.2 94.4L73.3 90.1M73.3 90.1L72.5 86.7M73.3 90.1L74.6 87.1M73.2 94.4L76.0 91.7M76.0 91.7L76.4 89.3M76.0 91.7L78.4 90.6M75.4 98.0L78.6 95.8M78.6 95.8L79.7 93.4M78.6 95.8L80.9 94.6M75.4 98.0L78.5 98.6M78.5 98.6L81.0 98.9M78.5 98.6L80.6 99.4M73.2 99.0L76.3 99.7M67.3 103.3L66.9 98.3M66.9 98.3L64.4 95.7M66.9 98.3L68.8 95.8M69.7 103.4L72.0 99.2M72.0 99.2L72.1 95.7M72.0 99.2L74.3 97.4M69.7 103.4L73.9 102.4M73.9 102.4L76.5 101.4M73.9 102.4L76.8 102.9M66.0 106.2L66.7 101.9M63.7 95.1L61.7 92.9M61.7 92.9L59.6 92.0M61.7 92.9L61.4 91.1M63.7 95.1L62.8 92.5M62.8 92.5L61.4 91.5M62.8 92.5L63.1 90.6M67.7 95.1L67.2 92.3M67.2 92.3L66.5 90.4M67.2 92.3L68.0 90.3M67.7 95.1L69.6 93.1M69.6 93.1L70.0 91.1M69.6 93.1L71.7 92.4M65.7 100.4L63.7 96.9M63.7 96.9L61.1 95.6M63.7 96.9L62.9 94.0M75.9 98.5L77.1 95.6M77.1 95.6L77.7 93.2M77.1 95.6L79.1 94.2M75.9 98.5L78.8 96.3M78.8 96.3L80.5 93.9M78.8 96.3L81.1 95.7M78.0 101.0L80.3 98.2M80.3 98.2L81.1 95.6M80.3 98.2L82.1 96.1M78.0 101.0L82.7 100.6M82.7 100.6L86.0 98.7M82.7 100.6L85.4 101.7M76.6 101.2L79.0 98.2M39.7 114.9L37.1 118.3M37.1 118.3L36.9 121.3M37.1 118.3L34.8 120.1M39.7 114.9L35.7 116.3M35.7 116.3L33.4 117.9M35.7 116.3L32.5 116.2M38.4 108.1L33.6 107.1M33.6 107.1L30.4 107.1M33.6 107.1L30.8 106.0M38.4 108.1L36.2 103.4M36.2 103.4L33.2 101.5M36.2 103.4L36.3 99.9M49.1 110.1L44.4 107.9M44.4 107.9L40.4 107.9M44.4 107.9L42.5 105.4M43.7 102.4L40.2 101.6M40.2 101.6L37.8 102.1M40.2 101.6L38.0 99.9M43.7 102.4L41.5 100.3M41.5 100.3L39.7 98.8M41.5 100.3L40.6 98.6M47.6 99.1L45.4 95.5M45.4 95.5L43.5 93.2M45.4 95.5L44.5 93.1M47.6 99.1L48.8 95.5M48.8 95.5L48.5 92.6M48.8 95.5L50.6 93.5M47.7 101.3L49.9 98.8M49.8 106.7L51.2 102.4M51.2 102.4L51.2 98.8M51.2 102.4L53.2 100.0M56.3 106.5L54.3 102.0M54.3 102.0L51.7 100.3M54.3 102.0L54.8 98.5M56.3 106.5L56.6 102.0M56.6 102.0L54.9 99.5M56.6 102.0L58.9 99.4M71.2 93.4L69.1 90.6M69.1 90.6L66.7 89.9M69.1 90.6L67.9 88.0M71.2 93.4L71.1 90.2M71.1 90.2L70.4 88.2M71.1 90.2L72.4 88.1M78.4 93.6L79.3 88.5M79.3 88.5L78.5 85.4M79.3 88.5L81.4 85.4M78.4 93.6L82.2 91.6M82.2 91.6L83.9 89.4M82.2 91.6L85.2 91.6M76.4 95.4L77.0 91.3M72.9 102.2L76.9 99.0M76.9 99.0L79.2 96.4M76.9 99.0L80.3 98.1M79.2 97.6L79.8 94.7M79.8 94.7L79.7 92.4M79.8 94.7L80.8 92.9M79.2 97.6L81.6 95.3M81.6 95.3L82.6 93.4M81.6 95.3L83.6 94.6M82.7 99.5L84.9 97.0M84.9 97.0L85.8 94.5M84.9 97.0L86.8 95.6M82.7 99.5L87.0 98.8M87.0 98.8L89.1 96.8M87.0 98.8L90.5 98.5M80.0 100.6L81.0 97.3M75.5 103.2L79.8 104.3M79.8 104.3L82.5 104.0M79.8 104.3L81.8 106.0M62.8 93.6L59.6 92.1M59.6 92.1L57.1 92.3M59.6 92.1L57.7 90.8M62.8 93.6L62.1 90.3M62.1 90.3L60.6 88.3M62.1 90.3L62.1 88.0M67.2 93.3L67.2 90.5M67.2 90.5L66.2 88.7M67.2 90.5L68.5 88.9M67.2 93.3L69.9 91.0M69.9 91.0L71.5 89.0M69.9 91.0L72.7 90.4M66.1 96.1L64.7 93.6M65.9 91.4L64.0 88.6M64.0 88.6L62.2 87.1M64.0 88.6L63.3 86.0M65.9 91.4L67.3 88.2M67.3 88.2L67.0 85.7M67.3 88.2L69.4 86.3M66.4 93.1L68.0 90.3M69.9 90.9L69.3 86.7M69.3 86.7L67.9 84.2M69.3 86.7L70.6 84.0M69.9 90.9L73.7 87.9M73.7 87.9L74.6 84.6M73.7 87.9L77.0 87.7M67.1 98.6L64.8 94.0M64.8 94.0L61.4 92.1M64.8 94.0L64.8 90.0M72.0 102.5L73.6 98.6M73.6 98.6L72.8 95.6M73.6 98.6L75.4 95.7M72.0 102.5L76.1 101.4M76.1 101.4L77.9 99.4M76.1 101.4L78.5 102.3M67.0 93.2L64.9 90.8M64.9 90.8L62.5 90.5M64.9 90.8L63.6 88.7M67.0 93.2L67.1 89.2M67.1 89.2L65.5 86.9M67.1 89.2L68.6 87.3M68.1 96.1L64.8 95.3M68.6 93.2L67.0 90.1M67.0 90.1L64.9 89.1M67.0 90.1L67.2 87.9M68.6 93.2L69.2 89.3M69.2 89.3L68.4 86.4M69.2 89.3L70.8 86.8M68.7 95.8L70.7 93.3M69.1 99.5L66.3 96.3M66.3 96.3L63.2 95.3M66.3 96.3L65.2 93.5M77.1 94.0L78.2 90.0M78.2 90.0L77.3 87.6M78.2 90.0L80.4 87.7M77.1 94.0L80.5 92.0M80.5 92.0L82.8 89.8M80.5 92.0L83.6 91.9M76.3 95.7L79.7 94.9M79.5 96.6L81.9 94.1M81.9 94.1L82.8 91.8M81.9 94.1L84.4 93.4M79.5 96.6L83.4 95.3M83.4 95.3L85.4 93.9M83.4 95.3L86.6 95.0M77.1 97.8L79.0 95.0M74.7 105.1L76.9 100.1M76.9 100.1L76.5 96.1M76.9 100.1L79.8 96.9M74.7 105.1L79.3 105.5M79.3 105.5L82.3 103.3M79.3 105.5L82.3 107.0M72.1 106.6L76.6 106.5M61.7 98.8L58.0 97.2M58.0 97.2L55.6 97.1M58.0 97.2L56.2 95.5M61.7 98.8L59.8 95.3M59.8 95.3L57.8 93.6M59.8 95.3L60.4 92.5M64.1 100.2L62.7 97.0M66.1 95.8L63.9 92.7M63.9 92.7L61.9 91.4M63.9 92.7L64.1 89.6M66.1 95.8L66.0 92.1M66.0 92.1L65.3 89.5M66.0 92.1L66.6 89.9M66.3 99.5L63.1 97.4M69.4 95.3L66.8 92.8M66.8 92.8L64.0 92.4M66.8 92.8L64.7 90.8M69.4 95.3L69.6 91.6M69.6 91.6L68.3 88.8M69.6 91.6L71.8 89.5M75.2 97.0L77.0 94.0M77.0 94.0L76.5 91.5M77.0 94.0L79.4 92.8M75.2 97.0L79.5 96.6M79.5 96.6L82.4 95.7M79.5 96.6L82.2 97.9M72.6 98.9L72.7 95.3M72.7 104.9L73.1 99.7M73.1 99.7L71.5 95.8M73.1 99.7L74.9 96.8M72.7 104.9L76.4 100.7M76.4 100.7L78.3 96.7M76.4 100.7L80.2 99.3M71.9 107.7L69.8 103.8M54.3 107.3L50.7 109.4M50.7 109.4L48.7 111.9M50.7 109.4L48.1 109.7M54.3 107.3L49.8 105.5M49.8 105.5L46.5 105.2M49.8 105.5L47.9 102.9M57.8 102.5L55.7 99.8M55.7 99.8L53.9 98.7M55.7 99.8L55.4 97.4M57.8 102.5L57.6 99.5M57.6 99.5L56.7 97.7M57.6 99.5L58.9 97.8M61.8 96.9L58.1 95.2M58.1 95.2L55.2 95.4M58.1 95.2L55.9 93.0M61.8 96.9L61.7 92.2M61.7 92.2L60.9 89.1M61.7 92.2L63.8 89.8M62.9 99.0L64.3 95.5M64.8 96.6L63.6 93.5M63.6 93.5L61.9 92.0M63.6 93.5L64.0 91.5M64.8 96.6L66.9 93.1M66.9 93.1L67.0 90.4M66.9 93.1L69.8 91.8M64.7 99.2L67.6 97.2M65.1 103.6L60.5 101.3M60.5 101.3L56.6 101.7M60.5 101.3L57.8 98.3M70.8 96.8L67.4 95.8M67.4 95.8L65.2 96.1M67.4 95.8L65.9 94.1M70.8 96.8L70.4 93.0M70.4 93.0L69.9 90.4M70.4 93.0L71.1 90.3M71.9 98.1L71.4 94.9M75.8 96.4L75.9 92.7M75.9 92.7L75.7 89.8M75.9 92.7L76.8 90.4M75.8 96.4L78.4 93.6M78.4 93.6L79.3 90.7M78.4 93.6L81.1 92.3M75.0 98.5L77.9 97.8M74.3 104.0L77.3 100.7M77.3 100.7L78.8 98.2M77.3 100.7L80.6 100.1M76.7 95.2L75.0 92.0M75.0 92.0L72.6 90.3M75.0 92.0L74.9 89.6M76.7 95.2L78.1 91.9M78.1 91.9L78.2 89.0M78.1 91.9L79.6 89.7M76.9 96.4L74.4 94.3M81.5 96.6L83.3 93.8M83.3 93.8L83.4 91.6M83.3 93.8L85.2 92.8M81.5 96.6L85.6 95.4M85.6 95.4L87.8 92.8M85.6 95.4L88.4 95.6M80.5 97.4L84.0 97.4M76.6 102.3L74.6 97.6M74.6 97.6L72.9 95.0M74.6 97.6L74.9 94.4M70.8 104.8L66.5 102.8M66.5 102.8L63.6 102.3M66.5 102.8L64.5 100.2M70.8 104.8L70.4 100.0M70.4 100.0L68.0 97.7M70.4 100.0L71.3 96.7M72.0 106.9L72.6 102.6M82.6 96.9L79.1 93.0M79.1 93.0L75.1 91.6M75.1 91.6L72.3 92.3M75.1 91.6L72.8 89.8M79.1 93.0L77.8 89.2M77.8 89.2L76.1 87.3M77.8 89.2L78.0 86.1M80.7 94.8L77.4 93.8M82.6 96.9L84.2 91.8M84.2 91.8L82.2 88.0M82.2 88.0L79.8 86.9M82.2 88.0L83.1 84.9M84.2 91.8L86.3 89.0M86.3 89.0L86.8 86.9M86.3 89.0L88.0 87.4M89.0 98.3L89.6 91.9M89.6 91.9L88.4 87.3M88.4 87.3L85.7 84.9M88.4 87.3L89.1 84.5M89.6 91.9L92.3 88.6M92.3 88.6L93.4 85.8M92.3 88.6L94.8 87.2M89.3 95.4L93.0 93.5M89.0 98.3L94.2 95.2M94.2 95.2L96.9 92.3M96.9 92.3L98.7 90.0M96.9 92.3L99.3 91.2M94.2 95.2L98.6 95.1M98.6 95.1L101.0 93.6M98.6 95.1L101.5 96.1M79.7 101.3L77.7 97.2M77.7 97.2L75.6 95.1M77.7 97.2L78.2 94.3M79.7 101.3L79.4 95.9M79.4 95.9L77.8 93.0M79.4 95.9L79.7 91.6M80.3 103.1L82.6 98.9M76.2 96.9L72.2 93.4M72.2 93.4L68.0 92.2M68.0 92.2L64.8 92.5M68.0 92.2L64.7 91.1M72.2 93.4L72.0 89.4M72.0 89.4L70.0 87.5M72.0 89.4L72.2 87.0M76.2 96.9L77.8 92.7M77.8 92.7L77.9 89.0M77.9 89.0L76.4 87.1M77.9 89.0L78.8 86.9M77.8 92.7L79.4 90.3M79.4 90.3L79.4 88.6M79.4 90.3L80.9 89.3M77.5 93.6L80.4 93.0M77.2 99.3L79.5 95.3M79.5 95.3L79.9 91.8M79.5 95.3L82.9 93.7M80.2 94.6L79.6 88.7M79.6 88.7L76.7 86.6M76.7 86.6L74.2 85.2M76.7 86.6L75.5 84.5M79.6 88.7L81.1 85.1M81.1 85.1L81.2 82.3M81.1 85.1L83.0 83.3M79.8 91.3L76.5 89.4M80.2 94.6L82.1 88.8M82.1 88.8L83.0 84.9M83.0 84.9L82.0 82.1M83.0 84.9L84.3 82.1M82.1 88.8L85.6 85.4M85.6 85.4L86.7 82.3M85.6 85.4L88.9 84.1M81.0 92.0L79.4 88.4M79.6 98.9L84.1 95.2M84.1 95.2L85.3 91.1M84.1 95.2L87.8 93.6M68.6 101.0L64.4 99.8M64.4 99.8L61.2 100.9M61.2 100.9L59.5 102.7M61.2 100.9L59.1 101.3M64.4 99.8L62.4 98.0M62.4 98.0L60.9 97.3M62.4 98.0L61.3 96.4M68.6 101.0L65.5 97.0M65.5 97.0L62.4 94.8M62.4 94.8L59.7 94.4M62.4 94.8L61.7 92.6M65.5 97.0L64.5 93.4M64.5 93.4L62.8 91.3M64.5 93.4L65.0 91.2M66.3 98.0L67.0 94.8M72.7 103.2L71.9 98.7M71.9 98.7L70.6 95.9M71.9 98.7L72.7 95.2M74.2 96.6L72.6 90.4M72.6 90.4L69.6 87.3M69.6 87.3L66.8 86.6M69.6 87.3L69.2 83.7M72.6 90.4L73.6 85.7M73.6 85.7L73.1 82.0M73.6 85.7L75.3 82.8M74.2 96.6L76.0 91.9M76.0 91.9L76.3 88.5M76.3 88.5L75.6 86.6M76.3 88.5L77.8 86.9M76.0 91.9L77.6 89.2M77.6 89.2L78.2 87.0M77.6 89.2L80.0 88.6M74.8 94.9L77.9 93.7M69.7 103.9L63.8 103.2M63.8 103.2L59.3 105.1M63.8 103.2L59.9 101.3M69.7 103.9L66.6 100.7M66.6 100.7L63.3 99.3M66.6 100.7L65.3 98.3M79.1 88.9L75.2 86.8M75.2 86.8L71.7 87.1M75.2 86.8L73.5 84.6M79.1 88.9L79.2 84.1M79.2 84.1L77.2 81.1M79.2 84.1L81.1 80.9M80.9 92.4L82.5 88.5M82.3 88.8L81.7 84.1M81.7 84.1L79.1 81.3M81.7 84.1L83.2 81.4M82.3 88.8L84.2 85.5M84.2 85.5L84.7 82.4M84.2 85.5L86.0 83.9M82.2 91.5L79.4 89.0M83.1 99.4L86.5 95.2M86.5 95.2L88.1 91.7M86.5 95.2L90.0 93.8M87.3 92.4L86.5 89.2M86.5 89.2L85.1 87.3M86.5 89.2L87.1 86.9M87.3 92.4L89.5 90.6M89.5 90.6L90.5 88.6M89.5 90.6L91.8 89.8M89.7 94.4L91.0 92.3M91.0 92.3L91.6 90.9M91.0 92.3L92.4 90.9M89.7 94.4L92.5 93.7M92.5 93.7L94.0 92.7M92.5 93.7L94.6 93.9M88.7 95.3L89.2 92.8M85.6 99.4L84.1 95.5M84.1 95.5L81.6 93.7M84.1 95.5L84.4 93.0M78.4 103.1L73.3 101.7M73.3 101.7L69.9 102.5M73.3 101.7L70.8 99.8M78.4 103.1L75.9 98.2M75.9 98.2L71.9 96.4M75.9 98.2L75.7 94.1M80.8 105.2L76.3 104.7M80.2 91.1L77.2 88.9M77.2 88.9L75.0 87.6M77.2 88.9L76.7 86.0M80.2 91.1L79.2 87.0M79.2 87.0L76.4 85.2M79.2 87.0L79.2 83.6M81.0 92.4L81.9 88.8M84.7 90.8L84.9 87.3M84.9 87.3L84.4 85.1M84.9 87.3L85.5 85.0M84.7 90.8L86.2 87.1M86.2 87.1L86.0 84.5M86.2 87.1L88.3 85.1M83.8 93.7L87.1 92.5M87.8 90.6L85.7 86.7M85.7 86.7L83.4 84.9M85.7 86.7L86.0 83.3M87.8 90.6L88.8 86.4M88.8 86.4L87.9 83.2M88.8 86.4L90.4 84.1M92.9 92.6L93.9 88.4M93.9 88.4L94.3 85.0M93.9 88.4L96.0 86.4M92.9 92.6L96.5 92.5M96.5 92.5L98.0 91.0M96.5 92.5L99.3 92.7M91.5 93.7L95.3 93.7M82.1 100.0L79.1 96.9M79.1 96.9L76.8 95.0M79.1 96.9L77.2 93.8M82.1 100.0L81.9 95.5M81.9 95.5L79.9 93.0M81.9 95.5L83.1 92.7M83.4 103.0L79.2 101.3M63.4 102.6L59.2 102.1M59.2 102.1L56.0 102.9M59.2 102.1L56.5 100.1M63.4 102.6L59.6 100.9M59.6 100.9L57.1 100.8M59.6 100.9L57.6 98.8M64.9 100.3L61.6 98.3M61.6 98.3L58.8 98.2M61.6 98.3L60.0 96.5M64.9 100.3L63.5 97.2M63.5 97.2L61.7 95.8M63.5 97.2L63.6 95.1M69.6 97.4L67.0 96.8M67.0 96.8L65.0 97.0M67.0 96.8L65.1 95.6M69.6 97.4L67.7 94.6M67.7 94.6L65.3 94.1M67.7 94.6L67.1 92.7M73.4 95.4L72.8 92.5M72.8 92.5L71.7 90.5M72.8 92.5L73.2 90.2M73.4 95.4L74.1 92.3M74.1 92.3L73.0 90.3M74.1 92.3L75.7 90.6M73.2 98.4L75.7 96.9M102.8 97.5L102.8 93.7M102.8 93.7L101.4 91.0M102.8 93.7L103.8 91.3M102.8 97.5L105.2 94.4M105.2 94.4L105.3 91.6M105.2 94.4L107.3 92.7M101.8 100.8L104.7 99.1M106.2 99.5L108.2 96.3M108.2 96.3L108.2 93.7M108.2 96.3L110.6 94.6M106.2 99.5L110.4 98.4M110.4 98.4L113.1 97.4M110.4 98.4L113.6 99.9M104.3 100.6L107.7 101.8M98.1 106.3L97.1 101.4M97.1 101.4L95.7 98.3M97.1 101.4L97.6 98.5M108.5 101.9L108.8 97.0M108.8 97.0L107.5 94.2M108.8 97.0L110.1 94.1M108.5 101.9L111.2 99.3M111.2 99.3L111.9 96.8M111.2 99.3L114.2 99.0M107.2 103.4L107.1 99.4M110.4 107.5L114.0 107.1M114.0 107.1L115.8 105.5M114.0 107.1L115.8 108.2M110.4 107.5L113.5 109.5M113.5 109.5L116.0 109.6M113.5 109.5L114.8 111.3M107.3 106.9L109.4 110.2M102.5 106.9L107.5 108.7M107.5 108.7L111.0 108.1M107.5 108.7L111.3 110.5M86.3 91.7L83.0 89.7M83.0 89.7L80.5 89.4M83.0 89.7L81.8 87.6M86.3 91.7L86.7 88.2M86.7 88.2L85.8 85.8M86.7 88.2L88.7 86.5M86.7 92.8L87.7 89.3M89.8 91.8L90.0 87.8M90.0 87.8L88.8 85.7M90.0 87.8L90.4 85.3M89.8 91.8L91.9 88.7M91.9 88.7L92.8 86.6M91.9 88.7L94.2 87.4M89.5 101.9L91.2 96.6M91.2 96.6L90.4 92.2M91.2 96.6L93.8 94.3M98.7 94.3L98.4 90.8M98.4 90.8L97.3 88.3M98.4 90.8L99.5 89.0M98.7 94.3L101.2 91.7M101.2 91.7L102.0 89.6M101.2 91.7L103.5 91.2M102.7 98.5L106.5 97.5M106.5 97.5L108.7 95.2M106.5 97.5L108.7 98.7M102.7 98.5L106.9 100.0M106.9 100.0L109.9 99.7M106.9 100.0L108.7 102.0M101.0 98.7L103.9 101.5M84.4 105.6L79.9 103.8M79.9 103.8L76.7 103.7M79.9 103.8L77.4 101.5M84.4 105.6L82.0 101.6M82.0 101.6L78.6 99.9M82.0 101.6L80.6 98.8M86.1 107.1L81.6 107.3M77.1 94.9L73.2 94.4M73.2 94.4L70.8 95.5M73.2 94.4L70.9 92.8M77.1 94.9L75.0 90.9M75.0 90.9L72.5 89.5M75.0 90.9L74.5 87.5M79.9 97.1L76.0 96.8M83.1 93.6L82.2 89.6M82.2 89.6L80.7 87.2M82.2 89.6L82.4 86.4M83.1 93.6L85.3 90.9M85.3 90.9L86.0 88.4M85.3 90.9L87.9 90.0M82.8 94.8L86.0 93.5M83.8 102.9L85.2 98.0M85.2 98.0L84.4 94.3M85.2 98.0L87.8 95.3M78.4 95.2L74.3 94.6M74.3 94.6L71.2 95.1M74.3 94.6L72.2 92.6M78.4 95.2L76.2 92.6M76.2 92.6L74.3 91.3M76.2 92.6L75.2 90.8M83.7 93.3L83.1 89.9M83.1 89.9L81.5 87.8M83.1 89.9L83.8 87.3M83.7 93.3L85.9 89.9M85.9 89.9L85.6 87.2M85.9 89.9L88.1 88.1M83.2 96.6L86.2 95.1M83.6 100.8L85.1 96.0M85.1 96.0L84.6 92.7M85.1 96.0L87.8 93.1M81.7 108.1L76.7 108.7M76.7 108.7L73.8 110.7M76.7 108.7L73.7 106.8M81.7 108.1L78.2 105.0M78.2 105.0L75.0 104.1M78.2 105.0L76.9 101.6M79.8 91.0L75.4 90.4M75.4 90.4L72.7 91.4M75.4 90.4L72.7 88.8M79.8 91.0L77.3 87.5M77.3 87.5L74.2 85.9M77.3 87.5L77.9 84.5M84.3 88.9L80.3 87.0M80.3 87.0L76.7 87.4M80.3 87.0L78.5 85.0M84.3 88.9L84.1 84.5M84.1 84.5L82.1 81.7M84.1 84.5L85.3 81.9M85.5 92.7L82.1 91.1M89.4 98.7L90.7 92.9M90.7 92.9L90.6 88.2M90.7 92.9L92.7 88.7M88.1 86.5L83.8 83.2M83.8 83.2L80.2 83.0M83.8 83.2L82.0 79.6M88.1 86.5L87.9 81.5M87.9 81.5L86.4 78.6M87.9 81.5L89.5 78.8M89.3 88.6L89.7 83.9M95.0 87.3L94.9 83.3M94.9 83.3L94.1 80.1M94.9 83.3L95.3 80.7M95.0 87.3L99.2 85.0M99.2 85.0L102.2 83.1M99.2 85.0L102.3 84.4M93.3 90.1L93.3 85.9M86.9 101.6L81.1 100.9M81.1 100.9L77.1 101.8M81.1 100.9L77.3 98.5M86.9 101.6L84.2 96.2M84.2 96.2L81.1 92.8M84.2 96.2L84.7 92.1M92.3 87.3L89.3 84.2M89.3 84.2L86.4 82.2M89.3 84.2L88.3 81.6M92.3 87.3L91.0 83.0M91.0 83.0L89.5 80.7M91.0 83.0L91.2 80.0M93.2 89.3L94.2 85.7M98.4 88.1L98.5 84.3M98.5 84.3L97.5 81.9M98.5 84.3L99.8 82.2M98.4 88.1L101.9 85.8M101.9 85.8L103.9 83.9M101.9 85.8L104.9 85.3M96.2 90.8L95.6 87.2M99.2 87.7L98.3 83.8M98.3 83.8L97.3 80.7M98.3 83.8L99.2 80.7M99.2 87.7L101.3 84.4M101.3 84.4L101.9 82.1M101.3 84.4L103.4 82.3M99.4 89.7L96.9 86.8M104.9 91.9L108.1 89.2M108.1 89.2L109.3 86.6M108.1 89.2L110.9 89.4M104.9 91.9L108.1 93.2M108.1 93.2L110.5 93.4M108.1 93.2L109.7 94.6M102.6 92.6L104.8 89.9M97.1 98.3L95.0 93.0M95.0 93.0L91.9 90.6M95.0 93.0L95.4 89.2M81.4 92.3L77.2 91.7M77.2 91.7L74.6 91.8M77.2 91.7L74.6 90.2M81.4 92.3L78.8 89.6M78.8 89.6L76.8 88.1M78.8 89.6L77.9 87.4M82.9 93.1L79.1 93.2M84.8 89.7L81.0 87.4M81.0 87.4L77.8 86.7M81.0 87.4L78.6 85.3M84.8 89.7L85.5 85.5M85.5 85.5L83.9 82.5M85.5 85.5L87.3 82.6M85.9 92.7L86.8 89.2M93.5 88.6L92.2 84.8M92.2 84.8L90.1 83.0M92.2 84.8L91.3 82.1M93.5 88.6L94.6 85.2M94.6 85.2L94.2 82.7M94.6 85.2L95.8 83.3M94.1 92.1L96.3 89.3M99.1 91.1L101.0 87.5M101.0 87.5L101.5 84.4M101.0 87.5L103.7 86.4M99.1 91.1L103.2 89.2M103.2 89.2L105.4 86.7M103.2 89.2L106.1 88.5M98.1 91.7L101.7 91.6M94.3 99.5L92.3 95.3M92.3 95.3L89.5 92.7M92.3 95.3L92.3 91.7M94.3 99.5L95.9 95.0M95.9 95.0L95.2 91.5M95.9 95.0L98.2 92.6M93.9 101.3L92.1 96.6M112.0 98.6L110.0 95.2M110.0 95.2L107.2 94.4M110.0 95.2L110.3 92.8M112.0 98.6L114.1 94.9M114.1 94.9L113.2 91.8M114.1 94.9L116.6 93.8M112.2 100.1L109.1 98.5M117.8 101.3L119.8 98.1M119.8 98.1L120.3 95.4M119.8 98.1L122.3 96.4M117.8 101.3L121.7 100.7M121.7 100.7L124.3 99.7M121.7 100.7L124.7 101.5M116.7 101.8L120.5 102.2M111.2 106.2L116.1 104.6M116.1 104.6L118.9 102.1M116.1 104.6L119.3 103.7M119.7 105.3L121.3 102.1M121.3 102.1L121.4 99.6M121.3 102.1L123.4 100.8M119.7 105.3L123.1 105.1M123.1 105.1L125.0 103.9M123.1 105.1L125.7 105.7M119.7 107.4L122.0 105.5M122.0 105.5L122.9 103.3M122.0 105.5L123.9 105.5M119.7 107.4L123.0 108.9M123.0 108.9L125.9 108.9M123.0 108.9L124.6 110.7M118.7 107.6L120.8 105.5M113.2 109.1L116.9 111.7M116.9 111.7L120.0 111.8M116.9 111.7L118.6 114.8M104.5 106.3L102.2 101.1M102.2 101.1L99.8 98.4M102.2 101.1L101.7 97.3M104.5 106.3L105.8 101.6M105.8 101.6L105.1 98.3M105.8 101.6L108.5 98.6M104.5 109.6L100.8 106.9M86.3 98.2L83.1 97.4M83.1 97.4L80.8 98.2M83.1 97.4L81.1 95.7M86.3 98.2L85.3 94.4M85.3 94.4L83.7 91.7M85.3 94.4L86.1 92.1M87.5 99.1L86.4 96.1M89.8 96.7L88.2 93.4M88.2 93.4L86.5 91.3M88.2 93.4L88.7 91.0M89.8 96.7L90.8 94.0M90.8 94.0L91.3 91.9M90.8 94.0L92.1 92.8M90.7 95.2L88.3 92.3M88.3 92.3L85.4 92.1M88.3 92.3L88.0 89.6M90.7 95.2L91.1 91.7M91.1 91.7L90.5 89.6M91.1 91.7L92.3 89.5M91.3 96.1L88.2 95.7M93.2 94.1L91.1 90.5M91.1 90.5L88.6 88.7M91.1 90.5L91.2 87.7M93.2 94.1L93.7 90.4M93.7 90.4L92.4 87.6M93.7 90.4L95.0 88.1M91.1 109.5L85.8 109.7M85.8 109.7L82.2 112.1M85.8 109.7L82.6 107.8M91.1 109.5L86.7 106.0M86.7 106.0L83.0 106.0M86.7 106.0L84.6 102.1M93.4 110.7L90.8 106.8M102.5 93.8L100.1 91.1M100.1 91.1L97.8 90.3M100.1 91.1L99.4 88.4M102.5 93.8L102.2 89.5M102.2 89.5L100.9 86.8M102.2 89.5L103.3 86.5M103.3 95.9L100.5 93.7M108.4 94.5L109.2 90.5M109.2 90.5L108.2 87.6M109.2 90.5L111.0 88.7M108.4 94.5L112.3 92.6M112.3 92.6L114.7 90.8M112.3 92.6L115.7 93.0M107.5 95.4L107.4 91.6M107.1 94.1L105.7 91.2M105.7 91.2L103.8 89.9M105.7 91.2L105.2 89.2M107.1 94.1L107.6 90.7M107.6 90.7L106.5 88.6M107.6 90.7L108.2 88.4M106.9 96.4L104.9 93.6M109.3 95.2L110.0 91.4M110.0 91.4L110.2 89.0M110.0 91.4L111.8 88.8M109.3 95.2L112.0 93.9M112.0 93.9L113.4 92.1M112.0 93.9L114.0 94.0M108.2 97.0L111.3 96.3M105.5 102.3L104.7 97.1M104.7 97.1L104.0 94.0M104.7 97.1L104.9 93.5M98.8 105.9L95.8 101.6M95.8 101.6L92.4 99.5M95.8 101.6L95.3 98.1M98.8 105.9L97.7 101.6M97.7 101.6L96.2 99.4M97.7 101.6L98.8 98.5M99.5 108.0L95.5 105.7M87.6 95.4L82.7 96.2M82.7 96.2L79.9 98.0M82.7 96.2L79.9 94.4M87.6 95.4L84.2 91.4M84.2 91.4L80.6 90.2M84.2 91.4L82.8 87.6M89.0 95.9L85.2 97.8M91.0 91.7L87.4 88.9M87.4 88.9L84.1 87.7M87.4 88.9L85.9 85.6M91.0 91.7L90.1 87.7M90.1 87.7L87.9 86.3M90.1 87.7L90.5 85.2M91.6 93.1L93.0 89.1M104.9 90.6L104.6 86.3M104.6 86.3L102.5 83.9M104.6 86.3L106.1 83.3M104.9 90.6L108.5 88.3M108.5 88.3L109.6 85.9M108.5 88.3L111.6 89.0M104.5 91.7L102.9 88.6M105.7 90.7L105.3 86.5M105.3 86.5L104.2 83.7M105.3 86.5L105.1 83.1M105.7 90.7L109.5 88.2M109.5 88.2L110.9 85.3M109.5 88.2L112.2 88.6M104.9 92.0L105.0 88.4M101.2 99.4L106.0 97.4M106.0 97.4L108.4 94.8M106.0 97.4L109.9 97.5M102.5 98.5L102.6 93.2M102.6 93.2L101.0 89.8M102.6 93.2L104.6 89.7M102.5 98.5L105.5 93.9M105.5 93.9L106.7 90.8M105.5 93.9L107.8 91.5M86.1 100.5L83.1 102.0M83.1 102.0L81.8 104.2M83.1 102.0L81.1 102.0M86.1 100.5L83.1 98.0M83.1 98.0L80.3 97.9M83.1 98.0L82.3 95.3M89.9 96.0L87.2 94.2M87.2 94.2L85.0 93.7M87.2 94.2L85.6 92.3M89.9 96.0L90.6 92.6M90.6 92.6L90.2 90.2M90.6 92.6L92.3 91.2M90.2 97.0L92.0 94.7M90.4 94.3L87.2 93.4M87.2 93.4L85.1 93.7M87.2 93.4L85.4 92.6M90.4 94.3L87.9 91.6M87.9 91.6L85.3 91.1M87.9 91.6L87.1 89.0M91.7 95.6L91.8 92.6M93.9 92.5L92.7 89.7M92.7 89.7L90.7 88.4M92.7 89.7L92.6 87.3M93.9 92.5L95.6 89.4M95.6 89.4L95.8 87.0M95.6 89.4L97.4 87.1M93.8 95.8L91.4 93.7M95.3 100.6L90.7 99.1M90.7 99.1L87.6 99.5M90.7 99.1L87.3 97.2M97.2 91.5L93.9 91.0M93.9 91.0L91.9 92.1M93.9 91.0L91.6 89.7M97.2 91.5L96.0 88.9M96.0 88.9L94.7 87.5M96.0 88.9L96.4 86.9M101.6 89.7L100.8 85.7M100.8 85.7L98.2 83.8M100.8 85.7L100.9 83.1M101.6 89.7L104.1 86.9M104.1 86.9L105.4 84.6M104.1 86.9L106.6 85.8M100.9 92.4L98.7 89.5M100.8 97.3L103.5 93.0M103.5 93.0L102.8 89.7M103.5 93.0L107.0 91.9M106.2 89.6L104.2 86.9M104.2 86.9L102.4 85.8M104.2 86.9L104.2 84.7M106.2 89.6L108.6 86.2M108.6 86.2L108.1 83.5M108.6 86.2L110.8 84.5M106.1 91.9L109.0 89.9M110.7 91.8L113.8 88.5M113.8 88.5L114.4 85.7M113.8 88.5L116.5 87.1M110.7 91.8L115.3 91.9M115.3 91.9L118.3 90.8M115.3 91.9L118.5 92.8M107.4 94.0L108.0 90.3M98.3 99.7L94.4 97.5M94.4 97.5L91.3 97.6M94.4 97.5L92.1 94.9M98.3 99.7L97.5 94.4M97.5 94.4L95.1 91.1M97.5 94.4L97.7 91.0M99.4 101.3L100.3 96.6M114.1 91.9L112.2 88.2M112.2 88.2L110.3 86.1M112.2 88.2L111.9 85.2M114.1 91.9L115.1 87.7M115.1 87.7L115.2 84.8M115.1 87.7L117.2 84.9M114.4 95.0L111.7 92.5M117.3 93.8L117.4 90.3M117.4 90.3L116.0 88.5M117.4 90.3L118.6 88.0M117.3 93.8L120.1 91.7M120.1 91.7L120.9 89.6M120.1 91.7L122.7 91.5M113.6 102.6L117.7 100.0M117.7 100.0L119.8 97.2M117.7 100.0L121.2 98.7M121.2 93.9L123.0 89.8M123.0 89.8L122.4 86.6M123.0 89.8L125.8 87.7M121.2 93.9L123.8 89.9M123.8 89.9L123.9 86.1M123.8 89.9L126.9 88.3M122.7 96.6L124.6 93.5M124.6 93.5L124.9 91.0M124.6 93.5L127.0 91.9M122.7 96.6L126.5 97.2M126.5 97.2L129.1 96.3M126.5 97.2L128.3 99.1M116.0 101.5L121.1 101.5M121.1 101.5L124.8 99.9M121.1 101.5L124.4 102.5M108.1 103.9L105.7 99.3M105.7 99.3L103.0 97.7M105.7 99.3L105.9 95.7M108.1 103.9L109.6 98.3M109.6 98.3L109.3 94.2M109.6 98.3L111.9 94.4M99.2 90.1L94.6 87.0M94.6 87.0L90.4 86.3M94.6 87.0L93.0 84.0M99.2 90.1L98.9 84.6M98.9 84.6L97.3 81.0M98.9 84.6L100.1 81.4M100.4 91.5L95.7 90.4M103.9 88.7L102.1 84.2M102.1 84.2L100.0 81.1M102.1 84.2L102.5 81.0M103.9 88.7L107.5 84.4M107.5 84.4L108.8 81.3M107.5 84.4L111.7 82.8M103.9 92.3L106.7 88.7M105.9 99.4L100.4 96.8M100.4 96.8L96.3 96.1M100.4 96.8L97.3 93.5M115.9 91.6L115.9 87.5M115.9 87.5L114.9 85.0M115.9 87.5L117.6 85.0M115.9 91.6L118.7 89.3M118.7 89.3L120.5 87.5M118.7 89.3L121.3 89.6M115.1 93.8L114.0 90.2M118.3 93.2L120.4 89.0M120.4 89.0L120.0 85.8M120.4 89.0L123.0 86.7M118.3 93.2L122.5 93.4M122.5 93.4L125.7 92.5M122.5 93.4L124.9 94.9M116.2 95.0L119.9 96.0M112.1 99.2L117.9 98.5M117.9 98.5L121.2 96.2M117.9 98.5L121.8 98.8M98.4 91.7L94.7 88.1M94.7 88.1L90.9 88.2M94.7 88.1L92.8 84.9M98.4 91.7L96.7 86.7M96.7 86.7L93.6 84.6M96.7 86.7L97.1 82.4M100.9 95.0L101.2 90.7M100.6 92.0L97.7 89.5M97.7 89.5L94.7 88.7M97.7 89.5L96.9 87.1M100.6 92.0L100.6 87.9M100.6 87.9L100.0 85.1M100.6 87.9L101.7 85.7M101.2 93.6L98.3 91.8M104.0 99.5L105.8 94.3M105.8 94.3L106.3 90.5M105.8 94.3L108.4 91.9M105.1 90.0L102.1 86.7M102.1 86.7L98.6 86.0M102.1 86.7L101.1 84.0M105.1 90.0L107.1 85.8M107.1 85.8L107.7 82.3M107.1 85.8L109.5 83.6M106.6 93.8L108.4 90.2M110.0 90.6L110.2 86.6M110.2 86.6L108.3 84.4M110.2 86.6L111.4 84.0M110.0 90.6L113.2 88.2M113.2 88.2L115.2 86.5M113.2 88.2L116.0 87.6M108.5 93.4L106.8 90.1M107.2 98.0L104.2 93.4M104.2 93.4L101.2 90.5M104.2 93.4L103.8 89.9M113.4 89.6L111.4 86.3M111.4 86.3L109.0 84.3M111.4 86.3L111.6 83.7M113.4 89.6L114.9 86.0M114.9 86.0L114.0 83.0M114.9 86.0L117.7 84.4M118.5 89.7L119.4 85.4M119.4 85.4L117.8 82.2M119.4 85.4L120.8 83.1M118.5 89.7L121.8 86.4M121.8 86.4L122.3 82.7M121.8 86.4L124.7 84.3M120.6 91.5L119.6 87.6M119.6 87.6L117.1 85.7M119.6 87.6L120.3 84.5M120.6 91.5L123.4 88.0M123.4 88.0L124.4 85.1M123.4 88.0L126.4 86.8M123.0 93.7L124.0 89.7M124.0 89.7L122.9 86.8M124.0 89.7L125.7 87.6M123.0 93.7L126.6 91.6M126.6 91.6L128.1 89.1M126.6 91.6L129.0 90.8M117.0 101.7L122.2 100.7M122.2 100.7L124.9 97.7M122.2 100.7L124.9 102.4M121.5 108.6L126.3 105.7M126.3 105.7L128.9 102.2M126.3 105.7L129.6 104.2M121.5 108.6L127.4 107.2M127.4 107.2L130.4 104.2M127.4 107.2L132.2 108.3M97.6 96.6L93.5 95.9M93.5 95.9L90.5 96.7M93.5 95.9L90.5 94.6M97.6 96.6L95.2 93.3M95.2 93.3L92.2 92.8M95.2 93.3L94.2 90.3M100.2 98.2L98.4 94.9M99.9 93.1L96.1 89.4M96.1 89.4L92.4 87.3M96.1 89.4L94.4 85.9M99.9 93.1L101.0 87.9M101.0 87.9L101.1 84.0M101.0 87.9L104.2 85.3M101.1 96.1L97.1 93.9M104.4 101.4L98.9 102.3M98.9 102.3L95.8 104.3M98.9 102.3L95.1 102.0M107.9 89.9L105.0 86.7M105.0 86.7L101.8 86.2M105.0 86.7L104.0 83.6M107.9 89.9L108.1 85.6M108.1 85.6L106.2 83.1M108.1 85.6L109.8 83.1M109.0 93.9L110.7 89.8M112.0 91.4L112.0 86.9M112.0 86.9L110.4 84.2M112.0 86.9L113.8 83.8M112.0 91.4L114.1 87.8M114.1 87.8L114.0 84.6M114.1 87.8L117.0 86.2M111.0 93.6L114.3 92.2M104.3 92.9L100.9 90.2M100.9 90.2L97.8 89.5M100.9 90.2L100.2 87.4M104.3 92.9L103.1 88.7M103.1 88.7L102.2 85.7M103.1 88.7L104.1 86.2M105.5 94.0L101.9 93.8M105.5 90.7L101.7 88.7M101.7 88.7L98.9 88.8M101.7 88.7L99.9 85.8M105.5 90.7L104.7 85.8M104.7 85.8L102.7 82.4M104.7 85.8L105.4 82.5M107.0 93.9L107.5 89.6M110.1 100.1L110.2 94.3M110.2 94.3L109.8 90.0M110.2 94.3L111.6 89.9M115.0 88.3L112.2 84.1M112.2 84.1L109.1 83.4M112.2 84.1L111.3 80.3M115.0 88.3L116.8 84.3M116.8 84.3L116.4 80.8M116.8 84.3L118.5 82.0M117.6 90.1L119.2 85.4M119.2 85.4L119.5 81.7M119.2 85.4L121.2 82.6M117.6 90.1L121.7 87.4M121.7 87.4L123.2 84.1M121.7 87.4L125.2 86.7M113.9 99.0L112.0 93.4M112.0 93.4L108.3 90.6M112.0 93.4L112.4 89.0M139.6 102.7L141.1 98.1M141.1 98.1L141.2 94.9M141.1 98.1L143.6 95.3M139.6 102.7L143.0 100.8M143.0 100.8L144.8 98.8M143.0 100.8L145.5 100.7M138.7 103.7L142.4 102.4M141.4 106.1L143.8 102.8M143.8 102.8L145.2 100.4M143.8 102.8L146.2 101.8M141.4 106.1L145.8 107.7M145.8 107.7L148.8 107.0M145.8 107.7L148.0 110.6M145.1 108.0L148.7 104.2M148.7 104.2L149.1 100.2M148.7 104.2L152.4 103.7M145.1 108.0L150.3 109.5M150.3 109.5L154.1 109.0M150.3 109.5L152.1 112.4M144.7 115.2L149.6 114.6M149.6 114.6L152.5 111.8M149.6 114.6L153.6 115.7M144.7 115.2L147.3 119.2M147.3 119.2L150.0 120.8M147.3 119.2L148.2 122.6M142.8 113.9L143.7 118.4M127.0 106.2L126.6 100.8M126.6 100.8L125.6 97.6M126.6 100.8L129.0 97.6M127.0 106.2L130.4 101.8M130.4 101.8L132.2 98.4M130.4 101.8L133.6 100.2M125.8 110.3L130.3 107.8M126.2 92.2L124.0 88.1M124.0 88.1L121.1 85.9M124.0 88.1L124.4 84.6M126.2 92.2L126.5 87.6M126.5 87.6L125.9 84.9M126.5 87.6L127.8 84.8M127.4 95.5L128.8 91.6M133.9 92.7L136.1 86.9M136.1 86.9L135.5 82.9M136.1 86.9L139.2 82.9M133.9 92.7L139.2 92.3M139.2 92.3L142.9 90.7M139.2 92.3L142.5 92.9M127.8 100.1L132.4 95.8M132.4 95.8L133.2 91.9M132.4 95.8L136.9 96.1M137.9 102.2L140.2 98.6M140.2 98.6L141.3 96.1M140.2 98.6L142.6 96.9M137.9 102.2L141.7 102.3M141.7 102.3L144.2 101.3M141.7 102.3L144.5 102.9M138.6 104.4L141.6 101.8M141.6 101.8L142.6 99.3M141.6 101.8L144.1 100.8M138.6 104.4L142.4 106.3M142.4 106.3L145.4 106.0M142.4 106.3L144.3 108.3M99.1 103.1L96.2 104.6M96.2 104.6L94.1 106.0M96.2 104.6L93.9 104.6M99.1 103.1L96.3 101.0M96.3 101.0L93.5 101.0M96.3 101.0L94.7 99.0M100.1 103.2L98.1 100.4M101.6 98.3L97.9 95.2M97.9 95.2L94.6 95.5M97.9 95.2L95.7 93.1M101.6 98.3L100.3 93.6M100.3 93.6L97.7 91.1M100.3 93.6L101.2 90.5M102.8 100.6L103.8 96.8M107.9 105.8L103.0 106.3M103.0 106.3L99.7 107.7M103.0 106.3L100.2 105.3M104.9 96.1L101.0 95.8M101.0 95.8L98.4 95.9M101.0 95.8L99.0 94.3M104.9 96.1L102.9 92.2M102.9 92.2L100.7 90.4M102.9 92.2L102.2 89.5M106.0 97.1L102.1 96.7M110.9 95.3L110.7 92.2M110.7 92.2L109.7 90.3M110.7 92.2L111.6 90.3M110.9 95.3L113.3 93.1M113.3 93.1L114.6 91.3M113.3 93.1L115.6 92.4M110.1 103.7L112.4 99.2M112.4 99.2L112.2 95.1M112.4 99.2L115.5 97.6M105.8 110.9L101.2 112.7M101.2 112.7L99.1 115.4M101.2 112.7L97.3 112.0M105.8 110.9L101.2 108.6M101.2 108.6L97.2 109.4M101.2 108.6L98.9 105.5M107.8 110.9L104.8 115.1M121.8 93.3L118.5 91.1M118.5 91.1L115.4 91.7M118.5 91.1L116.6 88.7M121.8 93.3L120.6 90.5M120.6 90.5L119.1 89.1M120.6 90.5L120.8 88.2M123.7 95.2L120.5 94.8M125.4 91.7L124.1 88.7M124.1 88.7L122.4 87.1M124.1 88.7L124.0 86.2M125.4 91.7L127.5 89.0M127.5 89.0L128.7 86.8M127.5 89.0L129.7 87.8M125.4 94.9L128.2 93.0M126.6 101.8L129.2 97.3M129.2 97.3L129.3 93.7M129.2 97.3L132.1 95.4M139.4 93.6L140.4 89.2M140.4 89.2L140.4 86.5M140.4 89.2L142.1 86.9M139.4 93.6L143.5 90.7M143.5 90.7L145.2 87.9M143.5 90.7L147.2 90.4M142.9 101.2L148.6 99.2M148.6 99.2L152.2 96.2M148.6 99.2L152.4 99.4M142.9 101.2L146.7 104.1M146.7 104.1L150.0 105.0M146.7 104.1L148.3 106.8M132.2 106.5L135.8 101.2M135.8 101.2L136.1 97.3M135.8 101.2L139.1 99.0M132.2 106.5L137.9 104.1M137.9 104.1L140.3 100.1M137.9 104.1L142.5 104.5M123.4 92.5L118.4 92.2M118.4 92.2L115.4 93.4M118.4 92.2L115.0 90.7M123.4 92.5L120.8 89.2M120.8 89.2L118.3 87.4M120.8 89.2L119.7 86.7M131.0 88.6L132.3 82.3M132.3 82.3L131.2 77.1M132.3 82.3L135.2 78.3M131.0 88.6L134.5 83.9M134.5 83.9L135.1 79.1M134.5 83.9L138.0 82.8M130.0 91.3L135.0 89.6M129.5 101.6L123.5 98.6M123.5 98.6L119.2 98.1M123.5 98.6L121.1 93.9M143.3 93.7L142.3 87.4M142.3 87.4L139.9 83.6M142.3 87.4L142.2 82.9M143.3 93.7L149.4 91.2M149.4 91.2L152.3 87.4M149.4 91.2L154.1 91.2M147.4 100.1L153.3 98.3M153.3 98.3L157.4 95.5M153.3 98.3L156.9 99.7M147.4 100.1L152.4 101.2M152.4 101.2L156.3 101.3M152.4 101.2L155.3 103.0M143.5 100.4L146.8 96.2M135.5 103.1L137.4 96.7M137.4 96.7L137.4 92.3M137.4 96.7L140.0 92.2M136.7 107.7L143.1 106.0M143.1 106.0L147.6 104.6M143.1 106.0L147.4 108.5M136.7 107.7L142.6 108.2M142.6 108.2L146.2 107.5M142.6 108.2L146.0 111.0M133.8 108.2L137.3 104.1M108.7 95.6L104.3 95.9M104.3 95.9L101.7 97.1M104.3 95.9L100.8 95.1M108.7 95.6L107.1 92.2M107.1 92.2L104.8 90.5M107.1 92.2L107.4 89.4M113.0 93.6L111.2 90.5M111.2 90.5L109.2 88.8M111.2 90.5L110.7 87.7M113.0 93.6L114.2 89.8M114.2 89.8L114.6 86.5M114.2 89.8L116.4 88.3M113.2 96.7L114.9 93.4M116.1 102.7L117.5 98.0M117.5 98.0L116.0 94.9M117.5 98.0L120.3 95.4M115.9 91.3L113.1 88.5M113.1 88.5L110.0 88.2M113.1 88.5L112.5 85.4M115.9 91.3L117.0 87.3M117.0 87.3L117.4 84.0M117.0 87.3L117.8 84.8M118.7 90.5L117.8 86.5M117.8 86.5L116.9 84.1M117.8 86.5L118.0 83.6M118.7 90.5L121.2 86.8M121.2 86.8L121.9 83.5M121.2 86.8L123.9 85.0M118.1 93.2L115.4 90.1M117.8 101.9L114.2 97.5M114.2 97.5L110.4 95.6M114.2 97.5L113.9 94.0M113.1 107.7L106.5 107.9M106.5 107.9L101.8 109.4M106.5 107.9L102.7 105.2M113.1 107.7L108.7 105.3M108.7 105.3L105.3 105.1M108.7 105.3L106.9 101.6M111.2 96.4L105.4 97.5M105.4 97.5L102.5 99.8M105.4 97.5L101.5 95.8M111.2 96.4L108.6 92.4M108.6 92.4L105.9 91.1M108.6 92.4L108.6 88.8M116.0 98.4L113.1 94.6M114.8 93.0L110.3 89.4M110.3 89.4L106.5 88.5M110.3 89.4L107.0 86.3M114.8 93.0L114.9 88.4M114.9 88.4L112.9 85.9M114.9 88.4L115.8 85.0M119.7 100.8L113.6 99.5M113.6 99.5L109.6 99.2M113.6 99.5L110.0 97.0M123.2 94.1L121.2 91.9M121.2 91.9L119.6 90.7M121.2 91.9L120.6 89.8M123.2 94.1L122.6 90.4M122.6 90.4L121.1 88.0M122.6 90.4L123.5 88.1M123.7 95.0L125.0 92.2M127.4 93.6L127.0 89.6M127.0 89.6L125.9 87.5M127.0 89.6L127.5 86.4M127.4 93.6L129.9 90.6M129.9 90.6L130.8 87.8M129.9 90.6L132.8 89.6M127.0 94.7L125.2 92.0M125.5 100.2L122.5 96.5M122.5 96.5L118.9 95.7M122.5 96.5L122.8 93.1M120.5 104.9L115.7 104.0M115.7 104.0L112.4 104.8M115.7 104.0L113.3 102.4M120.5 104.9L118.7 99.3M118.7 99.3L115.5 96.7M118.7 99.3L120.9 95.2M122.9 106.7L121.8 101.7M135.5 90.5L131.4 86.8M131.4 86.8L127.8 86.2M131.4 86.8L131.1 83.4M135.5 90.5L135.7 84.8M135.7 84.8L135.7 81.1M135.7 84.8L136.7 81.2M136.5 94.6L132.0 92.6M140.7 92.5L141.7 87.6M141.7 87.6L140.2 84.8M141.7 87.6L143.4 84.7M140.7 92.5L144.3 89.8M144.3 89.8L145.3 87.1M144.3 89.8L147.5 88.6M139.6 94.3L143.3 92.4M151.5 102.3L154.1 99.2M154.1 99.2L155.4 97.0M154.1 99.2L156.3 97.4M151.5 102.3L155.5 102.8M155.5 102.8L158.2 101.7M155.5 102.8L157.7 104.4M149.8 102.9L154.0 103.7M151.8 104.5L155.9 102.4M155.9 102.4L158.1 99.5M155.9 102.4L159.5 102.8M151.8 104.5L156.3 106.3M156.3 106.3L159.1 107.1M156.3 106.3L158.1 108.8M148.7 104.6L151.8 107.4M139.5 109.8L142.0 105.7M142.0 105.7L142.1 102.5M142.0 105.7L144.9 104.0M139.5 109.8L145.5 110.7M145.5 110.7L150.1 109.4M145.5 110.7L148.9 112.4M135.2 111.6L140.0 113.3M112.4 97.8L108.2 97.1M108.2 97.1L105.3 98.3M108.2 97.1L106.4 95.1M112.4 97.8L110.1 95.0M110.1 95.0L107.6 93.8M110.1 95.0L109.2 92.2M115.7 99.4L112.0 100.6M116.0 94.5L113.4 90.9M113.4 90.9L110.5 89.3M113.4 90.9L112.3 87.7M116.0 94.5L117.0 90.6M117.0 90.6L116.2 87.7M117.0 90.6L119.0 88.2M116.6 96.7L112.9 95.0M117.0 91.9L113.0 89.8M113.0 89.8L109.9 90.3M113.0 89.8L111.2 87.2M117.0 91.9L115.6 87.6M115.6 87.6L113.4 85.1M115.6 87.6L116.5 85.0M124.3 91.3L124.3 87.2M124.3 87.2L122.8 84.5M124.3 87.2L125.5 84.6M124.3 91.3L127.3 87.3M127.3 87.3L127.9 84.3M127.3 87.3L130.4 85.9M123.4 93.6L127.2 92.1M129.4 100.4L124.7 97.3M124.7 97.3L121.1 96.0M121.1 96.0L118.3 95.8M121.1 96.0L119.8 93.5M124.7 97.3L122.1 93.8M122.1 93.8L119.4 92.3M122.1 93.8L121.1 90.7M127.5 99.1L125.8 95.8M129.4 100.4L126.9 95.3M126.9 95.3L123.2 92.9M123.2 92.9L120.2 92.5M123.2 92.9L120.7 90.8M126.9 95.3L128.1 91.1M128.1 91.1L127.5 87.8M128.1 91.1L129.7 88.4M127.6 96.6L124.0 95.6M130.7 102.0L126.0 100.9M126.0 100.9L123.0 102.1M126.0 100.9L123.7 98.8M136.7 98.4L134.7 93.7M134.7 93.7L132.1 91.3M132.1 91.3L129.5 90.9M132.1 91.3L130.9 89.4M134.7 93.7L135.2 89.7M135.2 89.7L134.2 87.3M135.2 89.7L136.7 87.8M135.8 96.3L137.6 93.4M136.7 98.4L141.1 94.3M141.1 94.3L142.9 90.5M142.9 90.5L142.3 87.9M142.9 90.5L145.1 89.0M141.1 94.3L145.0 91.6M145.0 91.6L147.4 89.1M145.0 91.6L147.4 90.2M139.1 96.2L140.1 92.4M141.1 99.4L139.8 94.7M139.8 94.7L137.7 92.1M137.7 92.1L135.8 91.1M137.7 92.1L137.8 90.1M139.8 94.7L139.9 91.2M139.9 91.2L138.6 89.2M139.9 91.2L141.3 89.3M140.5 97.2L137.9 95.3M141.1 99.4L143.7 94.4M143.7 94.4L143.6 90.7M143.6 90.7L142.9 88.2M143.6 90.7L144.5 88.4M143.7 94.4L147.5 92.5M147.5 92.5L148.7 89.7M147.5 92.5L150.3 92.4M142.5 96.7L142.4 93.0M140.6 104.1L144.9 101.3M144.9 101.3L146.9 98.9M144.9 101.3L148.4 101.0M145.6 100.4L147.5 93.9M147.5 93.9L145.6 90.3M145.6 90.3L143.3 88.0M145.6 90.3L145.5 87.1M147.5 93.9L150.2 90.3M150.2 90.3L150.5 87.7M150.2 90.3L152.8 88.5M146.4 97.5L149.9 94.8M145.6 100.4L150.4 97.9M150.4 97.9L152.6 94.6M152.6 94.6L152.7 91.5M152.6 94.6L154.7 93.3M150.4 97.9L154.8 98.1M154.8 98.1L157.9 97.5M154.8 98.1L158.0 99.2M142.4 104.5L148.0 104.5M148.0 104.5L152.2 103.4M148.0 104.5L151.4 105.7M118.8 109.7L114.5 112.4M114.5 112.4L112.3 115.8M112.3 115.8L112.1 119.2M112.3 115.8L110.8 117.9M114.5 112.4L111.5 113.4M111.5 113.4L109.5 115.0M111.5 113.4L109.0 113.2M116.3 111.3L115.7 114.6M118.8 109.7L114.4 108.2M114.4 108.2L111.5 108.3M111.5 108.3L109.1 108.9M111.5 108.3L109.6 108.1M114.4 108.2L111.9 105.3M111.9 105.3L109.0 104.6M111.9 105.3L110.7 102.6M115.4 108.5L113.4 106.2M123.3 103.9L119.7 100.1M119.7 100.1L116.3 98.3M116.3 98.3L113.4 98.9M116.3 98.3L114.4 96.4M119.7 100.1L118.8 96.9M118.8 96.9L117.4 95.0M118.8 96.9L118.9 94.8M121.6 102.1L121.1 98.7M123.3 103.9L122.9 99.1M122.9 99.1L120.9 96.1M120.9 96.1L118.9 94.5M120.9 96.1L121.1 93.2M122.9 99.1L124.9 96.4M124.9 96.4L126.0 94.6M124.9 96.4L126.6 94.8M150.3 91.4L148.2 88.0M148.2 88.0L146.3 86.5M148.2 88.0L148.7 85.2M150.3 91.4L152.4 87.0M152.4 87.0L153.3 84.0M152.4 87.0L154.5 84.7M155.1 93.1L155.2 88.3M155.2 88.3L154.0 85.3M155.2 88.3L157.7 85.5M155.1 93.1L158.8 90.7M158.8 90.7L160.4 87.6M158.8 90.7L161.7 90.0M152.6 96.3L156.1 94.8M158.3 98.8L159.7 95.2M159.7 95.2L160.2 92.5M159.7 95.2L162.6 93.8M158.3 98.8L161.6 97.4M161.6 97.4L163.7 95.9M161.6 97.4L164.3 97.1M159.9 103.9L163.7 103.0M163.7 103.0L165.7 101.6M163.7 103.0L166.4 103.7M159.9 103.9L163.1 105.7M163.1 105.7L165.5 105.4M163.1 105.7L163.9 108.1M157.8 103.5L159.8 106.2M141.5 87.4L140.5 83.8M140.5 83.8L138.9 81.3M140.5 83.8L141.5 81.2M141.5 87.4L143.8 84.0M143.8 84.0L144.7 80.9M143.8 84.0L146.4 82.8M145.2 88.1L144.7 83.5M144.7 83.5L143.6 81.0M144.7 83.5L145.7 80.0M145.2 88.1L148.5 86.4M148.5 86.4L150.2 83.8M148.5 86.4L151.5 85.6M143.7 90.7L143.4 86.9M141.8 99.0L146.7 95.2M146.7 95.2L149.2 91.4M146.7 95.2L150.7 94.7M143.2 88.4L141.2 84.4M141.2 84.4L138.7 81.8M141.2 84.4L140.0 81.4M143.2 88.4L143.3 84.0M143.3 84.0L141.8 81.6M143.3 84.0L143.9 81.0M149.0 90.5L150.8 87.2M150.8 87.2L150.4 84.6M150.8 87.2L153.2 85.8M149.0 90.5L153.2 88.0M153.2 88.0L154.9 85.6M153.2 88.0L156.5 87.9M115.5 100.6L110.7 100.5M110.7 100.5L107.2 100.7M110.7 100.5L107.3 99.1M115.5 100.6L111.1 96.9M111.1 96.9L107.4 96.7M111.1 96.9L108.5 94.1M120.6 102.0L118.4 97.5M118.6 97.2L113.7 96.1M113.7 96.1L110.0 96.2M113.7 96.1L111.1 93.3M118.6 97.2L117.3 91.9M117.3 91.9L115.4 89.2M117.3 91.9L118.2 88.0M120.0 99.1L121.3 94.8M126.0 104.0L124.3 98.2M124.3 98.2L121.3 94.3M124.3 98.2L126.0 93.9M124.6 94.0L121.6 92.4M121.6 92.4L119.4 92.9M121.6 92.4L120.4 90.8M124.6 94.0L123.4 90.3M123.4 90.3L121.8 87.8M123.4 90.3L123.6 87.4M126.2 95.6L122.7 94.9M127.4 92.3L125.9 88.2M125.9 88.2L123.8 85.7M125.9 88.2L125.9 84.8M127.4 92.3L127.4 88.5M127.4 88.5L126.3 86.2M127.4 88.5L128.7 86.5M128.0 95.4L130.5 92.7M133.0 100.7L129.5 95.8M129.5 95.8L126.1 93.9M129.5 95.8L128.5 91.5M133.0 100.7L136.2 96.7M136.2 96.7L136.0 92.8M136.2 96.7L139.6 94.9M143.8 87.7L140.1 84.4M140.1 84.4L136.6 84.5M140.1 84.4L138.8 81.5M143.8 87.7L142.5 82.6M142.5 82.6L140.3 79.6M142.5 82.6L143.2 79.1M144.8 88.9L144.9 84.6M149.4 86.6L148.3 82.6M148.3 82.6L145.9 80.3M148.3 82.6L148.5 79.9M149.4 86.6L151.4 82.2M151.4 82.2L151.8 79.2M151.4 82.2L154.1 80.9M148.9 88.8L152.2 86.3M148.1 97.1L151.8 93.2M151.8 93.2L152.6 89.5M151.8 93.2L155.1 91.3M150.5 88.6L149.4 84.7M149.4 84.7L147.7 82.0M149.4 84.7L149.6 82.1M150.5 88.6L152.3 85.1M152.3 85.1L151.6 82.5M152.3 85.1L155.2 84.1M150.6 90.5L147.9 88.1M153.2 89.6L152.8 86.3M152.8 86.3L151.5 84.0M152.8 86.3L153.2 83.8M153.2 89.6L156.2 87.4M156.2 87.4L157.4 84.8M156.2 87.4L159.1 87.2M152.4 91.1L151.3 87.9M150.0 95.9L148.2 91.4M148.2 91.4L145.7 89.0M148.2 91.4L148.9 87.7M143.9 98.4L140.1 94.0M140.1 94.0L136.9 91.5M140.1 94.0L138.9 89.5M143.9 98.4L142.2 93.9M142.2 93.9L139.2 91.7M142.2 93.9L142.6 90.4M126.7 96.0L123.3 95.7M123.3 95.7L120.9 96.9M123.3 95.7L121.3 94.5M126.7 96.0L123.0 94.3M123.0 94.3L120.0 94.3M123.0 94.3L121.9 91.8M128.1 96.5L127.3 93.2M131.1 92.0L130.2 87.8M130.2 87.8L129.0 85.2M130.2 87.8L131.1 84.4M131.1 92.0L132.6 88.5M132.6 88.5L133.1 86.0M132.6 88.5L134.3 86.6M131.4 95.6L128.1 93.6M135.1 101.0L130.0 102.5M130.0 102.5L127.5 104.9M130.0 102.5L126.3 100.8M126.6 93.9L122.1 95.3M122.1 95.3L120.3 97.5M122.1 95.3L118.7 95.8M126.6 93.9L122.5 91.5M122.5 91.5L119.5 90.7M122.5 91.5L120.1 88.9M128.5 94.6L124.8 96.9M132.7 89.5L131.4 84.7M131.4 84.7L129.1 81.8M131.4 84.7L131.6 81.5M132.7 89.5L135.4 85.8M135.4 85.8L135.2 83.0M135.4 85.8L138.1 83.7M132.8 91.9L130.1 88.5M131.6 104.7L126.3 106.5M126.3 106.5L123.4 109.8M126.3 106.5L122.0 105.8M131.6 104.7L126.7 100.8M126.7 100.8L122.0 99.7M126.7 100.8L124.8 97.1M133.5 104.9L129.5 108.1M132.5 93.4L129.1 94.3M129.1 94.3L127.2 95.9M129.1 94.3L127.0 93.8M132.5 93.4L130.5 91.0M130.5 91.0L128.8 89.2M130.5 91.0L129.4 89.1M136.2 90.7L134.1 88.2M134.1 88.2L132.2 87.3M134.1 88.2L133.7 85.8M136.2 90.7L136.4 87.3M136.4 87.3L135.6 84.7M136.4 87.3L137.3 85.3M137.6 96.7L133.2 94.6M133.2 94.6L129.7 93.9M133.2 94.6L131.6 91.3M139.5 87.7L136.6 84.2M136.6 84.2L133.2 83.4M136.6 84.2L135.7 80.9M139.5 87.7L141.1 83.3M141.1 83.3L141.2 79.6M141.1 83.3L143.5 81.3M144.4 88.2L144.6 84.5M144.6 84.5L142.9 82.5M144.6 84.5L145.0 82.0M144.4 88.2L146.8 84.7M146.8 84.7L147.2 81.9M146.8 84.7L149.1 82.7M141.7 97.4L145.4 93.7M145.4 93.7L147.2 90.8M145.4 93.7L148.7 92.5M135.8 100.0L130.7 98.6M130.7 98.6L127.1 98.3M130.7 98.6L128.0 96.8M135.8 100.0L133.5 95.5M133.5 95.5L131.6 92.5M133.5 95.5L134.3 92.1M152.6 91.5L149.2 89.0M149.2 89.0L146.4 87.7M149.2 89.0L148.0 86.4M152.6 91.5L151.8 88.4M151.8 88.4L150.0 86.7M151.8 88.4L152.7 86.5M153.9 94.5L150.8 92.8M158.2 90.3L156.9 84.8M156.9 84.8L154.8 82.0M156.9 84.8L156.7 80.3M158.2 90.3L161.0 86.5M161.0 86.5L161.4 83.5M161.0 86.5L163.8 84.1M156.4 93.6L160.8 92.2M159.4 93.1L158.9 89.7M158.9 89.7L157.0 88.0M158.9 89.7L159.2 87.6M159.4 93.1L160.5 89.8M160.5 89.8L159.6 87.3M160.5 89.8L162.4 87.9M164.3 96.3L167.5 93.4M167.5 93.4L168.6 90.9M167.5 93.4L170.9 92.7M164.3 96.3L168.7 94.9M168.7 94.9L170.4 92.0M168.7 94.9L171.7 94.8M157.7 99.9L163.6 100.2M163.6 100.2L167.7 97.8M163.6 100.2L167.1 101.4M152.6 92.8L149.1 90.5M149.1 90.5L146.0 89.5M149.1 90.5L147.3 88.3M152.6 92.8L151.5 88.9M151.5 88.9L150.2 86.7M151.5 88.9L151.8 85.6M158.9 94.0L158.8 90.6M158.8 90.6L157.3 88.5M158.8 90.6L159.8 88.2M158.9 94.0L162.0 93.1M162.0 93.1L164.2 91.9M162.0 93.1L164.3 94.1M156.3 96.6L156.3 93.1M159.6 96.0L158.8 93.0M158.8 93.0L157.7 91.0M158.8 93.0L158.7 90.9M159.6 96.0L161.0 92.4M161.0 92.4L160.7 89.4M161.0 92.4L163.2 91.5M159.5 98.5L157.9 95.9M163.9 97.5L165.8 94.6M165.8 94.6L166.2 91.8M165.8 94.6L167.2 92.8M163.9 97.5L167.4 95.7M167.4 95.7L170.1 93.9M167.4 95.7L170.5 94.9M148.4 91.9L145.0 88.6M145.0 88.6L141.4 88.2M145.0 88.6L143.7 85.7M148.4 91.9L148.8 87.9M148.8 87.9L148.0 85.1M148.8 87.9L150.6 86.0M151.8 92.0L150.3 89.0M150.3 89.0L149.1 87.4M150.3 89.0L150.2 86.7M151.8 92.0L153.8 89.3M153.8 89.3L154.3 86.8M153.8 89.3L155.6 88.1M151.3 95.1L148.8 92.6M151.6 102.2L148.0 98.7M148.0 98.7L145.0 97.9M148.0 98.7L146.4 95.4M158.0 93.1L157.0 88.9M157.0 88.9L155.6 86.3M157.0 88.9L156.9 86.1M158.0 93.1L160.3 89.9M160.3 89.9L161.3 86.9M160.3 89.9L163.2 88.6M157.4 95.0L156.3 91.4M161.2 94.8L162.4 90.6M162.4 90.6L161.9 87.5M162.4 90.6L164.5 88.5M161.2 94.8L165.1 93.2M165.1 93.2L166.8 90.9M165.1 93.2L168.4 93.1M148.9 101.2L144.3 98.0M144.3 98.0L141.0 96.3M144.3 98.0L142.2 95.3M148.9 101.2L148.9 96.6M148.9 96.6L147.1 93.9M148.9 96.6L149.7 93.7M152.1 90.9L149.3 88.8M149.3 88.8L146.9 88.5M149.3 88.8L147.6 87.3M152.1 90.9L152.0 86.4M152.0 86.4L150.4 83.7M152.0 86.4L153.5 83.6M153.1 93.6L154.9 90.5M156.6 91.5L157.5 88.5M157.5 88.5L157.2 86.4M157.5 88.5L159.1 86.6M156.6 91.5L159.7 89.5M159.7 89.5L161.2 87.8M159.7 89.5L162.6 88.9M155.1 88.3L150.4 84.5M150.4 84.5L146.7 82.4M150.4 84.5L149.5 80.3M155.1 88.3L156.7 82.6M156.7 82.6L156.8 78.6M156.7 82.6L158.8 79.6M163.7 90.7L164.3 86.4M164.3 86.4L163.2 83.1M164.3 86.4L165.3 83.2M163.7 90.7L168.4 90.3M168.4 90.3L171.7 88.5M168.4 90.3L171.2 92.1M151.0 94.4L146.3 93.4M146.3 93.4L143.1 94.2M146.3 93.4L143.2 91.9M151.0 94.4L148.3 91.9M148.3 91.9L145.4 91.5M148.3 91.9L147.1 89.7M157.9 92.3L157.3 88.1M157.3 88.1L156.2 85.5M157.3 88.1L158.7 85.3M157.9 92.3L160.0 89.4M160.0 89.4L160.5 86.5M160.0 89.4L162.2 88.8M156.8 95.4L154.7 92.3M157.1 101.1L152.6 99.7M152.6 99.7L149.7 100.5M152.6 99.7L150.2 98.1M163.4 91.7L161.8 87.3M161.8 87.3L159.8 85.3M161.8 87.3L162.0 83.8M163.4 91.7L165.3 87.4M165.3 87.4L166.1 84.2M165.3 87.4L167.9 86.2M167.3 96.0L169.8 93.7M169.8 93.7L170.8 91.3M169.8 93.7L171.9 93.0M167.3 96.0L171.3 95.8M171.3 95.8L173.7 93.7M171.3 95.8L173.8 96.1M137.0 98.0L133.5 99.7M133.5 99.7L132.6 102.2M133.5 99.7L130.8 99.6M137.0 98.0L132.5 97.1M132.5 97.1L129.7 97.4M132.5 97.1L130.2 95.0M139.4 92.4L136.2 87.7M136.2 87.7L133.1 85.5M136.2 87.7L136.0 83.5M139.4 92.4L139.9 86.5M139.9 86.5L138.8 82.8M139.9 86.5L141.8 82.2M141.7 96.5L137.6 94.1M148.9 92.0L146.9 88.3M146.9 88.3L144.6 87.2M146.9 88.3L146.3 85.4M148.9 92.0L149.9 88.4M149.9 88.4L149.0 85.6M149.9 88.4L151.8 86.8M152.4 91.6L152.1 87.4M152.1 87.4L151.2 84.2M152.1 87.4L154.0 84.7M152.4 91.6L155.8 88.7M155.8 88.7L157.6 86.1M155.8 88.7L159.1 88.1M151.9 92.8L150.3 89.2M154.5 100.5L153.7 95.2M153.7 95.2L151.3 91.7M153.7 95.2L155.9 91.4M154.5 100.5L159.1 96.6M159.1 96.6L161.6 92.6M159.1 96.6L162.9 95.0M153.8 102.3L158.4 100.1M164.6 90.4L161.6 86.7M161.6 86.7L158.5 85.7M161.6 86.7L160.0 84.0M164.6 90.4L164.1 85.7M164.1 85.7L162.2 82.8M164.1 85.7L165.0 83.0M166.0 94.4L161.9 93.3M170.3 91.2L172.5 86.6M172.5 86.6L172.5 82.6M172.5 86.6L174.7 84.1M170.3 91.2L173.7 88.6M173.7 88.6L174.8 85.8M173.7 88.6L176.6 87.4M169.4 92.4L168.7 88.3M166.2 100.7L171.3 97.7M171.3 97.7L174.5 95.2M171.3 97.7L174.8 96.5M174.1 94.5L174.3 89.7M174.3 89.7L173.1 86.7M174.3 89.7L175.7 86.2M174.1 94.5L177.6 93.0M177.6 93.0L179.4 91.3M177.6 93.0L180.0 92.3M172.8 97.0L176.7 96.1M176.3 99.1L179.2 96.9M179.2 96.9L180.7 94.8M179.2 96.9L181.4 96.6M176.3 99.1L179.5 99.5M179.5 99.5L181.8 99.3M179.5 99.5L181.3 100.4M169.5 108.5L171.8 104.3M171.8 104.3L171.9 101.3M171.8 104.3L174.9 102.4M169.5 108.5L174.3 109.2M174.3 109.2L177.8 108.3M174.3 109.2L177.4 111.1M166.5 109.5L170.4 112.4M153.4 90.4L149.2 88.4M149.2 88.4L146.5 89.0M149.2 88.4L146.9 85.6M153.4 90.4L153.3 86.3M153.3 86.3L152.7 83.7M153.3 86.3L154.7 83.5M155.4 92.9L151.3 91.7M159.4 89.8L158.0 85.2M158.0 85.2L156.5 82.5M158.0 85.2L157.5 81.4M159.4 89.8L162.4 87.4M162.4 87.4L163.8 85.5M162.4 87.4L165.0 86.5M159.4 92.1L157.2 89.1M157.2 89.1L155.3 87.1M157.2 89.1L156.1 86.7M159.4 92.1L159.6 88.0M159.6 88.0L159.1 85.2M159.6 88.0L161.4 85.4M160.2 94.9L161.9 92.1M163.3 92.7L164.5 89.4M164.5 89.4L163.9 86.5M164.5 89.4L165.9 87.6M163.3 92.7L166.5 91.0M166.5 91.0L168.1 89.5M166.5 91.0L169.3 90.7M162.5 94.1L165.3 92.7M139.5 97.3L134.2 98.9M134.2 98.9L131.2 100.7M134.2 98.9L130.4 97.8M139.5 97.3L134.6 94.7M134.6 94.7L130.2 93.9M134.6 94.7L132.1 91.8M143.1 94.2L139.2 92.1M139.2 92.1L136.2 91.9M139.2 92.1L136.7 90.0M143.1 94.2L140.5 89.8M140.5 89.8L136.9 88.0M140.5 89.8L140.6 86.7M146.7 95.0L143.3 94.5M143.3 94.5L141.5 95.4M143.3 94.5L141.5 92.5M146.7 95.0L144.9 92.1M144.9 92.1L143.0 91.0M144.9 92.1L145.2 89.3M152.1 92.8L151.4 89.0M151.4 89.0L149.3 87.2M151.4 89.0L151.6 85.9M152.1 92.8L153.6 88.8M153.6 88.8L153.2 86.2M153.6 88.8L156.0 86.7M151.8 94.1L155.1 92.4M151.5 100.7L147.4 97.6M147.4 97.6L144.3 96.8M147.4 97.6L145.5 94.4M157.5 103.3L156.3 97.4M156.3 97.4L152.7 94.3M156.3 97.4L158.6 94.0M157.5 103.3L161.1 99.9M161.1 99.9L161.4 96.7M161.1 99.9L164.3 98.7M153.4 102.5L149.9 103.0M149.9 103.0L147.8 103.8M149.9 103.0L147.2 103.0M153.4 102.5L151.0 100.1M151.0 100.1L148.9 98.9M151.0 100.1L150.8 97.6M155.6 100.4L153.3 98.4M153.3 98.4L151.5 97.8M153.3 98.4L152.1 96.6M155.6 100.4L156.4 97.3M156.4 97.3L155.8 95.0M156.4 97.3L157.5 95.1M159.2 108.4L160.8 104.4M160.8 104.4L161.0 100.9M160.8 104.4L163.5 102.2M161.2 99.3L160.2 96.2M160.2 96.2L158.2 94.8M160.2 96.2L160.3 93.9M161.2 99.3L162.4 96.8M162.4 96.8L162.1 94.8M162.4 96.8L163.4 95.4M164.6 100.4L165.4 97.1M165.4 97.1L165.4 94.8M165.4 97.1L166.8 95.4M164.6 100.4L167.1 99.0M167.1 99.0L168.5 97.7M167.1 99.0L168.9 98.9M163.2 106.7L162.7 101.5M162.7 101.5L161.2 98.1M162.7 101.5L164.0 97.9M163.2 106.7L166.8 104.1M166.8 104.1L168.6 101.7M166.8 104.1L170.3 103.0M145.9 105.7L142.1 104.7M142.1 104.7L139.4 105.1M142.1 104.7L139.9 102.4M145.9 105.7L143.0 102.8M143.0 102.8L140.0 101.8M143.0 102.8L142.6 99.7M148.3 103.3L146.4 100.1M146.4 100.1L144.4 98.2M146.4 100.1L145.8 97.7M148.3 103.3L148.5 100.0M148.5 100.0L147.8 97.6M148.5 100.0L149.5 98.1M149.1 105.0L150.0 101.7M153.6 110.2L148.8 110.4M148.8 110.4L145.8 112.0M148.8 110.4L146.3 108.4M150.4 102.7L147.1 101.3M147.1 101.3L144.6 100.7M147.1 101.3L145.6 99.1M150.4 102.7L148.4 100.3M148.4 100.3L146.4 99.9M148.4 100.3L147.3 98.0M152.8 104.1L149.7 104.4M154.7 100.1L153.6 97.1M153.6 97.1L152.3 95.2M153.6 97.1L153.7 95.1M154.7 100.1L156.0 97.0M156.0 97.0L155.9 94.6M156.0 97.0L158.3 95.6M155.7 109.4L158.4 105.5M158.4 105.5L160.0 102.0M158.4 105.5L161.2 104.3M152.0 112.8L148.0 114.3M148.0 114.3L146.0 116.1M148.0 114.3L145.2 113.4M152.0 112.8L148.0 109.0M148.0 109.0L143.9 107.9M148.0 109.0L146.7 105.5M154.3 113.6L151.6 110.0M140.5 115.4L138.6 118.6M138.6 118.6L138.9 121.5M138.6 118.6L136.2 119.2M140.5 115.4L136.0 113.9M136.0 113.9L132.8 114.5M136.0 113.9L134.5 111.1M143.7 114.6L140.1 112.8M141.4 112.2L137.2 112.1M137.2 112.1L134.4 113.0M137.2 112.1L134.6 111.2M141.4 112.2L138.2 109.5M138.2 109.5L135.0 108.6M138.2 109.5L136.2 107.1M144.6 113.3L143.8 109.8M146.6 106.9L143.0 106.7M143.0 106.7L140.4 107.8M143.0 106.7L140.3 106.0M146.6 106.9L145.3 104.1M145.3 104.1L143.6 102.4M145.3 104.1L144.8 101.7M148.9 104.5L147.3 101.0M147.3 101.0L145.4 99.6M147.3 101.0L147.7 98.3M148.9 104.5L150.7 101.4M150.7 101.4L151.1 98.5M150.7 101.4L152.9 100.0M149.8 107.2L151.5 104.5M151.8 111.2L151.6 106.9M151.6 106.9L150.5 104.1M151.6 106.9L153.1 103.8M181.8 102.2L180.7 96.9M180.7 96.9L178.3 94.4M178.3 94.4L176.5 93.3M178.3 94.4L177.2 92.3M180.7 96.9L181.5 93.5M181.5 93.5L181.2 91.2M181.5 93.5L182.8 91.2M180.9 98.1L178.7 95.5M181.8 102.2L185.1 98.2M185.1 98.2L185.7 94.3M185.7 94.3L185.3 91.5M185.7 94.3L187.2 92.3M185.1 98.2L188.6 96.1M188.6 96.1L189.8 93.4M188.6 96.1L191.9 95.5M179.5 105.8L184.2 105.1M184.2 105.1L187.1 103.0M184.2 105.1L187.6 106.4M185.2 107.7L189.2 104.4M189.2 104.4L191.2 101.7M191.2 101.7L191.6 99.1M191.2 101.7L192.9 100.4M189.2 104.4L193.2 103.4M193.2 103.4L195.0 101.2M193.2 103.4L196.2 105.0M187.8 105.5L191.1 105.0M185.2 107.7L189.5 110.1M189.5 110.1L192.5 111.1M192.5 111.1L194.6 111.1M192.5 111.1L194.8 112.2M189.5 110.1L191.6 112.9M191.6 112.9L193.9 113.7M191.6 112.9L192.0 115.1M187.8 109.2L191.0 109.0M181.5 108.1L185.5 110.8M185.5 110.8L189.1 111.3M185.5 110.8L187.6 113.2M174.7 97.2L172.9 92.3M172.9 92.3L170.7 90.0M170.7 90.0L168.6 89.4M170.7 90.0L169.9 87.7M172.9 92.3L173.6 88.8M173.6 88.8L172.6 86.2M173.6 88.8L175.4 86.7M173.6 94.3L170.7 92.6M174.7 97.2L179.3 93.7M179.3 93.7L180.8 90.0M180.8 90.0L180.6 86.9M180.8 90.0L182.5 88.3M179.3 93.7L183.3 92.4M183.3 92.4L185.6 91.0M183.3 92.4L185.9 92.7M176.6 95.8L180.3 96.2M179.8 98.7L181.9 92.4M181.9 92.4L182.2 87.1M182.2 87.1L181.2 83.2M182.2 87.1L183.7 83.9M181.9 92.4L184.9 89.1M184.9 89.1L185.6 85.7M184.9 89.1L188.0 87.9M180.9 95.4L180.1 91.2M179.8 98.7L184.6 94.8M184.6 94.8L187.2 90.6M187.2 90.6L188.2 87.6M187.2 90.6L189.8 88.3M184.6 94.8L189.2 94.3M189.2 94.3L192.3 93.1M189.2 94.3L191.9 95.3M182.2 96.7L182.8 92.7M175.5 102.9L177.0 97.0M177.0 97.0L175.9 93.5M177.0 97.0L179.7 93.6M178.6 106.5L182.3 103.3M182.3 103.3L183.2 100.4M182.3 103.3L185.2 102.0M178.6 106.5L183.9 105.8M183.9 105.8L187.3 104.2M183.9 105.8L188.1 106.5M155.8 103.3L150.6 103.3M150.6 103.3L146.8 104.7M146.8 104.7L144.7 107.2M146.8 104.7L144.1 104.4M150.6 103.3L147.4 102.5M147.4 102.5L144.9 103.0M147.4 102.5L145.3 101.3M154.1 103.3L151.5 101.2M155.8 103.3L153.5 98.0M153.5 98.0L150.4 95.3M150.4 95.3L147.5 95.6M150.4 95.3L149.0 92.9M153.5 98.0L154.0 94.3M154.0 94.3L154.1 91.8M154.0 94.3L155.6 92.5M154.9 101.2L151.4 99.7M159.8 105.7L157.7 101.5M157.7 101.5L155.2 99.5M157.7 101.5L157.4 97.7M158.9 99.6L155.2 94.8M155.2 94.8L150.8 93.7M150.8 93.7L147.9 94.9M150.8 93.7L147.9 91.7M155.2 94.8L154.2 90.6M154.2 90.6L152.0 88.1M154.2 90.6L154.6 88.0M157.2 97.4L153.3 97.0M158.9 99.6L158.8 94.0M158.8 94.0L158.3 90.4M158.3 90.4L156.2 88.4M158.3 90.4L159.4 88.4M158.8 94.0L159.9 90.3M159.9 90.3L158.6 87.4M159.9 90.3L161.7 87.9M159.6 101.3L161.5 96.5M161.5 96.5L161.2 93.3M161.5 96.5L163.7 94.1M165.4 101.7L163.5 96.3M163.5 96.3L160.7 92.9M163.5 96.3L164.0 92.6M165.4 101.7L169.1 97.8M169.1 97.8L169.8 94.5M169.1 97.8L172.1 95.9M164.4 105.4L168.2 102.6M187.2 109.4L189.5 105.3M189.5 105.3L190.9 101.9M190.9 101.9L191.4 98.9M190.9 101.9L193.0 99.8M189.5 105.3L192.5 103.2M192.5 103.2L193.1 100.5M192.5 103.2L195.3 102.6M187.2 109.4L192.9 108.1M192.9 108.1L195.9 105.9M195.9 105.9L197.1 103.2M195.9 105.9L198.8 105.2M192.9 108.1L197.1 108.6M197.1 108.6L200.0 108.2M197.1 108.6L199.5 109.5M190.6 108.6L192.1 105.1M185.6 111.3L186.1 106.6M186.1 106.6L185.7 103.6M186.1 106.6L187.6 103.4M191.0 115.1L196.6 113.5M196.6 113.5L200.2 112.2M200.2 112.2L202.0 110.3M200.2 112.2L202.8 112.9M196.6 113.5L201.4 114.2M201.4 114.2L204.6 113.3M201.4 114.2L204.0 116.2M194.4 114.1L196.1 110.7M191.0 115.1L196.0 117.3M196.0 117.3L200.3 117.3M200.3 117.3L203.3 115.9M200.3 117.3L203.1 118.1M196.0 117.3L198.8 119.5M198.8 119.5L201.4 120.6M198.8 119.5L199.1 122.0M187.2 115.0L191.1 111.2M191.1 111.2L193.5 107.8M191.1 111.2L195.5 110.6M180.0 111.7L180.3 106.7M180.3 106.7L178.5 103.2M180.3 106.7L181.1 102.8M180.0 111.7L183.5 108.9M183.5 108.9L185.7 106.3M183.5 108.9L186.1 107.7M174.0 105.4L170.6 101.8M170.6 101.8L167.3 100.2M167.3 100.2L165.1 100.7M167.3 100.2L165.4 98.4M170.6 101.8L168.8 98.1M168.8 98.1L167.3 95.8M168.8 98.1L169.2 95.5M172.3 103.6L169.1 103.6M174.0 105.4L173.6 101.2M173.6 101.2L173.3 98.5M173.3 98.5L172.0 96.9M173.3 98.5L174.0 96.9M173.6 101.2L173.8 98.0M173.8 98.0L173.2 96.0M173.8 98.0L175.2 96.0M175.4 108.6L176.5 104.6M176.5 104.6L176.4 102.0M176.5 104.6L179.1 102.4M180.7 104.4L181.1 99.4M181.1 99.4L180.9 96.1M180.9 96.1L179.2 94.2M180.9 96.1L182.0 94.1M181.1 99.4L183.7 96.3M183.7 96.3L184.1 93.8M183.7 96.3L185.8 94.9M180.7 104.4L185.9 101.9M185.9 101.9L187.8 97.5M187.8 97.5L187.6 94.3M187.8 97.5L190.5 95.3M185.9 101.9L190.2 102.5M190.2 102.5L193.7 102.0M190.2 102.5L192.6 103.7M179.0 107.1L178.3 102.0M178.3 102.0L176.3 99.2M178.3 102.0L179.9 98.9M179.9 103.7L179.7 97.1M179.7 97.1L178.0 92.4M178.0 92.4L175.5 90.4M178.0 92.4L179.2 89.0M179.7 97.1L181.2 92.5M181.2 92.5L180.7 89.5M181.2 92.5L182.7 89.6M179.9 103.7L182.7 98.8M182.7 98.8L183.5 95.6M183.5 95.6L182.7 93.3M183.5 95.6L184.4 93.2M182.7 98.8L186.8 97.5M186.8 97.5L189.5 95.4M186.8 97.5L189.9 98.5M181.2 101.5L180.7 97.9M178.8 108.2L175.8 103.8M175.8 103.8L172.3 102.0M175.8 103.8L175.3 99.8M182.4 107.2L184.6 102.7M184.6 102.7L185.6 99.7M185.6 99.7L184.9 97.4M185.6 99.7L186.8 97.8M184.6 102.7L187.5 100.2M187.5 100.2L188.5 98.1M187.5 100.2L190.3 99.5M183.9 104.1L186.9 102.9M182.4 107.2L186.4 104.6M186.4 104.6L187.2 101.2M187.2 101.2L186.9 98.9M187.2 101.2L188.1 99.3M186.4 104.6L190.3 104.2M190.3 104.2L192.7 103.1M190.3 104.2L193.1 105.2M185.0 105.5L187.9 106.3M179.3 110.2L183.4 109.5M183.4 109.5L186.2 108.6M183.4 109.5L186.2 110.8M194.6 99.8L194.0 95.8M194.0 95.8L192.7 93.0M194.0 95.8L194.8 92.8M194.6 99.8L197.5 96.6M197.5 96.6L197.9 93.9M197.5 96.6L200.7 96.3M198.2 102.3L201.8 98.9M201.8 98.9L202.9 96.1M201.8 98.9L204.8 97.9M198.2 102.3L202.2 101.5M202.2 101.5L204.6 99.6M202.2 101.5L205.2 101.4M194.9 103.7L198.8 104.3M189.8 108.2L195.1 108.2M195.1 108.2L198.6 106.2M195.1 108.2L198.1 109.5M197.9 105.6L199.0 102.2M199.0 102.2L198.9 99.9M199.0 102.2L201.0 100.3M197.9 105.6L201.5 103.9M201.5 103.9L203.0 101.7M201.5 103.9L204.1 103.7M195.5 108.1L199.0 108.4M198.3 110.6L201.1 109.5M201.1 109.5L202.2 107.8M201.1 109.5L203.5 109.4M198.3 110.6L200.2 112.9M200.2 112.9L202.4 113.4M200.2 112.9L200.6 115.3M197.4 110.4L199.3 112.4M191.9 110.0L194.0 106.0M194.0 106.0L193.4 103.4M194.0 106.0L196.4 104.4M184.3 109.3L184.6 104.3M184.6 104.3L183.1 100.7M184.6 104.3L186.1 100.5M184.3 109.3L187.8 106.2M187.8 106.2L188.6 103.2M187.8 106.2L191.2 105.5M184.1 95.6L182.7 92.2M182.7 92.2L180.7 90.7M182.7 92.2L182.5 89.9M184.1 95.6L184.7 91.4M184.7 91.4L184.0 88.6M184.7 91.4L186.5 88.6M184.6 97.1L181.3 96.0M189.0 95.2L189.5 90.4M189.5 90.4L188.1 87.0M189.5 90.4L191.8 87.5M189.0 95.2L192.5 92.3M192.5 92.3L193.5 89.6M192.5 92.3L195.4 90.5M185.3 105.5L183.3 100.6M183.3 100.6L181.9 97.5M183.3 100.6L182.5 96.7M191.7 99.4L191.2 96.5M191.2 96.5L189.5 94.9M191.2 96.5L191.7 94.6M191.7 99.4L194.1 96.5M194.1 96.5L195.1 93.9M194.1 96.5L196.7 95.1M196.0 102.3L199.1 99.8M199.1 99.8L199.8 97.3M199.1 99.8L201.4 99.4M196.0 102.3L200.6 102.9M200.6 102.9L203.8 102.2M200.6 102.9L204.0 104.6M194.1 102.9L196.3 99.8M189.5 111.8L193.5 110.4M193.5 110.4L195.8 108.9M193.5 110.4L196.1 111.0M189.5 111.8L194.3 113.8M194.3 113.8L198.1 114.4M194.3 113.8L196.9 115.5M160.9 110.0L157.7 110.2M157.7 110.2L155.9 111.3M157.7 110.2L155.4 109.7M160.9 110.0L158.6 108.5M158.6 108.5L156.6 108.8M158.6 108.5L157.6 107.2M161.0 107.7L157.9 107.7M157.9 107.7L156.3 108.7M157.9 107.7L155.8 106.4M161.0 107.7L159.7 104.7M159.7 104.7L158.4 102.8M159.7 104.7L160.3 102.1M161.9 108.3L158.8 108.7M168.9 111.4L167.4 107.3M167.4 107.3L164.7 105.4M167.4 107.3L168.4 104.8M162.4 104.7L159.3 104.0M159.3 104.0L157.1 104.6M159.3 104.0L157.2 102.7M162.4 104.7L159.9 102.1M159.9 102.1L157.8 101.5M159.9 102.1L159.2 99.5M167.0 101.0L165.9 97.5M165.9 97.5L163.5 96.0M165.9 97.5L165.9 95.2M167.0 101.0L167.4 97.8M167.4 97.8L167.1 95.3M167.4 97.8L168.8 95.7M167.1 104.2L169.4 101.9M168.4 108.0L168.6 103.2M168.6 103.2L166.8 99.8M168.6 103.2L170.6 100.4M175.0 102.2L171.3 101.9M171.3 101.9L168.7 103.4M171.3 101.9L169.5 100.4M175.0 102.2L174.1 98.9M174.1 98.9L172.4 97.4M174.1 98.9L174.8 96.5M176.6 103.5L175.5 100.0M178.4 101.0L175.4 98.8M175.4 98.8L172.5 98.1M175.4 98.8L174.4 96.7M178.4 101.0L179.2 97.7M179.2 97.7L179.3 95.1M179.2 97.7L181.2 96.0M178.7 102.3L180.7 99.9M181.0 108.5L176.0 107.6M176.0 107.6L172.1 109.0M176.0 107.6L173.3 105.1M184.1 99.4L181.9 96.7M181.9 96.7L179.9 95.9M181.9 96.7L181.0 94.6M184.1 99.4L184.6 95.0M184.6 95.0L183.4 91.8M184.6 95.0L186.2 92.5M184.6 101.5L187.1 98.9M188.5 100.8L189.4 96.7M189.4 96.7L189.1 93.8M189.4 96.7L190.7 94.5M188.5 100.8L191.5 98.4M191.5 98.4L192.7 95.8M191.5 98.4L194.2 98.7M187.1 102.5L190.5 102.0M184.8 106.6L181.4 102.8M181.4 102.8L178.5 101.5M181.4 102.8L180.8 99.1M187.6 111.3L187.8 106.2M187.8 106.2L186.4 102.6M187.8 106.2L190.9 103.4M187.6 111.3L191.3 109.0M191.3 109.0L193.3 107.3M191.3 109.0L194.0 108.8M182.1 103.0L178.4 102.0M178.4 102.0L175.5 101.9M178.4 102.0L175.9 100.0M182.1 103.0L180.7 100.0M180.7 100.0L178.6 98.7M180.7 100.0L180.5 97.9M185.7 100.8L184.1 97.8M184.1 97.8L181.8 96.7M184.1 97.8L183.6 95.6M185.7 100.8L188.0 97.6M188.0 97.6L188.5 94.9M188.0 97.6L190.2 96.4M185.9 104.3L183.7 101.7M186.6 108.8L182.9 106.1M182.9 106.1L180.3 104.7M182.9 106.1L181.7 102.9M192.8 103.6L192.8 100.3M192.8 100.3L192.2 98.5M192.8 100.3L193.4 98.4M192.8 103.6L195.0 102.4M195.0 102.4L195.9 101.2M195.0 102.4L196.8 102.1M192.2 105.0L190.8 102.8M196.1 106.0L199.0 103.2M199.0 103.2L200.9 100.9M199.0 103.2L201.7 103.1M196.1 106.0L199.5 107.3M199.5 107.3L202.0 107.9M199.5 107.3L201.5 108.9M194.6 106.4L196.3 103.6M182.1 113.3L178.4 111.8M178.4 111.8L175.6 112.0M178.4 111.8L177.2 108.7M182.1 113.3L181.1 108.3M181.1 108.3L180.2 104.4M181.1 108.3L180.9 104.2M167.9 116.1L165.4 118.4M165.4 118.4L164.3 120.3M165.4 118.4L163.2 119.6M167.9 116.1L164.5 115.8M164.5 115.8L162.1 117.2M164.5 115.8L162.4 115.1M168.7 111.5L165.4 110.9M165.4 110.9L163.2 111.6M165.4 110.9L163.2 109.8M168.7 111.5L167.0 108.9M167.0 108.9L165.4 107.6M167.0 108.9L167.5 106.7M170.5 113.0L167.8 112.6M174.9 114.6L171.8 117.3M171.8 117.3L170.1 119.7M171.8 117.3L169.3 117.2M174.5 104.1L171.9 101.6M171.9 101.6L169.7 101.2M171.9 101.6L170.5 99.6M174.5 104.1L173.6 101.0M173.6 101.0L172.2 99.2M173.6 101.0L173.7 98.8M175.6 105.6L175.4 102.3M179.2 103.9L179.6 100.8M179.6 100.8L179.2 98.3M179.6 100.8L180.6 99.0M179.2 103.9L181.5 102.0M181.5 102.0L182.3 100.0M181.5 102.0L183.4 101.7M178.4 105.8L181.2 104.6M177.9 111.8L180.5 108.3M180.5 108.3L181.5 105.2M180.5 108.3L183.4 107.0M195.3 116.1L196.0 110.9M196.0 110.9L194.2 108.1M194.2 108.1L192.1 107.1M192.1 107.1L190.7 106.9M192.1 107.1L190.8 106.0M194.2 108.1L194.0 105.6M194.0 105.6L193.1 103.8M194.0 105.6L195.0 103.8M194.9 109.3L195.3 107.2M196.0 110.9L198.2 107.5M198.2 107.5L198.8 104.9M198.8 104.9L198.4 103.0M198.8 104.9L199.6 103.5M198.2 107.5L200.5 105.9M200.5 105.9L201.6 104.4M200.5 105.9L202.3 106.2M195.3 116.1L199.4 112.0M199.4 112.0L201.7 108.1M201.7 108.1L201.3 105.3M201.3 105.3L200.2 103.8M201.3 105.3L202.0 103.2M201.7 108.1L203.9 105.3M203.9 105.3L204.3 103.2M203.9 105.3L205.7 103.4M199.4 112.0L202.7 110.6M202.7 110.6L204.9 108.6M204.9 108.6L206.3 106.8M204.9 108.6L206.5 107.8M202.7 110.6L205.7 110.0M205.7 110.0L207.5 109.3M205.7 110.0L207.7 110.3M201.5 111.1L203.8 111.7M197.0 114.4L197.9 110.8M197.9 110.8L197.5 108.2M197.9 110.8L199.3 108.6M192.1 115.8L189.2 111.9M189.2 111.9L186.6 110.7M186.6 110.7L184.5 111.1M184.5 111.1L183.4 112.3M184.5 111.1L182.9 110.9M186.6 110.7L185.0 109.3M185.0 109.3L183.6 109.4M185.0 109.3L184.6 108.0M187.8 111.2L185.9 111.4M189.2 111.9L189.1 108.9M189.1 108.9L187.6 107.1M187.6 107.1L186.1 106.7M187.6 107.1L187.1 105.5M189.1 108.9L190.2 107.3M190.2 107.3L190.7 106.2M190.2 107.3L191.3 106.6M192.1 115.8L192.2 111.3M192.2 111.3L190.9 108.8M190.9 108.8L189.6 107.4M189.6 107.4L188.2 106.8M189.6 107.4L189.2 106.3M190.9 108.8L191.5 106.6M191.5 106.6L191.7 105.1M191.5 106.6L192.4 105.2M191.8 110.4L192.7 108.9M192.2 111.3L193.1 107.7M193.1 107.7L192.3 105.2M192.3 105.2L191.0 103.9M192.3 105.2L192.7 103.5M193.1 107.7L194.5 105.6M194.5 105.6L195.3 103.8M194.5 105.6L196.3 104.8M192.2 112.4L190.2 110.3M190.2 110.3L188.1 109.6M190.2 110.3L190.1 108.2M192.6 120.0L189.2 116.7M189.2 116.7L185.4 116.0M185.4 116.0L182.8 117.0M185.4 116.0L183.1 114.0M189.2 116.7L187.4 114.1M187.4 114.1L185.4 113.7M187.4 114.1L187.4 112.0M195.7 116.3L197.2 111.1M197.2 111.1L196.9 107.8M196.9 107.8L195.6 105.8M195.6 105.8L193.9 105.3M195.6 105.8L195.2 104.1M196.9 107.8L197.4 105.5M197.4 105.5L197.4 103.8M197.4 105.5L198.1 103.8M197.2 111.1L199.4 107.7M199.4 107.7L199.2 105.3M199.2 105.3L197.8 103.8M199.2 105.3L200.1 103.7M199.4 107.7L202.0 106.2M202.0 106.2L203.1 104.5M202.0 106.2L204.2 105.5M198.5 109.1L198.5 106.5M196.4 113.7L199.4 111.8M199.4 111.8L201.0 110.2M199.4 111.8L202.2 111.6M195.7 116.3L198.7 111.7M198.7 111.7L199.8 108.2M199.8 108.2L199.7 105.7M199.7 105.7L198.7 103.9M199.7 105.7L200.3 104.0M199.8 108.2L201.1 106.1M201.1 106.1L201.9 104.5M201.1 106.1L202.4 105.1M198.7 111.7L201.5 109.8M201.5 109.8L202.9 107.8M202.9 107.8L203.2 106.1M202.9 107.8L204.4 107.0M201.5 109.8L204.0 110.2M204.0 110.2L206.0 109.7M204.0 110.2L205.3 111.1M199.8 111.0L200.0 108.8M197.7 113.2L201.2 112.3M201.2 112.3L203.7 111.0M201.2 112.3L203.3 111.9M194.3 119.6L199.0 118.6M199.0 118.6L201.2 116.3M201.2 116.3L201.6 113.8M201.2 116.3L203.1 115.7M199.0 118.6L202.6 119.4M202.6 119.4L205.3 118.5M202.6 119.4L204.0 121.4M205.5 113.5L203.8 110.3M203.8 110.3L201.4 108.7M201.4 108.7L199.4 108.2M201.4 108.7L200.4 106.8M203.8 110.3L203.9 107.4M203.9 107.4L203.8 105.5M203.9 107.4L205.3 105.7M205.5 113.5L206.1 109.7M206.1 109.7L205.3 107.4M205.3 107.4L204.3 106.2M205.3 107.4L205.2 105.9M206.1 109.7L207.1 106.7M207.1 106.7L207.2 104.5M207.1 106.7L208.5 105.0M206.0 110.5L208.1 109.1M205.4 117.3L202.9 114.4M202.9 114.4L200.3 114.0M202.9 114.4L201.6 111.9M209.8 118.0L211.9 115.7M211.9 115.7L212.9 113.4M212.9 113.4L213.2 111.6M212.9 113.4L214.1 112.6M211.9 115.7L213.9 114.9M213.9 114.9L215.2 113.8M213.9 114.9L215.2 115.2M209.8 118.0L212.5 118.8M212.5 118.8L214.5 119.1M214.5 119.1L216.0 118.7M214.5 119.1L215.8 119.8M212.5 118.8L214.3 120.3M214.3 120.3L215.8 121.2M214.3 120.3L214.8 121.7M211.7 118.6L212.8 120.1M208.5 118.4L211.5 119.1M211.5 119.1L213.6 118.1M211.5 119.1L213.1 120.4M203.1 122.0L202.8 117.3M202.8 117.3L200.3 114.3M200.3 114.3L197.8 113.7M200.3 114.3L199.2 111.4M202.8 117.3L204.2 114.2M204.2 114.2L204.7 111.5M204.2 114.2L206.2 113.3M198.0 113.7L195.7 111.5M195.7 111.5L193.3 110.9M193.3 110.9L191.9 111.5M193.3 110.9L192.0 110.1M195.7 111.5L194.6 109.4M194.6 109.4L193.4 108.2M194.6 109.4L194.5 107.8M196.9 112.6L197.2 110.6M198.0 113.7L198.8 110.8M198.8 110.8L198.8 108.8M198.8 108.8L198.1 107.2M198.8 108.8L199.6 107.5M198.8 110.8L200.3 109.0M200.3 109.0L200.9 107.4M200.3 109.0L201.8 108.0M198.4 112.1L197.7 110.3M199.6 116.2L200.7 113.5M200.7 113.5L200.4 111.4M200.7 113.5L202.3 111.9M202.6 113.1L203.2 110.1M203.2 110.1L203.5 107.7M203.5 107.7L203.7 105.7M203.5 107.7L204.2 106.0M203.2 110.1L204.7 108.2M204.7 108.2L205.6 106.5M204.7 108.2L205.9 106.9M202.6 113.1L205.1 110.5M205.1 110.5L206.4 108.3M206.4 108.3L206.3 106.5M206.4 108.3L208.1 107.6M205.1 110.5L207.3 109.8M207.3 109.8L208.0 108.6M207.3 109.8L208.7 109.6M201.6 115.2L204.7 114.4M204.7 114.4L206.4 112.9M204.7 114.4L206.6 115.1M200.5 119.6L203.7 116.2M203.7 116.2L204.6 112.8M204.6 112.8L204.8 110.5M204.6 112.8L206.6 111.2M203.7 116.2L207.0 115.2M207.0 115.2L208.6 113.7M207.0 115.2L209.6 115.7M195.2 113.2L192.1 111.6M192.1 111.6L189.5 111.5M189.5 111.5L187.7 112.4M189.5 111.5L187.8 111.2M192.1 111.6L191.0 109.7M191.0 109.7L190.0 108.5M191.0 109.7L191.3 108.1M192.8 112.0L192.0 109.9M195.2 113.2L194.7 109.4M194.7 109.4L193.4 107.2M193.4 107.2L192.2 106.1M193.4 107.2L192.9 105.2M194.7 109.4L196.4 107.2M196.4 107.2L196.5 105.2M196.4 107.2L198.0 106.2M194.9 111.4L196.1 109.2M197.2 116.2L193.5 115.6M193.5 115.6L191.2 117.0M193.5 115.6L190.8 114.5M200.0 113.8L200.3 110.5M200.3 110.5L199.6 108.7M199.6 108.7L199.0 107.3M199.6 108.7L200.1 107.5M200.3 110.5L201.6 108.5M201.6 108.5L201.9 106.6M201.6 108.5L203.0 107.8M200.1 112.4L198.7 110.9M200.0 113.8L202.4 111.2M202.4 111.2L203.0 109.2M203.0 109.2L202.5 107.7M203.0 109.2L203.4 107.9M202.4 111.2L204.4 109.5M204.4 109.5L205.0 107.9M204.4 109.5L206.4 109.2M209.4 117.3L209.0 111.9M209.0 111.9L208.1 108.7M208.1 108.7L206.4 107.4M206.4 107.4L204.8 106.6M206.4 107.4L205.9 105.8M208.1 108.7L208.4 106.4M208.4 106.4L207.6 105.0M208.4 106.4L209.3 105.2M208.6 110.7L209.7 108.9M209.0 111.9L209.5 108.0M209.5 108.0L208.6 105.2M208.6 105.2L207.7 103.6M208.6 105.2L208.4 103.4M209.5 108.0L211.6 105.8M211.6 105.8L212.5 103.8M211.6 105.8L213.7 104.6M209.4 117.3L212.1 112.7M212.1 112.7L212.1 109.1M212.1 109.1L211.3 107.0M211.3 107.0L210.1 106.0M211.3 107.0L211.3 105.3M212.1 109.1L213.8 106.8M213.8 106.8L213.7 105.1M213.8 106.8L215.6 106.0M212.1 110.1L213.5 108.2M212.1 112.7L215.3 110.7M215.3 110.7L215.9 108.1M215.9 108.1L215.2 106.2M215.9 108.1L217.4 107.0M215.3 110.7L217.8 110.8M217.8 110.8L219.5 110.3M217.8 110.8L219.3 111.3M213.9 111.6L214.2 109.1M211.4 113.9L214.6 112.5M214.6 112.5L215.5 110.5M214.6 112.5L216.7 113.1M208.3 121.6L211.7 118.8M211.7 118.8L213.4 116.4M213.4 116.4L213.4 114.5M213.4 116.4L215.4 115.7M211.7 118.8L214.8 118.4M214.8 118.4L216.7 117.2M214.8 118.4L217.1 118.9M210.3 120.0L210.2 117.1M205.3 117.5L201.7 113.9M201.7 113.9L198.8 112.9M198.8 112.9L197.0 113.6M197.0 113.6L196.0 114.2M197.0 113.6L195.6 113.4M198.8 112.9L196.8 111.6M196.8 111.6L195.2 110.7M196.8 111.6L196.5 110.0M200.7 113.6L199.1 114.8M201.7 113.9L200.6 110.5M200.6 110.5L199.2 108.6M199.2 108.6L197.8 108.0M199.2 108.6L199.3 106.9M200.6 110.5L201.2 108.2M201.2 108.2L201.0 106.7M201.2 108.2L202.8 106.9M202.8 115.1L202.1 111.9M202.1 111.9L200.7 109.9M202.1 111.9L202.1 109.9M205.3 117.5L206.1 113.4M206.1 113.4L205.6 110.1M205.6 110.1L204.1 108.8M204.1 108.8L202.8 108.4M204.1 108.8L203.2 107.6M205.6 110.1L205.7 107.6M205.7 107.6L205.2 106.2M205.7 107.6L206.2 105.7M205.8 111.0L203.9 109.9M206.1 113.4L207.8 111.4M207.8 111.4L208.3 109.5M208.3 109.5L207.6 108.0M208.3 109.5L209.3 108.4M207.8 111.4L209.5 110.4M209.5 110.4L210.3 109.5M209.5 110.4L211.1 110.5M206.9 112.5L208.5 112.3M205.9 114.5L204.1 112.5M204.1 112.5L202.4 111.5M204.1 112.5L203.5 110.3M205.9 119.1L202.1 116.9M202.1 116.9L199.1 117.2M199.1 117.2L197.0 118.2M199.1 117.2L197.2 116.3M202.1 116.9L200.6 114.5M200.6 114.5L199.1 112.9M200.6 114.5L200.3 112.2M203.1 117.5L200.4 118.4M204.2 118.0L199.7 115.8M199.7 115.8L195.8 115.5M195.8 115.5L192.8 116.2M192.8 116.2L191.0 117.3M192.8 116.2L190.7 115.8M195.8 115.5L193.3 113.6M193.3 113.6L191.5 112.7M193.3 113.6L192.5 111.6M199.7 115.8L197.9 112.3M197.9 112.3L195.8 111.2M195.8 111.2L194.0 111.1M195.8 111.2L194.9 109.7M197.9 112.3L198.3 109.6M198.3 109.6L197.7 108.0M198.3 109.6L198.9 108.0M198.5 113.3L196.0 112.7M201.5 116.7L198.3 117.2M198.3 117.2L196.8 118.6M198.3 117.2L196.3 116.4M204.2 118.0L204.2 113.0M204.2 113.0L203.1 109.7M203.1 109.7L201.6 108.1M201.6 108.1L199.9 107.8M201.6 108.1L201.5 106.3M203.1 109.7L203.7 107.3M203.7 107.3L203.1 105.5M203.7 107.3L204.6 106.0M203.8 111.6L204.7 109.6M204.2 113.0L205.8 109.3M205.8 109.3L205.3 106.7M205.3 106.7L204.3 104.9M205.3 106.7L206.0 105.1M205.8 109.3L208.0 107.3M208.0 107.3L208.9 105.2M208.0 107.3L210.2 106.5M204.7 111.8L203.9 109.3M204.2 114.1L201.9 111.8M201.9 111.8L199.9 110.3M201.9 111.8L201.1 109.4M205.6 120.3L205.7 115.9M205.7 115.9L204.1 113.7M204.1 113.7L202.4 112.9M204.1 113.7L204.0 112.0M205.7 115.9L207.2 113.6M207.2 113.6L207.4 111.5M207.2 113.6L208.9 112.2M205.6 117.8L203.9 115.5M214.2 123.1L212.9 119.1M212.9 119.1L211.1 117.3M211.1 117.3L209.6 117.1M211.1 117.3L210.5 115.7M212.9 119.1L212.5 116.1M212.5 116.1L210.7 114.3M212.5 116.1L212.8 114.1M213.5 121.1L214.8 118.7M214.2 123.1L216.5 120.8M216.5 120.8L217.7 118.6M217.7 118.6L218.6 116.8M217.7 118.6L219.0 117.1M216.5 120.8L218.7 119.4M218.7 119.4L220.0 118.3M218.7 119.4L220.6 119.5M214.9 122.4L217.0 122.7M213.4 125.5L216.7 124.5M216.7 124.5L218.8 122.6M216.7 124.5L218.8 125.0M210.3 123.3L207.4 120.3M207.4 120.3L205.0 118.6M205.0 118.6L203.0 118.1M205.0 118.6L204.2 117.1M207.4 120.3L206.2 117.1M206.2 117.1L204.5 115.4M206.2 117.1L206.3 114.9M210.3 123.3L210.1 119.0M210.1 119.0L209.2 116.4M209.2 116.4L207.8 115.3M209.2 116.4L209.1 114.1M210.1 119.0L211.7 116.9M211.7 116.9L212.1 115.0M211.7 116.9L213.1 116.2M212.9 122.9L211.7 119.7M211.7 119.7L210.1 117.5M210.1 117.5L208.0 116.6M210.1 117.5L210.1 115.8M211.7 119.7L212.2 116.9M212.2 116.9L211.7 115.2M212.2 116.9L212.8 115.3M212.9 122.9L214.9 119.5M214.9 119.5L215.0 117.1M215.0 117.1L214.4 115.5M215.0 117.1L215.5 115.6M214.9 119.5L217.2 118.2M217.2 118.2L218.4 117.0M217.2 118.2L219.2 117.7" stroke-opacity="0.65" stroke-width="0.25"/><path d="M18.9 103.8L21.1 95.8M18.9 103.8L25.1 99.6M17.6 106.4L16.3 99.8M13.7 102.7L12.0 95.5M13.7 102.7L17.0 97.5M14.0 107.6L9.3 102.8M8.4 104.5L1.6 100.6M8.4 104.5L5.9 98.7M12.1 109.9L5.8 107.7M6.0 117.8L6.9 111.9M6.0 117.8L4.2 112.2M6.0 117.8L0.8 114.9M53.0 100.1L52.5 94.3M53.0 100.1L57.1 97.3M55.7 103.7L58.3 100.1M55.7 103.7L60.2 103.0M45.3 112.1L47.4 105.4M41.5 98.7L37.7 96.3M41.5 98.7L40.3 94.7M47.8 98.2L48.5 93.8M47.8 98.2L51.3 94.4M39.3 97.4L35.8 94.4M39.3 97.4L38.4 91.8M44.6 97.1L44.7 92.2M44.6 97.1L49.4 94.8M41.4 106.6L46.7 101.9M30.5 120.4L30.5 114.0M30.5 120.4L27.4 114.8M30.5 120.4L26.6 115.3M27.0 121.1L30.5 117.8M27.0 121.1L27.0 116.2M27.0 121.1L24.3 117.0M66.4 98.0L63.9 94.2M66.4 98.0L69.5 93.9M70.9 100.0L73.2 94.4M70.9 100.0L75.4 98.0M64.3 107.5L69.7 103.4M65.7 98.9L63.7 95.1M65.7 98.9L67.7 95.1M72.2 102.0L75.9 98.5M72.2 102.0L78.0 101.0M44.3 110.6L39.7 114.9M44.3 110.6L38.4 108.1M47.9 104.2L43.7 102.4M47.9 104.2L47.6 99.1M58.1 112.9L56.3 106.5M73.7 97.9L71.2 93.4M73.7 97.9L78.4 93.6M77.7 101.7L79.2 97.6M77.7 101.7L82.7 99.5M65.6 97.4L62.8 93.6M65.6 97.4L67.2 93.3M67.3 96.3L65.9 91.4M67.3 96.3L69.9 90.9M66.7 106.8L72.0 102.5M68.8 98.1L67.0 93.2M68.8 98.1L68.6 93.2M74.8 98.9L77.1 94.0M74.8 98.9L79.5 96.6M68.8 108.6L74.7 105.1M66.4 101.5L61.7 98.8M66.4 101.5L66.1 95.8M70.7 100.3L69.4 95.3M70.7 100.3L75.2 97.0M70.8 111.3L72.7 104.9M60.3 106.3L54.3 107.3M60.3 106.3L57.8 102.5M64.6 102.0L61.8 96.9M64.6 102.0L64.8 96.6M74.0 100.7L70.8 96.8M74.0 100.7L75.8 96.4M77.4 100.1L76.7 95.2M77.4 100.1L81.5 96.6M74.1 110.7L70.8 104.8M83.9 104.5L82.6 96.9M83.9 104.5L89.0 98.3M82.1 108.4L79.7 101.3M78.9 103.5L76.2 96.9M78.9 103.5L80.2 94.6M74.8 104.4L68.6 101.0M74.8 104.4L74.2 96.6M76.2 107.7L69.7 103.9M82.0 94.5L79.1 88.9M82.0 94.5L82.3 88.8M86.9 97.0L87.3 92.4M86.9 97.0L89.7 94.4M83.6 107.6L78.4 103.1M83.2 96.0L80.2 91.1M83.2 96.0L84.7 90.8M88.3 96.3L87.8 90.6M88.3 96.3L92.9 92.6M84.7 106.4L82.1 100.0M68.5 103.6L63.4 102.6M68.5 103.6L64.9 100.3M73.2 99.9L69.6 97.4M73.2 99.9L73.4 95.4M101.4 102.3L102.8 97.5M101.4 102.3L106.2 99.5M104.5 106.4L108.5 101.9M104.5 106.4L110.4 107.5M88.3 96.9L86.3 91.7M88.3 96.9L89.8 91.8M96.5 99.4L98.7 94.3M96.5 99.4L102.7 98.5M89.7 110.2L84.4 105.6M81.9 98.6L77.1 94.9M81.9 98.6L83.1 93.6M82.9 98.4L78.4 95.2M82.9 98.4L83.7 93.3M87.5 112.1L81.7 108.1M86.1 94.4L79.8 91.0M86.1 94.4L84.3 88.9M91.7 92.7L88.1 86.5M91.7 92.7L95.0 87.3M92.8 106.4L86.9 101.6M94.8 92.5L92.3 87.3M94.8 92.5L98.4 88.1M99.7 93.6L99.2 87.7M99.7 93.6L104.9 91.9M86.7 94.9L81.4 92.3M86.7 94.9L84.8 89.7M94.4 94.1L93.5 88.6M94.4 94.1L99.1 91.1M92.6 107.0L94.3 99.5M112.6 103.8L112.0 98.6M112.6 103.8L117.8 101.3M115.2 108.4L119.7 105.3M115.2 108.4L119.7 107.4M104.6 113.5L104.5 106.3M90.3 101.1L86.3 98.2M90.3 101.1L89.8 96.7M93.2 99.3L90.7 95.2M93.2 99.3L93.2 94.1M97.5 112.7L91.1 109.5M104.3 98.9L102.5 93.8M104.3 98.9L108.4 94.5M106.7 99.4L107.1 94.1M106.7 99.4L109.3 95.2M101.2 112.6L98.8 105.9M93.7 97.6L87.6 95.4M93.7 97.6L91.0 91.7M102.9 95.6L104.9 90.6M102.9 95.6L105.7 90.7M100.5 105.5L102.5 98.5M91.2 100.4L86.1 100.5M91.2 100.4L89.9 96.0M93.7 97.4L90.4 94.3M93.7 97.4L93.9 92.5M100.2 95.1L97.2 91.5M100.2 95.1L101.6 89.7M105.9 95.0L106.2 89.6M105.9 95.0L110.7 91.8M102.5 105.7L98.3 99.7M114.6 97.6L114.1 91.9M114.6 97.6L117.3 93.8M118.2 99.0L121.2 93.9M118.2 99.0L122.7 96.6M110.5 111.1L108.1 103.9M103.9 95.8L99.2 90.1M103.9 95.8L103.9 88.7M113.9 96.9L115.9 91.6M113.9 96.9L118.3 93.2M102.5 97.0L98.4 91.7M102.5 97.0L100.6 92.0M107.3 95.7L105.1 90.0M107.3 95.7L110.0 90.6M114.8 95.7L113.4 89.6M114.8 95.7L118.5 89.7M118.8 97.3L120.6 91.5M118.8 97.3L123.0 93.7M114.4 111.6L121.5 108.6M102.5 99.6L97.6 96.6M102.5 99.6L99.9 93.1M109.6 96.5L107.9 89.9M109.6 96.5L112.0 91.4M108.3 96.7L104.3 92.9M108.3 96.7L105.5 90.7M114.7 95.6L115.0 88.3M114.7 95.6L117.6 90.1M135.7 107.2L139.6 102.7M135.7 107.2L141.4 106.1M138.9 111.1L145.1 108.0M138.9 111.1L144.7 115.2M124.8 113.8L127.0 106.2M128.4 98.2L126.2 92.2M128.4 98.2L133.9 92.7M133.3 105.0L137.9 102.2M133.3 105.0L138.6 104.4M104.4 103.8L99.1 103.1M104.4 103.8L101.6 98.3M109.3 100.0L104.9 96.1M109.3 100.0L110.9 95.3M113.7 111.0L105.8 110.9M125.4 96.9L121.8 93.3M125.4 96.9L125.4 91.7M135.5 99.7L139.4 93.6M135.5 99.7L142.9 101.2M125.3 110.8L132.2 106.5M128.3 96.3L123.4 92.5M128.3 96.3L131.0 88.6M139.2 100.8L143.3 93.7M139.2 100.8L147.4 100.1M128.6 109.1L136.7 107.7M113.3 99.3L108.7 95.6M113.3 99.3L113.0 93.6M117.2 96.6L115.9 91.3M117.2 96.6L118.7 90.5M120.7 110.7L113.1 107.7M118.0 99.3L111.2 96.4M118.0 99.3L114.8 93.0M125.6 98.2L123.2 94.1M125.6 98.2L127.4 93.6M126.7 109.7L120.5 104.9M137.4 97.9L135.5 90.5M137.4 97.9L140.7 92.5M145.4 104.7L151.5 102.3M145.4 104.7L151.8 104.5M132.2 112.9L139.5 109.8M117.7 100.5L112.4 97.8M117.7 100.5L116.0 94.5M122.1 97.1L117.0 91.9M122.1 97.1L124.3 91.3M133.9 106.2L129.4 100.4M133.9 106.2L136.7 98.4M140.3 107.2L141.1 99.4M140.3 107.2L145.6 100.4M126.5 110.4L118.8 109.7M126.5 110.4L123.3 103.9M151.4 97.7L150.3 91.4M151.4 97.7L155.1 93.1M154.7 103.0L158.3 98.8M154.7 103.0L159.9 103.9M142.3 93.2L141.5 87.4M142.3 93.2L145.2 88.1M144.7 94.9L143.2 88.4M144.7 94.9L149.0 90.5M122.8 102.5L115.5 100.6M122.8 102.5L118.6 97.2M128.5 97.9L124.6 94.0M128.5 97.9L127.4 92.3M133.3 108.2L133.0 100.7M148.0 92.7L143.8 87.7M148.0 92.7L149.4 86.6M150.6 94.1L150.5 88.6M150.6 94.1L153.2 89.6M147.1 105.7L143.9 98.4M131.7 97.9L126.7 96.0M131.7 97.9L131.1 92.0M133.0 96.3L126.6 93.9M133.0 96.3L132.7 89.5M139.5 105.5L131.6 104.7M136.6 95.4L132.5 93.4M136.6 95.4L136.2 90.7M142.4 93.6L139.5 87.7M142.4 93.6L144.4 88.2M142.2 104.7L135.8 100.0M154.8 96.5L152.6 91.5M154.8 96.5L158.2 90.3M159.0 98.5L159.4 93.1M159.0 98.5L164.3 96.3M155.2 97.7L152.6 92.8M155.2 97.7L158.9 94.0M159.4 100.7L159.6 96.0M159.4 100.7L163.9 97.5M150.9 97.4L148.4 91.9M150.9 97.4L151.8 92.0M156.4 98.6L158.0 93.1M156.4 98.6L161.2 94.8M151.6 108.0L148.9 101.2M154.1 96.0L152.1 90.9M154.1 96.0L156.6 91.5M158.2 95.2L155.1 88.3M158.2 95.2L163.7 90.7M155.9 97.6L151.0 94.4M155.9 97.6L157.9 92.3M162.1 97.7L163.4 91.7M162.1 97.7L167.3 96.0M143.1 98.9L137.0 98.0M143.1 98.9L139.4 92.4M150.3 97.2L148.9 92.0M150.3 97.2L152.4 91.6M151.5 107.7L154.5 100.5M166.7 96.5L164.6 90.4M166.7 96.5L170.3 91.2M171.3 100.0L174.1 94.5M171.3 100.0L176.3 99.1M162.4 110.9L169.5 108.5M157.4 95.4L153.4 90.4M157.4 95.4L159.4 89.8M160.8 96.9L159.4 92.1M160.8 96.9L163.3 92.7M146.7 99.2L139.5 97.3M146.7 99.2L143.1 94.2M150.9 98.4L146.7 95.0M150.9 98.4L152.1 92.8M156.3 110.6L157.5 103.3M157.2 104.7L153.4 102.5M157.2 104.7L155.6 100.4M161.5 103.7L161.2 99.3M161.5 103.7L164.6 100.4M161.1 113.3L163.2 106.7M150.6 108.0L145.9 105.7M150.6 108.0L148.3 103.3M154.5 105.2L150.4 102.7M154.5 105.2L154.7 100.1M158.5 115.0L152.0 112.8M146.6 113.9L140.5 115.4M146.6 113.9L141.4 112.2M150.4 109.3L146.6 106.9M150.4 109.3L148.9 104.5M177.8 108.4L181.8 102.2M177.8 108.4L185.2 107.7M173.2 105.1L174.7 97.2M173.2 105.1L179.8 98.7M171.7 109.1L178.6 106.5M162.0 107.0L155.8 103.3M162.0 107.0L158.9 99.6M163.5 108.8L165.4 101.7M182.6 115.0L187.2 109.4M182.6 115.0L191.0 115.1M178.5 118.2L180.0 111.7M176.6 111.3L174.0 105.4M176.6 111.3L180.7 104.4M177.9 111.6L179.9 103.7M177.9 111.6L182.4 107.2M192.6 104.7L194.6 99.8M192.6 104.7L198.2 102.3M194.2 109.5L197.9 105.6M194.2 109.5L198.3 110.6M182.3 115.6L184.3 109.3M185.8 100.8L184.1 95.6M185.8 100.8L189.0 95.2M190.4 103.8L191.7 99.4M190.4 103.8L196.0 102.3M183.0 112.3L189.5 111.8M164.9 110.3L160.9 110.0M164.9 110.3L161.0 107.7M167.1 106.2L162.4 104.7M167.1 106.2L167.0 101.0M179.4 105.7L175.0 102.2M179.4 105.7L178.4 101.0M185.2 104.9L184.1 99.4M185.2 104.9L188.5 100.8M184.0 116.6L187.6 111.3M185.9 106.0L182.1 103.0M185.9 106.0L185.7 100.8M191.2 107.3L192.8 103.6M191.2 107.3L196.1 106.0M186.0 118.5L182.1 113.3M172.0 114.3L167.9 116.1M172.0 114.3L168.7 111.5M177.5 108.2L174.5 104.1M177.5 108.2L179.2 103.9M192.9 123.0L195.3 116.1M192.9 123.0L192.1 115.8M192.9 123.0L195.7 116.3M205.3 119.3L205.5 113.5M205.3 119.3L209.8 118.0M200.4 117.6L198.0 113.7M200.4 117.6L202.6 113.1M198.5 117.9L195.2 113.2M198.5 117.9L200.0 113.8M207.7 123.8L209.4 117.3M207.7 123.8L205.3 117.5M207.7 123.8L204.2 118.0M212.5 128.3L214.2 123.1M212.5 128.3L210.3 123.3M212.5 128.3L212.9 122.9" stroke-opacity="0.88" stroke-width="0.50"/><path d="M7.0 126.7L6.0 117.8M50.3 107.4L53.0 100.1M50.3 107.4L55.7 103.7M44.9 104.2L41.5 98.7M44.9 104.2L47.8 98.2M41.1 104.0L39.3 97.4M41.1 104.0L44.6 97.1M26.0 127.4L27.0 121.1M65.3 105.1L66.4 98.0M65.3 105.1L70.9 100.0M65.4 105.2L65.7 98.9M65.4 105.2L72.2 102.0M52.2 109.7L44.3 110.6M52.2 109.7L47.9 104.2M72.3 105.6L73.7 97.9M72.3 105.6L77.7 101.7M66.6 104.2L65.6 97.4M66.6 104.2L67.3 96.3M70.0 104.6L68.8 98.1M70.0 104.6L74.8 98.9M69.7 108.0L66.4 101.5M69.7 108.0L70.7 100.3M67.0 109.4L60.3 106.3M67.0 109.4L64.6 102.0M74.6 107.6L74.0 100.7M74.6 107.6L77.4 100.1M83.9 102.7L82.0 94.5M83.9 102.7L86.9 97.0M85.5 102.9L83.2 96.0M85.5 102.9L88.3 96.3M75.0 106.5L68.5 103.6M75.0 106.5L73.2 99.9M96.5 108.2L101.4 102.3M96.5 108.2L104.5 106.4M90.3 105.2L88.3 96.9M90.3 105.2L96.5 99.4M85.1 105.8L81.9 98.6M85.1 105.8L82.9 98.4M91.7 101.6L86.1 94.4M91.7 101.6L91.7 92.7M95.5 101.3L94.8 92.5M95.5 101.3L99.7 93.6M91.1 101.7L86.7 94.9M91.1 101.7L94.4 94.1M108.6 110.7L112.6 103.8M108.6 110.7L115.2 108.4M94.6 107.1L90.3 101.1M94.6 107.1L93.2 99.3M103.5 106.7L104.3 98.9M103.5 106.7L106.7 99.4M99.7 102.9L93.7 97.6M99.7 102.9L102.9 95.6M97.1 104.1L91.2 100.4M97.1 104.1L93.7 97.4M102.3 102.5L100.2 95.1M102.3 102.5L105.9 95.0M113.1 104.9L114.6 97.6M113.1 104.9L118.2 99.0M108.4 104.0L103.9 95.8M108.4 104.0L113.9 96.9M106.9 104.1L102.5 97.0M106.9 104.1L107.3 95.7M115.8 104.7L114.8 95.7M115.8 104.7L118.8 97.3M108.5 105.6L102.5 99.6M108.5 105.6L109.6 96.5M112.5 104.5L108.3 96.7M112.5 104.5L114.7 95.6M129.2 111.6L135.7 107.2M129.2 111.6L138.9 111.1M125.7 107.4L128.4 98.2M125.7 107.4L133.3 105.0M111.0 107.6L104.4 103.8M111.0 107.6L109.3 100.0M127.3 104.7L125.4 96.9M127.3 104.7L135.5 99.7M130.6 106.3L128.3 96.3M130.6 106.3L139.2 100.8M118.2 105.2L113.3 99.3M118.2 105.2L117.2 96.6M125.4 105.6L118.0 99.3M125.4 105.6L125.6 98.2M136.3 107.3L137.4 97.9M136.3 107.3L145.4 104.7M123.1 106.6L117.7 100.5M123.1 106.6L122.1 97.1M147.2 105.1L151.4 97.7M147.2 105.1L154.7 103.0M141.5 102.6L142.3 93.2M141.5 102.6L144.7 94.9M131.3 106.4L122.8 102.5M131.3 106.4L128.5 97.9M148.2 101.1L148.0 92.7M148.2 101.1L150.6 94.1M137.8 103.3L131.7 97.9M137.8 103.3L133.0 96.3M141.0 101.5L136.6 95.4M141.0 101.5L142.4 93.6M153.1 105.3L154.8 96.5M153.1 105.3L159.0 98.5M155.1 106.0L155.2 97.7M155.1 106.0L159.4 100.7M152.0 105.1L150.9 97.4M152.0 105.1L156.4 98.6M155.7 104.2L154.1 96.0M155.7 104.2L158.2 95.2M158.2 104.5L155.9 97.6M158.2 104.5L162.1 97.7M150.4 105.2L143.1 98.9M150.4 105.2L150.3 97.2M165.7 105.5L166.7 96.5M165.7 105.5L171.3 100.0M159.3 103.8L157.4 95.4M159.3 103.8L160.8 96.9M153.0 106.1L146.7 99.2M153.0 106.1L150.9 98.4M160.4 110.5L157.2 104.7M160.4 110.5L161.5 103.7M156.5 112.4L150.6 108.0M156.5 112.4L154.5 105.2M154.3 114.6L146.6 113.9M154.3 114.6L150.4 109.3M187.5 111.0L192.6 104.7M187.5 111.0L194.2 109.5M185.0 108.9L185.8 100.8M185.0 108.9L190.4 103.8M171.4 112.1L164.9 110.3M171.4 112.1L167.1 106.2M183.3 112.5L179.4 105.7M183.3 112.5L185.2 104.9M187.6 112.7L185.9 106.0M187.6 112.7L191.2 107.3M178.3 114.9L172.0 114.3M178.3 114.9L177.5 108.2M200.7 124.9L205.3 119.3M200.7 124.9L200.4 117.6M200.7 124.9L198.5 117.9M212.0 134.0L212.5 128.3" stroke-opacity="0.88" stroke-width="0.75"/><path d="M14.2 113.0L18.9 103.8M14.2 113.0L13.7 102.7M14.2 113.0L8.4 104.5M31.0 127.6L30.5 120.4M79.2 114.9L83.9 104.5M79.2 114.9L78.9 103.5M79.2 114.9L74.8 104.4M103.1 113.7L99.7 102.9M103.1 113.7L97.1 104.1M103.1 113.7L102.3 102.5M135.5 117.7L133.9 106.2M135.5 117.7L140.3 107.2M135.5 117.7L126.5 110.4M169.1 115.7L177.8 108.4M169.1 115.7L173.2 105.1M169.1 115.7L162.0 107.0M174.5 121.3L182.6 115.0M174.5 121.3L176.6 111.3M174.5 121.3L177.9 111.6M193.0 133.3L192.9 123.0M200.0 133.6L200.7 124.9M207.0 133.8L207.7 123.8" stroke-opacity="0.97" stroke-width="1.00"/><path d="M42.4 114.7L50.3 107.4M42.4 114.7L44.9 104.2M42.4 114.7L41.1 104.0M61.3 114.6L65.3 105.1M61.3 114.6L65.4 105.2M61.3 114.6L52.2 109.7M67.0 114.7L72.3 105.6M67.0 114.7L66.6 104.2M67.0 114.7L70.0 104.6M73.1 117.8L69.7 108.0M73.1 117.8L67.0 109.4M73.1 117.8L74.6 107.6M83.2 113.3L83.9 102.7M83.2 113.3L85.5 102.9M83.2 113.3L75.0 106.5M88.9 115.8L96.5 108.2M88.9 115.8L90.3 105.2M88.9 115.8L85.1 105.8M94.3 113.0L91.7 101.6M94.3 113.0L95.5 101.3M94.3 113.0L91.1 101.7M99.6 116.9L108.6 110.7M99.6 116.9L94.6 107.1M99.6 116.9L103.5 106.7M108.6 115.7L113.1 104.9M108.6 115.7L108.4 104.0M108.6 115.7L106.9 104.1M113.4 116.4L115.8 104.7M113.4 116.4L108.5 105.6M113.4 116.4L112.5 104.5M118.5 117.1L129.2 111.6M118.5 117.1L125.7 107.4M118.5 117.1L111.0 107.6M123.4 116.6L127.3 104.7M123.4 116.6L130.6 106.3M123.4 116.6L118.2 105.2M129.2 117.1L125.4 105.6M129.2 117.1L136.3 107.3M129.2 117.1L123.1 106.6M139.9 114.1L147.2 105.1M139.9 114.1L141.5 102.6M139.9 114.1L131.3 106.4M145.4 113.0L148.2 101.1M145.4 113.0L137.8 103.3M145.4 113.0L141.0 101.5M150.5 116.1L153.1 105.3M150.5 116.1L155.1 106.0M150.5 116.1L152.0 105.1M155.3 116.3L155.7 104.2M155.3 116.3L158.2 104.5M155.3 116.3L150.4 105.2M159.8 115.3L165.7 105.5M159.8 115.3L159.3 103.8M159.8 115.3L153.0 106.1M162.9 120.8L160.4 110.5M162.9 120.8L156.5 112.4M162.9 120.8L154.3 114.6M179.9 117.6L187.5 111.0M179.9 117.6L185.0 108.9M179.9 117.6L171.4 112.1M184.9 122.3L183.3 112.5M184.9 122.3L187.6 112.7M184.9 122.3L178.3 114.9" stroke-opacity="0.97" stroke-width="1.25"/><path d="M78.4 129.3L79.2 114.9M134.6 131.3L135.5 117.7M169.9 132.5L169.1 115.7M174.5 132.7L174.5 121.3" stroke-opacity="0.97" stroke-width="1.50"/><path d="M15.0 127.0L14.2 113.0M103.8 130.2L103.1 113.7" stroke-opacity="0.97" stroke-width="1.75"/><path d="M42.0 128.0L42.4 114.7M107.9 130.3L108.6 115.7M130.0 131.1L129.2 117.1M154.7 132.0L155.3 116.3M163.5 132.3L162.9 120.8" stroke-opacity="0.97" stroke-width="2.00"/><path d="M61.0 128.7L61.3 114.6M67.3 128.9L67.0 114.7M72.8 129.1L73.1 117.8M99.7 130.0L99.6 116.9M119.2 130.7L118.5 117.1M180.5 132.9L179.9 117.6" stroke-opacity="0.97" stroke-width="2.25"/><path d="M95.3 129.9L94.3 113.0M114.0 130.5L113.4 116.4M185.7 133.1L184.9 122.3" stroke-opacity="0.97" stroke-width="2.50"/><path d="M83.1 129.4L83.2 113.3M140.5 131.5L139.9 114.1M145.5 131.6L145.4 113.0M149.5 131.8L150.5 116.1M158.8 132.1L159.8 115.3" stroke-opacity="0.97" stroke-width="2.75"/><path d="M88.8 129.6L88.9 115.8M123.9 130.9L123.4 116.6" stroke-opacity="0.97" stroke-width="3.00"/><g fill="#17130e" fill-opacity="0.8" stroke="none"><circle cx="32.7" cy="95.7" r="1.0"/><circle cx="37.6" cy="102.3" r="1.6"/><circle cx="14.9" cy="99.3" r="1.2"/><circle cx="37.8" cy="94.9" r="1.7"/><circle cx="38.6" cy="94.2" r="1.1"/><circle cx="13.1" cy="105.8" r="1.9"/><circle cx="114.6" cy="99.3" r="1.1"/><circle cx="131.6" cy="103.7" r="1.2"/><circle cx="164.2" cy="91.1" r="1.2"/><circle cx="174.3" cy="98.8" r="1.4"/><circle cx="155.7" cy="100.5" r="1.4"/><circle cx="107.6" cy="106.0" r="2.0"/><circle cx="188.0" cy="104.6" r="1.4"/><circle cx="135.9" cy="105.2" r="1.7"/><circle cx="114.7" cy="95.2" r="1.4"/><circle cx="148.5" cy="107.8" r="1.5"/><circle cx="107.4" cy="108.1" r="1.4"/><circle cx="149.1" cy="94.9" r="1.4"/><circle cx="138.0" cy="107.0" r="1.1"/><circle cx="151.7" cy="93.9" r="1.7"/><circle cx="108.1" cy="96.1" r="1.3"/><circle cx="159.1" cy="91.1" r="1.5"/><circle cx="122.7" cy="96.2" r="1.5"/><circle cx="186.5" cy="100.6" r="2.0"/><circle cx="119.2" cy="110.3" r="1.4"/><circle cx="121.1" cy="106.5" r="1.9"/><circle cx="105.6" cy="95.9" r="1.8"/><circle cx="134.1" cy="95.3" r="1.0"/><circle cx="108.4" cy="103.6" r="2.0"/><circle cx="189.9" cy="101.1" r="1.0"/><circle cx="132.4" cy="107.3" r="1.8"/><circle cx="159.3" cy="95.0" r="1.5"/><circle cx="145.6" cy="103.8" r="1.3"/><circle cx="185.5" cy="109.7" r="1.2"/></g></g><path d="M0 125.5 C40 124.5 80 126 120 129 C160 132 200 133 226 133.5 L226 150.5 L0 150.5 Z" fill="#0e130f"/><path d="M0 140 C60 137 140 139 226 141 L226 150.5 L0 150.5 Z" fill="#0a0d0c" fill-opacity="0.7"/></svg><svg class="a" style="left:158px;top:371px" width="226" height="66" viewBox="0 0 226 66"><defs><linearGradient id="p3L" x1="0" y1="0" x2="0" y2="1"><stop offset="0" stop-color="#6a8591"/><stop offset="0.2" stop-color="#8197a0"/><stop offset="0.4" stop-color="#9cacaf"/><stop offset="0.55" stop-color="#adb6b4"/><stop offset="0.68" stop-color="#bcbbb1"/><stop offset="0.76" stop-color="#cdbba6"/><stop offset="0.84" stop-color="#dfb690"/></linearGradient><linearGradient id="p3R" x1="0" y1="0" x2="0" y2="1"><stop offset="0" stop-color="#a2a9ac"/><stop offset="0.2" stop-color="#aeb2b2"/><stop offset="0.4" stop-color="#bdbbb3"/><stop offset="0.55" stop-color="#cfc0ae"/><stop offset="0.68" stop-color="#dfc2a6"/><stop offset="0.84" stop-color="#efc19a"/></linearGradient><linearGradient id="p3M" x1="0" y1="0" x2="1" y2="0"><stop offset="0" stop-color="#000"/><stop offset="1" stop-color="#fff"/></linearGradient><mask id="p3K" maskContentUnits="objectBoundingBox"><rect width="1" height="1" fill="url(#p3M)"/></mask><filter id="p3B" x="-5%" y="-5%" width="110%" height="110%"><feGaussianBlur stdDeviation="0.4"/></filter><filter id="p3C" x="-5%" y="-5%" width="110%" height="110%"><feGaussianBlur stdDeviation="1.6"/></filter><radialGradient id="p3G" gradientUnits="userSpaceOnUse" cx="246" cy="112" r="105"><stop offset="0" stop-color="#f8c391" stop-opacity="0.9"/><stop offset="0.28" stop-color="#f8c391" stop-opacity="0.5"/><stop offset="0.55" stop-color="#f8c391" stop-opacity="0.12"/><stop offset="1" stop-color="#f8c391" stop-opacity="0"/></radialGradient></defs><rect width="226" height="150.5" fill="url(#p3L)"/><rect width="226" height="150.5" fill="url(#p3R)" mask="url(#p3K)"/><rect width="226" height="150.5" fill="url(#p3G)"/><path d="M186 22.5 L196 27.5" stroke="#fff" stroke-opacity="0.6" stroke-width="1.1" stroke-linecap="round"/><ellipse cx="4" cy="43" rx="5" ry="1.6" fill="#fff" fill-opacity="0.16"/></svg><svg class="a" style="left:483px;top:371px" width="226" height="66" viewBox="0 0 226 66"><defs><linearGradient id="p4L" x1="0" y1="0" x2="0" y2="1"><stop offset="0" stop-color="#3f9bb8"/><stop offset="0.2" stop-color="#6fb4c6"/><stop offset="0.42" stop-color="#a8cfd0"/><stop offset="0.6" stop-color="#d0dccc"/><stop offset="0.84" stop-color="#ecdcb8"/></linearGradient><linearGradient id="p4R" x1="0" y1="0" x2="0" y2="1"><stop offset="0" stop-color="#b4c4cc"/><stop offset="0.2" stop-color="#d8dcd4"/><stop offset="0.42" stop-color="#f6e8cc"/><stop offset="0.84" stop-color="#fbe6c4"/></linearGradient><linearGradient id="p4M" x1="0" y1="0" x2="1" y2="0"><stop offset="0" stop-color="#000"/><stop offset="1" stop-color="#fff"/></linearGradient><mask id="p4K" maskContentUnits="objectBoundingBox"><rect width="1" height="1" fill="url(#p4M)"/></mask><filter id="p4B" x="-5%" y="-5%" width="110%" height="110%"><feGaussianBlur stdDeviation="0.4"/></filter><filter id="p4C" x="-5%" y="-5%" width="110%" height="110%"><feGaussianBlur stdDeviation="1.6"/></filter><radialGradient id="p4G" gradientUnits="userSpaceOnUse" cx="246" cy="112" r="105"><stop offset="0" stop-color="#fdeac8" stop-opacity="0.9"/><stop offset="0.28" stop-color="#fdeac8" stop-opacity="0.5"/><stop offset="0.55" stop-color="#fdeac8" stop-opacity="0.12"/><stop offset="1" stop-color="#fdeac8" stop-opacity="0"/></radialGradient></defs><rect width="226" height="150.5" fill="url(#p4L)"/><rect width="226" height="150.5" fill="url(#p4R)" mask="url(#p4K)"/><rect width="226" height="150.5" fill="url(#p4G)"/><path d="M186 22.5 L196 27.5" stroke="#fff" stroke-opacity="0.6" stroke-width="1.1" stroke-linecap="round"/><ellipse cx="4" cy="43" rx="5" ry="1.6" fill="#fff" fill-opacity="0.16"/></svg><div class="a" style="left:158.3px;top:299px;font-size:7.6px;line-height:8px;color:#e3a424;letter-spacing:0.15px;text-shadow:0 0.4px 0 #c88a1a">★★★★★</div><div class="a" style="left:158.5px;top:306.7px;font-size:5px;line-height:7px;color:#222">15-4-2015 19:07</div><div class="a" style="left:158px;top:315px;font-size:4.75px;line-height:7px;color:#222">DSC_2787 Digiphoto_EL.NEF</div><div class="a" style="left:483.8px;top:299.2px;font-size:5.2px;line-height:8px;color:#9a9a9a;letter-spacing:2.5px">★★★★★</div><div class="a" style="left:483.5px;top:306.7px;font-size:5px;line-height:7px;color:#222">15-4-2015 19:07</div><div class="a" style="left:483px;top:315px;font-size:4.75px;line-height:7px;color:#222">DSC_2787 Digiphoto_LR.NEF</div>

<!-- left panel -->
<div class="a" id="left">
  <div class="tri" style="left:3px;top:11px;border:0;border-top:3px solid #444;border-left:2px solid transparent;border-right:2px solid transparent"></div>
  <div class="a t7" style="left:10px;top:8px;color:#555;font-size:6.5px">Mijn albums</div>
  <div class="plus" style="left:93px;top:9px"></div>
  <div class="dd" style="left:100px;top:11px"></div>
</div>

<!-- right panel -->
<div class="a" id="right"></div>
<div class="a" style="left:765px;top:52px;width:108px;height:19px;background:#f1f1f1;border-bottom:1px solid #cfcfcf">
  <svg class="a" style="left:11px;top:5px" width="10" height="9" viewBox="0 0 10 9"><path d="M0.5 1.2 L4.2 1 L8.8 5 L6 8.2 L1 4.2 Z" fill="#1e1e1e"/><path d="M6.6 2.2 L9.6 5 L6.9 8.4" stroke="#1e1e1e" stroke-width="0.8" fill="none"/><circle cx="2.2" cy="2.6" r="0.7" fill="#f1f1f1"/></svg>
  <div class="a" style="left:25.3px;top:5.5px;font-size:6.8px;font-weight:bold;color:#222;line-height:9px">Tags</div><div class="a" style="left:28.5px;top:16.3px;width:4px;height:4px;background:#f1f1f1;border-left:1px solid #cfcfcf;border-top:1px solid #cfcfcf;transform:rotate(45deg)"></div>
  <div class="a" style="left:58.5px;top:5.5px;width:8.5px;height:8.5px;border-radius:50%;background:#6a6a6a;color:#f1f1f1;font-size:7px;line-height:8.5px;text-align:center;font-weight:bold;font-family:'Liberation Serif',serif">i</div>
  <div class="a" style="left:70px;top:5.5px;font-size:6.9px;color:#555;line-height:9px">Informatie</div>
</div>
<div class="a row" style="top:71px"><i class="tri"></i><span>Trefwoorden</span><i class="plus" style="left:94.5px;top:3.6px"></i><i class="dd" style="left:101.2px;top:5px"></i></div>
<div class="a row" style="top:85.5px"><i class="tri"></i><span>Personentags</span><i class="plus" style="left:94.5px;top:3.6px"></i><i class="dd" style="left:101.2px;top:5px"></i></div>
<div class="a row" style="top:100px"><i class="tri"></i><span>Plaatsentags</span><i class="plus" style="left:94.5px;top:3.6px"></i><i class="dd" style="left:101.2px;top:5px"></i></div>
<div class="a row" style="top:114.5px"><i class="tri"></i><span>Gebeurtenissentags</span><i class="plus" style="left:94.5px;top:3.6px"></i><i class="dd" style="left:101.2px;top:5px"></i></div>
<div class="a" style="left:765px;top:357px;width:108px;height:80px;background:#e0e1e3;border-top:1px solid #c6c6c8">
  <div class="a" style="left:5px;top:1.5px;font-size:6.7px;color:#333;line-height:8px">Afbeeldingstags</div>
  <div class="a" style="left:2px;top:13px;width:67px;height:9.5px;background:#fff;border:1px solid #9a9a9a"><div class="a" style="left:2px;top:0.5px;font-size:5.5px;line-height:6.5px;font-style:italic;color:#aaa">Aangepast</div></div>
  <div class="a" style="left:70.5px;top:13px;width:34px;height:9.5px;background:#e6e6e7;border:1px solid #c4c4c6;font-size:5.5px;line-height:7.5px;text-align:center;color:#a4a4a4">Toevoegen</div>
</div>

<!-- title bar -->
<div class="a" id="title">
  <div class="a" style="left:6.4px;top:3.5px;width:9.6px;height:9.6px;background:#2a1c05;border:1px solid #4a3208"><div class="a" style="left:1px;top:1px;width:6px;height:6px;border-radius:50%;border:1.5px solid #e2a417"></div></div>
  <div class="a m" style="left:25px"><u>B</u>estand</div>
  <div class="a m" style="left:52px">B<u>e</u>werken</div>
  <div class="a m" style="left:85px"><u>Z</u>oeken</div>
  <div class="a m" style="left:111px"><u>W</u>eergave</div>
  <div class="a m" style="left:144px"><u>H</u>elp</div>
  <div class="a" style="left:701.5px;top:2.5px;width:109px;height:11px;background:#383838;border:1px solid #1e1e1e;border-bottom-color:#4a4a4a">
    <div class="a" style="left:1.6px;top:0.8px;width:5.6px;height:5.6px;border:1.5px solid #f2f2f2;border-radius:50%"></div>
    <div class="a" style="left:5.6px;top:5.6px;width:3.4px;height:1.7px;background:#f2f2f2;transform:rotate(45deg)"></div>
    <div class="dd" style="left:9.6px;top:4.8px;border-top-color:#ddd"></div>
    <div class="a" style="left:13.6px;top:1.7px;font-size:5.8px;line-height:7px;font-style:italic;color:#858585">Zoeken</div>
  </div>
  <div class="a" style="left:824px;top:0;width:46px;height:9px;background:linear-gradient(#5a5a5a,#3e3e3e);border:1px solid #222;border-top:0">
    <div class="a" style="left:12px;top:0;width:1px;height:8px;background:#262626"></div>
    <div class="a" style="left:25px;top:0;width:1px;height:8px;background:#262626"></div>
    <div class="a" style="left:4px;top:4px;width:4px;height:2px;background:#eee"></div>
    <div class="a" style="left:16px;top:1.5px;width:5px;height:4.5px;border:1px solid #eee;border-top-width:1.5px"></div>
    <div class="a" style="left:32px;top:-0.6px;font-size:9px;line-height:9px;color:#fff;font-weight:bold">×</div>
  </div>
</div>

<!-- nav bar -->
<div class="a" id="nav"></div>
<div class="a hb" style="left:10.6px;font-size:8.45px">Importeren</div><div class="dd" style="left:62.2px;top:25px;border-top-color:#333;border-top-width:2px;border-left-width:2px;border-right-width:2px"></div>
<div class="a hb" style="left:316px">Media</div>
<div class="a hb" style="left:358px">Personen</div>
<div class="a hb" style="left:413px">Plaatsen</div>
<div class="a hb" style="left:464px">Gebeurtenissen</div>
<div class="a hb" style="left:779px">Maken</div><div class="dd" style="left:810.8px;top:25px;border-top-color:#333;border-top-width:2px;border-left-width:2px;border-right-width:2px"></div>
<div class="a hb" style="left:831px">Delen</div><div class="dd" style="left:860.2px;top:25px;border-top-color:#333;border-top-width:2px;border-left-width:2px;border-right-width:2px"></div>

<!-- sub bar -->
<div class="a" id="sub"></div>
<div class="a" style="left:2px;top:51.4px;width:107px;height:1px;background:#d0d0d0"></div>
<div class="a" style="left:108.4px;top:35px;width:1px;height:17px;background:#d9d9d9"></div>
<div class="a" style="left:28px;top:49.6px;width:4px;height:4px;background:#e3e4e6;border-left:1px solid #d0d0d0;border-top:1px solid #d0d0d0;transform:rotate(45deg)"></div>
<div class="a" style="left:9px;top:40px;width:7px;height:8px;background:#2a2a2a;border-radius:1px;border-bottom:1.5px solid #777"></div>
<div class="a" style="left:21px;top:40px;font-size:6.8px;font-weight:bold;color:#222;line-height:9px;letter-spacing:-0.1px">Albums</div>
<div class="a" style="left:64px;top:40px;width:9px;height:7.5px;background:#6a6a6a;border-radius:1px"></div>
<div class="a" style="left:64px;top:39px;width:4px;height:2px;background:#6a6a6a;border-radius:1px 1px 0 0"></div>
<div class="a" style="left:75.5px;top:40px;font-size:6.7px;color:#555;line-height:9px">Mappen</div>
<div class="a" style="left:113px;top:38.5px;width:10px;height:10px;border-radius:50%;border:1px solid #c4c4c4;background:#f8f8f8"></div>
<svg class="a" style="left:113px;top:38.5px" width="10" height="10"><path d="M5.8 2.8 L3.8 5 L5.8 7.2" stroke="#555" stroke-width="0.8" fill="none"/></svg>
<div class="a t7" style="left:127px;top:39.5px;color:#555">Terug</div>
<div class="a t6" style="left:163px;top:40px;color:#333">Sorteren op:</div>
<div class="a" style="left:199px;top:39.3px;width:68px;height:8.6px;background:#dcdcdc;border:1px solid #7a7a7a">
  <div class="a" style="left:2px;top:0;font-size:5.5px;line-height:6.4px;color:#222;border-bottom:0.5px dotted #333">Nieuwst</div>
  <div class="dd" style="left:60px;top:2.6px;border-top-color:#222"></div>
</div>
<div class="a t6" style="left:466px;top:40px;color:#333;font-size:5.7px">Laatste importactie</div>
<div class="a t6" style="left:782px;top:40px;color:#555;font-size:5.7px">Waarderingen</div>
<div class="a" style="left:821.5px;top:39.5px;font-size:6px;line-height:8px;color:#666">≥</div>
<div class="a" style="left:828.5px;top:39.5px;font-size:6px;line-height:8px;color:#8a8a8a;letter-spacing:3.3px">★★★★★</div>

<!-- bottom toolbar -->
<div class="a" id="tool">
  <div class="a" style="left:0;top:0;width:2px;height:27px;background:#2c2c2c"></div>
  <div class="a" style="left:873px;top:0;width:1px;height:27px;background:#2c2c2c"></div>
  <!-- separators -->
  <div class="a sep" style="left:31px"></div><div class="a sep" style="left:88px"></div><div class="a sep" style="left:176px"></div>
  <!-- verbergen -->
  <svg class="a" style="left:7px;top:4px" width="15" height="12" viewBox="0 0 15 12"><rect x="1" y="1" width="12.6" height="9.6" fill="#eceff4" stroke="#7d8aa0" stroke-width="1"/><rect x="0.8" y="0.8" width="4.8" height="10" fill="#2f6eb8"/><path d="M4 4 L2 5.8 L4 7.6 Z" fill="#fff"/></svg>
  <!-- ongedaan -->
  <svg class="a" style="left:39px;top:4px" width="14" height="12" viewBox="0 0 14 12"><path d="M3.5 3.6 H8 A3.4 3.4 0 0 1 8 10.4 H5.6" fill="none" stroke="#48699a" stroke-width="1.5"/><path d="M0.8 3.6 L4.6 0.8 V6.4 Z" fill="#48699a"/></svg>
  <div class="a" style="left:55px;top:9px;width:2.4px;height:1px;background:#555"></div>
  <!-- roteren -->
  <svg class="a" style="left:66px;top:3.5px" width="14" height="13" viewBox="0 0 14 13"><circle cx="7" cy="7" r="4.6" fill="none" stroke="#8ea4c6" stroke-width="1.6"/><path d="M3.2 4.4 A4.6 4.6 0 0 1 11.6 7" fill="none" stroke="#48699a" stroke-width="1.6"/><path d="M1.2 2 L5.4 2.6 L2.2 6 Z" fill="#48699a"/></svg>
  <div class="a" style="left:81.5px;top:9px;width:2.4px;height:1px;background:#555"></div>
  <!-- locatie -->
  <svg class="a" style="left:109px;top:3.5px" width="14" height="14" viewBox="0 0 14 14"><path d="M4.6 0.6 C7 0.6 8.6 2.3 8.6 4.4 C8.6 7 5.6 9 4.8 12.4 C4 9 0.8 7 0.8 4.4 C0.8 2.3 2.3 0.6 4.6 0.6 Z" fill="#d9544e"/><circle cx="4.7" cy="4.3" r="1.5" fill="#f3d9d6"/><path d="M10.2 7.6 V13 M7.5 10.3 H12.9" stroke="#3f7cc0" stroke-width="1.7"/></svg>
  <!-- gebeurtenis -->
  <svg class="a" style="left:151px;top:4px" width="15" height="13" viewBox="0 0 15 13"><rect x="0.6" y="0.6" width="11.4" height="10" fill="#f4f6f8" stroke="#6f8fb8" stroke-width="1"/><rect x="0.2" y="0.2" width="12.2" height="2.8" fill="#5b8cc4"/><rect x="3.6" y="4.2" width="4.4" height="5" fill="#b9d86a" stroke="#7da03a" stroke-width="0.5"/><path d="M5.4 5.6 L6.1 5 V8.6" stroke="#3d5a1a" stroke-width="0.8" fill="none"/><path d="M11.6 7 V12.4 M8.9 9.7 H14.3" stroke="#3f7cc0" stroke-width="1.7"/></svg>
  <!-- presentatie -->
  <svg class="a" style="left:188.5px;top:4px" width="13" height="13" viewBox="0 0 13 13"><circle cx="6.4" cy="6.4" r="5.3" fill="#e4e9f1" stroke="#4c74a8" stroke-width="1.3"/><path d="M4.8 3.6 L9.2 6.4 L4.8 9.2 Z" fill="#2f62a8"/></svg>
  <!-- editor -->
  <svg class="a" style="left:214px;top:4px" width="15" height="13" viewBox="0 0 15 13"><rect x="0.6" y="0.6" width="10.6" height="8" fill="#e6ecf4" stroke="#5a7fb2" stroke-width="1"/><path d="M1.4 7.6 L4 4.8 L6 6.6 L7.6 5.4 L10.4 7.8 V8 H1.4 Z" fill="#3e68a4"/><circle cx="8.4" cy="3" r="0.9" fill="#3e68a4"/><path d="M7 11.6 L12.4 6.2" stroke="#3e68a4" stroke-width="1.8" stroke-linecap="round"/><path d="M6.2 12.4 L7.4 12 L6.6 11.2 Z" fill="#3e68a4"/></svg>
  <div class="a" style="left:230px;top:9px;width:2.4px;height:1px;background:#555"></div>
  <!-- slider -->
  <div class="a" style="left:707.5px;top:9.6px;width:57px;height:1.2px;background:#8a8a8a"></div>
  <div class="a" style="left:755.8px;top:6.6px;width:7px;height:7px;border-radius:50%;background:#f8f8f8;border:1px solid #444"></div>
  <!-- repareren -->
  <svg class="a" style="left:822px;top:4.5px" width="15" height="13" viewBox="0 0 15 13"><path d="M1.2 11.6 L8 4.6" stroke="#4a7ab8" stroke-width="2" stroke-linecap="round"/><path d="M5.2 1 L12.8 7.6" stroke="#3f6eac" stroke-width="2.2" stroke-linecap="round"/><path d="M6 2.6 L8 4.6 L9.6 3.2" stroke="#7aa2d4" stroke-width="1" fill="none"/></svg>
  <!-- tags/info -->
  <div class="a" style="left:849.5px;top:2px;width:17.5px;height:16px;background:#c3c5ca;border:1px solid #aeb0b6"></div>
  <svg class="a" style="left:852px;top:4px" width="13" height="12" viewBox="0 0 13 12"><path d="M7.4 0.8 L11.6 1 L12 5 L5.6 11.2 L1 6.8 Z" fill="#4a93dc" stroke="#3a7cc4" stroke-width="0.6"/><circle cx="10" cy="2.8" r="0.8" fill="#d8e8f8"/></svg>
  <div class="a l" style="left:0.5px;letter-spacing:-0.05px">Verbergen</div>
  <div class="a l" style="left:35.7px">Ongedaan</div>
  <div class="a l" style="left:65px">Roteren</div>
  <div class="a l" style="left:92.7px">Locatie toevoegen</div>
  <div class="a l" style="left:143.2px">Gebeurtenis</div>
  <div class="a l" style="left:180.8px">Presentatie</div>
  <div class="a l" style="left:215.4px">Editor</div>
  <div class="a l" style="left:726px">Zoomen</div>
  <div class="a l" style="left:817px">Repareren</div>
  <div class="a l" style="left:847.3px">Tags/Info</div>
</div>

<!-- status -->
<div class="a" id="status">
  <div class="a s" style="left:4.8px;font-size:4.9px">1 item geselecteerd</div>
  <div class="a" style="left:50px;top:2px;width:1px;height:6px;background:#666"></div>
  <div class="a s" style="left:53.2px;font-size:4.9px">apr. 2015</div>
  <div class="a" style="left:78px;top:2px;width:1px;height:6px;background:#666"></div>
  <div class="a" style="left:81.5px;top:2.6px;width:4.6px;height:4.6px;border-radius:50%;border:0.8px solid #6a6a6a;border-top-color:transparent"></div>
  <div class="a s" style="left:707.3px;font-size:4.86px">Gezichten in uw catalogus analyseren: Optimaliseren...</div>
  <div class="a" style="left:828.5px;top:2px;width:1px;height:6px;background:#666"></div>
  <div class="a s" style="left:832px;font-size:4.86px">Mijn catalogus</div>
</div>

<!-- taskbar -->
<div class="a" id="task"><svg class="a" style="left:7px;top:5px" width="8" height="8" viewBox="0 0 8 8"><path d="M0 1.1 L3.5 0.6 V3.8 H0 Z M4 0.5 L8 0 V3.8 H4 Z M0 4.3 H3.5 V7.5 L0 7 Z M4 4.3 H8 V8 L4 7.5 Z" fill="#fff"/></svg><svg class="a" style="left:28.6px;top:4.6px" width="9" height="9" viewBox="0 0 10 10"><circle cx="6" cy="3.8" r="2.7" fill="none" stroke="#f0f0f0" stroke-width="0.9"/><path d="M4 5.8 L0.8 9.2" stroke="#f0f0f0" stroke-width="1"/></svg><svg class="a" style="left:49.6px;top:5.4px" width="10.4" height="7.2" viewBox="0 0 12 9"><rect x="2.6" y="0.8" width="6.8" height="7.2" fill="none" stroke="#f0f0f0" stroke-width="0.9"/><path d="M1 2 V7 M11 2 V7" stroke="#f0f0f0" stroke-width="0.9"/></svg><div class="a" style="left:68.5px;top:16.6px;width:18px;height:1.4px;background:#b4cde8"></div><svg class="a" style="left:71.8px;top:3.8px" width="10.6" height="10.6" viewBox="0 0 12 12"><circle cx="6" cy="6" r="5.6" fill="#f4c20d"/><path d="M6 6 L1.15 3.2 A5.6 5.6 0 0 1 10.85 3.2 Z" fill="#de4b3c"/><path d="M6 6 L1.15 3.2 A5.6 5.6 0 0 0 6 11.6 L8.6 7.2 Z" fill="#3aa757"/><path d="M1.15 3.2 A5.6 5.6 0 0 1 10.85 3.2 L6 3.4 Z" fill="#de4b3c"/><circle cx="6" cy="6" r="2.5" fill="#fff"/><circle cx="6" cy="6" r="1.9" fill="#4a8af4"/></svg><svg class="a" style="left:95.5px;top:4.5px" width="9.4" height="9.4" viewBox="0 0 11 11"><path d="M0.6 5.4 C0.8 2.4 3 0.6 5.6 0.6 C8.6 0.6 10.4 2.8 10.2 6.2 H3.6 C3.8 8 5.2 8.8 6.8 8.8 C8 8.8 9 8.5 9.8 8 V10 C8.8 10.5 7.6 10.7 6.4 10.7 C3.4 10.7 1.2 8.8 1.1 6 C1.5 4.6 2.6 3.6 4 3.2 C3.6 3.6 3.5 4 3.5 4.4 H7.4 C7.4 3.2 6.6 2.4 5.4 2.4 C3.4 2.4 1.6 3.6 0.6 5.4 Z" fill="#2a86da"/></svg><svg class="a" style="left:117px;top:4.6px" width="10.4" height="8.6" viewBox="0 0 12 10"><path d="M0.3 1 H4.4 L5.4 2.2 H11.6 V9.4 H0.3 Z" fill="#e8b84a"/><path d="M0.3 3.4 H11.6 V9.4 H0.3 Z" fill="#f7d978"/><rect x="3.5" y="6.4" width="5" height="3" fill="#6fb7e8"/></svg><div class="a" style="left:139.3px;top:4.2px;width:10.4px;height:9.6px;background:#0b1f36;border:1px solid #4aa8ee;color:#4aa8ee;font-size:5.2px;line-height:7.6px;text-align:center;font-weight:bold;letter-spacing:-0.2px">Ps</div><svg class="a" style="left:160.5px;top:3px" width="11" height="12" viewBox="0 0 11 12"><path d="M3.4 3 V2 A2.1 1.7 0 0 1 7.6 2 V3" fill="none" stroke="#fff" stroke-width="0.8"/><path d="M0.6 3 H10.4 V11.4 H0.6 Z" fill="#fff"/><path d="M3.6 5.4 H5.2 V7 H3.6 Z M5.8 5.4 H7.4 V7 H5.8 Z M3.6 7.6 H5.2 V9.2 H3.6 Z M5.8 7.6 H7.4 V9.2 H5.8 Z" fill="#0e0f12"/></svg><div class="a" style="left:183.8px;top:4.2px;width:10.4px;height:9.6px;background:#2e1c04;border:1px solid #e9a23b;color:#e9a23b;font-size:5.2px;line-height:7.6px;text-align:center;font-weight:bold;letter-spacing:-0.2px">Br</div><div class="a" style="left:205.8px;top:4.2px;width:10.4px;height:9.6px;background:#2a0a3c;border:1px solid #d08cf6;color:#d08cf6;font-size:5.2px;line-height:7.6px;text-align:center;font-weight:bold;letter-spacing:-0.2px">Pr</div><div class="a" style="left:228.3px;top:4.2px;width:10.4px;height:9.6px;background:#3a2a8c;border:1px solid #a98cf0"></div><svg class="a" style="left:228.3px;top:4.2px" width="10.4" height="9.6"><path d="M3 7.8 V2.8 L7.6 7.8 Z" fill="#f4f0ff"/></svg><div class="a" style="left:250.8px;top:4.2px;width:10.4px;height:9.6px;background:#06281f;border:1px solid #3fd6a4;color:#3fd6a4;font-size:5.2px;line-height:7.6px;text-align:center;font-weight:bold;letter-spacing:-0.2px">Au</div><div class="a" style="left:272.8px;top:4.2px;width:10.4px;height:9.6px;background:#380a20;border:1px solid #f0408c;color:#f0408c;font-size:5.2px;line-height:7.6px;text-align:center;font-weight:bold;letter-spacing:-0.2px">Id</div><div class="a" style="left:295.3px;top:4.2px;width:10.4px;height:9.6px;background:#331503;border:1px solid #f58220;color:#f58220;font-size:5.2px;line-height:7.6px;text-align:center;font-weight:bold;letter-spacing:-0.2px">Ai</div><div class="a" style="left:318.3px;top:4.2px;width:10.4px;height:9.6px;background:#2a0806;border:1px solid #c8241c"></div><svg class="a" style="left:318.0px;top:3.8px" width="10.4" height="10"><path d="M2.4 8.4 C4.4 7 5.4 4.6 5.2 2.4 C5 4.8 6.6 6.6 8.8 6.8 C6.4 6.6 4 7.2 2.4 8.4" fill="none" stroke="#f04030" stroke-width="0.9"/></svg><div class="a" style="left:340.3px;top:4.2px;width:10.4px;height:9.6px;background:#2a0806;border:1px solid #d8d0c8"></div><svg class="a" style="left:340.0px;top:3.8px" width="10.4" height="10"><path d="M2.4 8.4 C4.4 7 5.4 4.6 5.2 2.4 C5 4.8 6.6 6.6 8.8 6.8 C6.4 6.6 4 7.2 2.4 8.4" fill="none" stroke="#f04030" stroke-width="0.9"/></svg><div class="a" style="left:362px;top:4px;width:11px;height:10px;background:#e8f4ec"></div><div class="a" style="left:361px;top:3.5px;width:7.5px;height:11px;background:#1e7044;color:#fff;font-size:6px;line-height:11px;text-align:center;font-weight:bold">X</div><div class="a" style="left:379.5px;top:16.5px;width:19px;height:1.5px;background:#b8cfe8"></div><div class="a" style="left:385px;top:4.5px;width:10px;height:9px;background:#dfeaf6"></div><div class="a" style="left:383.5px;top:3.5px;width:7.5px;height:11px;background:#1066b4;color:#fff;font-size:6px;line-height:11px;text-align:center;font-weight:bold">O</div><div class="a" style="left:402.5px;top:16.5px;width:18.5px;height:1.5px;background:#b8cfe8"></div><div class="a" style="left:408px;top:4px;width:10px;height:10px;background:#e4ebf6"></div><div class="a" style="left:406px;top:3.5px;width:7.5px;height:11px;background:#2a5699;color:#fff;font-size:5.5px;line-height:11px;text-align:center;font-weight:bold">W</div><svg class="a" style="left:429px;top:3.5px" width="11" height="11" viewBox="0 0 11 11"><path d="M1 1.4 L4.4 8 L6 5.6 L3.4 1.4 Z" fill="#e8388c"/><path d="M4.4 8 L9.6 0.8 L7.4 0.8 L5.2 4.6 Z" fill="#28c8b8"/><rect x="2.2" y="8.8" width="7" height="1.6" fill="#e8e8f0"/></svg><svg class="a" style="left:451.5px;top:3.5px" width="11" height="11" viewBox="0 0 11 11"><path d="M8.6 3 A3.8 3.8 0 1 0 8.8 7.6" fill="none" stroke="#b030e0" stroke-width="2"/><rect x="2" y="9" width="7.4" height="1.6" fill="#f0e8f4"/><circle cx="8.8" cy="3" r="1" fill="#f4a020"/></svg><div class="a" style="left:473.8px;top:4.2px;width:10.4px;height:9.6px;background:#1c3004;border:1px solid #8cdc1e;color:#8cdc1e;font-size:5.2px;line-height:7.6px;text-align:center;font-weight:bold;letter-spacing:-0.2px">Dw</div><div class="a" style="left:496.3px;top:4.2px;width:10.4px;height:9.6px;background:#2e2e04;border:1px solid #d4d41c;color:#d4d41c;font-size:5.2px;line-height:7.6px;text-align:center;font-weight:bold;letter-spacing:-0.2px">Mu</div><svg class="a" style="left:518px;top:4px" width="12" height="10" viewBox="0 0 12 10"><path d="M1 3.4 L7.6 1 L9.4 6.4 L2.8 8.8 Z" fill="#dcdfe4"/><path d="M3.6 2.2 L10.8 2.6 L10.4 8.6 L3.2 8.2 Z" fill="#f4f5f7" fill-opacity="0.9"/></svg><div class="a" style="left:540.5px;top:2.5px;width:11px;height:12px;color:#f2f2f2;font-size:11px;line-height:12px;text-align:center;font-weight:bold">S</div><div class="a" style="left:547px;top:11px;width:4.5px;height:4.5px;border-radius:50%;background:#c4201c"></div><svg class="a" style="left:562.5px;top:4px" width="12" height="10" viewBox="0 0 12 10"><path d="M6 0.4 L2.8 5.6 L9.2 5.6 Z" fill="#e83a30"/><path d="M2.8 5.6 L0.4 9.6 H6 Z" fill="#38b838"/><path d="M9.2 5.6 L11.6 9.6 H6 Z" fill="#3868e8"/><path d="M2.8 5.6 H9.2 L6 9.6 Z" fill="#e8e030" fill-opacity="0.75"/></svg><svg class="a" style="left:584px;top:3px" width="12" height="12" viewBox="0 0 12 12"><circle cx="6" cy="5" r="4.6" fill="#6a7a3a"/><circle cx="4" cy="4" r="2" fill="#8a9a52"/><circle cx="7.6" cy="6" r="2" fill="#505e28"/><rect x="5.2" y="8" width="1.6" height="3.6" fill="#8a7a5a"/></svg><div class="a" style="left:607.8px;top:4.2px;width:10.4px;height:9.6px;background:#12123c;border:1px solid #9090f0;color:#9090f0;font-size:5.2px;line-height:7.6px;text-align:center;font-weight:bold;letter-spacing:-0.2px">En</div><svg class="a" style="left:630px;top:3px" width="11" height="12" viewBox="0 0 11 12"><path d="M5.5 0.6 L8.6 9 H2.4 Z" fill="#f08818"/><path d="M4.2 4 H6.8 L7.6 6.2 H3.4 Z" fill="#f4f0e8"/><path d="M0.8 9 H10.2 L10.6 11.4 H0.4 Z" fill="#e87810"/></svg><svg class="a" style="left:652px;top:3px" width="12" height="12" viewBox="0 0 12 12"><circle cx="6" cy="6" r="5.2" fill="#d8e4ec" stroke="#8aa4b8" stroke-width="1"/><circle cx="6" cy="6" r="2.8" fill="#f4f8fa"/></svg><svg class="a" style="left:675px;top:3px" width="10" height="12" viewBox="0 0 10 12"><rect x="0.8" y="0.4" width="8.4" height="11.2" fill="#e8e8e8"/><rect x="2" y="1.6" width="6" height="2.4" fill="#444"/><g fill="#444"><rect x="2" y="5.2" width="1.4" height="1.3"/><rect x="4.3" y="5.2" width="1.4" height="1.3"/><rect x="6.6" y="5.2" width="1.4" height="1.3"/><rect x="2" y="7.3" width="1.4" height="1.3"/><rect x="4.3" y="7.3" width="1.4" height="1.3"/><rect x="6.6" y="7.3" width="1.4" height="1.3"/><rect x="2" y="9.4" width="1.4" height="1.3"/><rect x="4.3" y="9.4" width="1.4" height="1.3"/><rect x="6.6" y="9.4" width="1.4" height="1.3"/></g></svg><div class="a" style="left:696.5px;top:3px;width:11.5px;height:12px;background:#b81410;color:#fff;font-size:8px;line-height:12px;text-align:center;font-weight:bold;letter-spacing:-0.5px;font-style:italic">Fz</div><div class="a" style="left:712px;top:0;width:23px;height:18px;background:#3a3d44"></div><div class="a" style="left:712px;top:16.5px;width:23px;height:1.5px;background:#a8c8e8"></div><div class="a" style="left:718.5px;top:3.5px;width:10.5px;height:10.5px;background:#2a1c05;border:1px solid #4a3208"></div><div class="a" style="left:720.7px;top:5.7px;width:6px;height:6px;border-radius:50%;border:1.3px solid #d89a1c"></div><div class="a" style="left:741.5px;top:3.5px;width:11px;height:10.5px;background:#1c2c6c;border:1px solid #2c3c84"></div><div class="a" style="left:744.2px;top:6px;width:5.6px;height:5.6px;border-radius:50%;background:#4a64c8;opacity:0.8"></div><svg class="a" style="left:777px;top:5px" width="70" height="9" viewBox="0 0 70 9"><path d="M1.6 5.6 L4 3.2 L6.4 5.6" fill="none" stroke="#e8e8e8" stroke-width="0.8"/><path d="M11.4 6.8 A1.8 1.8 0 0 1 12 3.4 A2.4 2.4 0 0 1 16.4 3.4 A1.8 1.8 0 0 1 17 6.8 Z" fill="#f0f0f0"/><rect x="21" y="2.6" width="6.4" height="3.8" fill="none" stroke="#e8e8e8" stroke-width="0.8"/><rect x="21.6" y="3.2" width="3.2" height="2.6" fill="#e8e8e8"/><rect x="27.6" y="3.8" width="0.9" height="1.4" fill="#e8e8e8"/><path d="M31.8 7 L37.4 1.6 V7 Z" fill="none" stroke="#b8b8b8" stroke-width="0.7"/><path d="M31.8 7 L35.2 3.8 V7 Z" fill="#f0f0f0"/><path d="M41.6 3.4 H43 L45 1.6 V7.4 L43 5.6 H41.6 Z" fill="#f0f0f0"/><path d="M46.4 2.8 A2.4 2.4 0 0 1 46.4 6.2 M47.8 1.6 A4 4 0 0 1 47.8 7.4" fill="none" stroke="#f0f0f0" stroke-width="0.7"/><path d="M54.4 0.8 H62.6 V6.4 H58.2 L56.4 8.4 V6.4 H54.4 Z" fill="#f4f4f4"/></svg><div class="a" style="left:842px;top:1.5px;width:26px;text-align:center;font-size:5.3px;line-height:7px;color:#f2f2f2">10:38</div><div class="a" style="left:838px;top:9px;width:34px;text-align:center;font-size:5.3px;line-height:7px;color:#f2f2f2">24-5-2016</div></div>
</body></html>
